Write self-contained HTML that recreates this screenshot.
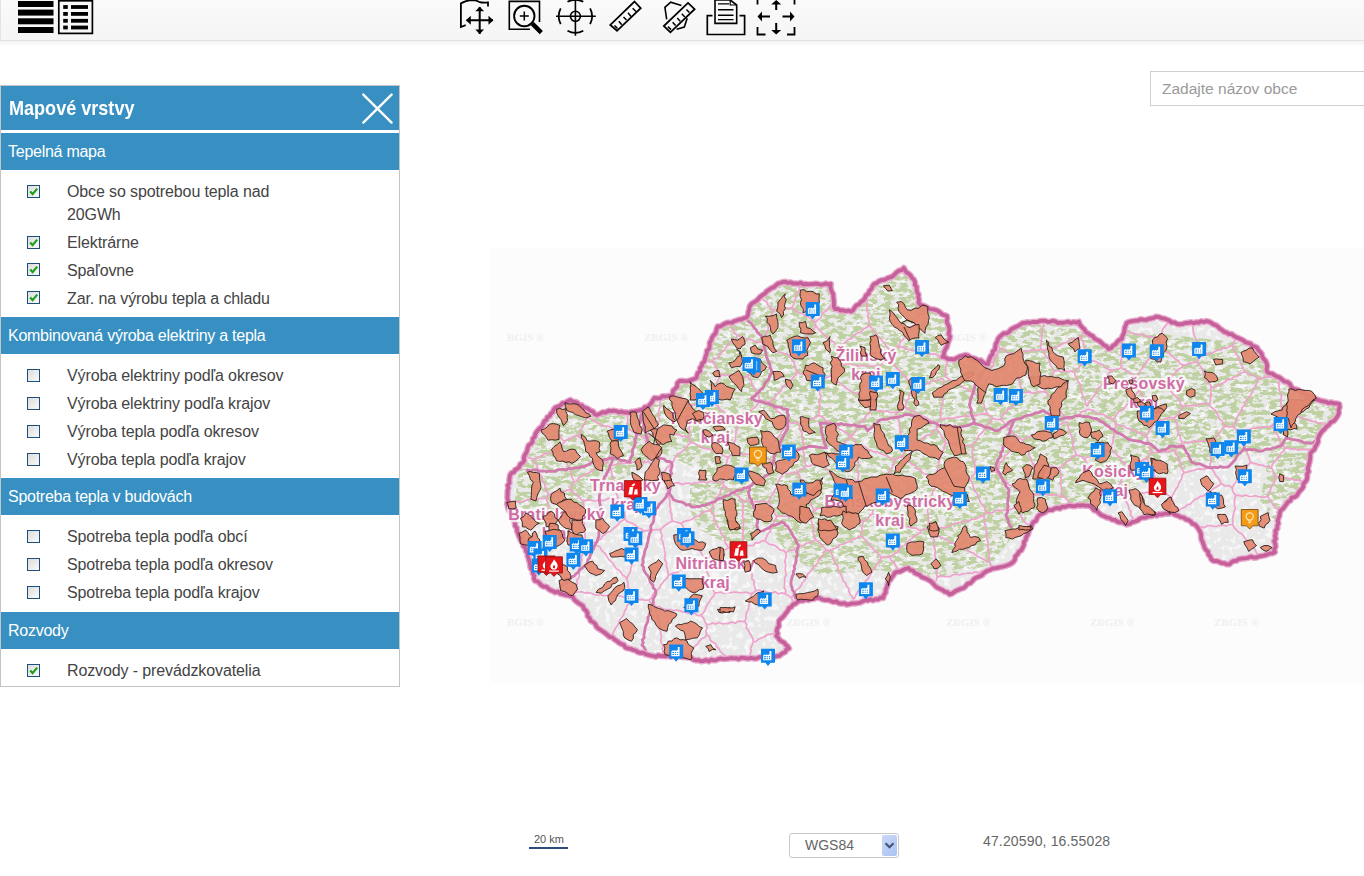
<!DOCTYPE html>
<html><head><meta charset="utf-8">
<style>
html,body{margin:0;padding:0;width:1364px;height:876px;overflow:hidden;background:#fff;font-family:"Liberation Sans",sans-serif;position:relative}
.abs{position:absolute}
#toolbar{position:absolute;left:0;top:0;width:1363px;height:40px;background:linear-gradient(#fafafa,#f5f5f5);border-left:1px solid #e4e4e4;border-bottom:1px solid #e2e2e2}
#tshadow{position:absolute;left:0;top:41px;width:1364px;height:6px;background:linear-gradient(#f3f3f3,#fff)}
#panel{position:absolute;left:0;top:85px;width:398px;height:600px;border:1px solid #c4c4c4;background:#fff}
.ttl{position:absolute;left:0;top:0;width:398px;height:44px;background:#3790c1}
.ttl span{position:absolute;left:8px;top:10px;font-weight:bold;font-size:21px;color:#fff;line-height:23px;transform:scaleX(0.86);transform-origin:0 0;white-space:nowrap}
.hdr{position:absolute;left:0;width:398px;height:37px;background:#3790c1;color:#fff;font-size:16px;line-height:20px}
.hdr span{position:absolute;left:7px;top:9px;letter-spacing:-0.26px}
.row{position:absolute;left:66px;font-size:16px;color:#444;line-height:23px;letter-spacing:-0.12px;white-space:nowrap}
.cb{position:absolute;left:26px;width:11px;height:11px;border:1px solid #1d4f7c;background:linear-gradient(135deg,#dcdcdc,#fafafa)}
.cb svg{position:absolute;left:0;top:0}
</style></head><body>
<div id="toolbar"></div>
<svg class="abs" style="left:0;top:0" width="820" height="40" viewBox="0 0 820 40">
<g fill="#000">
<rect x="18" y="1" width="35.5" height="6"/><rect x="18" y="9.6" width="35.5" height="6"/><rect x="18" y="18.3" width="35.5" height="6"/><rect x="18" y="27" width="35.5" height="6"/>
<rect x="63.2" y="5.1" width="4.6" height="3.8"/><rect x="71" y="5.1" width="17" height="3.8"/>
<rect x="63.2" y="12" width="4.6" height="3.8"/><rect x="71" y="12" width="17" height="3.8"/>
<rect x="63.2" y="18.9" width="4.6" height="3.8"/><rect x="71" y="18.9" width="17" height="3.8"/>
<rect x="63.2" y="25.6" width="4.6" height="3.8"/><rect x="71" y="25.6" width="17" height="3.8"/>
</g>
<rect x="58.8" y="0.8" width="33.6" height="32.6" fill="none" stroke="#000" stroke-width="1.7"/>
<g fill="none" stroke="#000" stroke-width="1.8">
<path d="M465.7 25.1 L460.9 27 L460.9 3.4 Q466 0.5 471 0.2 Q476 0.2 479 1.8 Q482 3 488 2.4 L488 6.4"/>
<path d="M466.5 20.3 H493 M479.7 7 V34" stroke-width="2"/>
</g>
<g fill="#000">
<path d="M466 20.3 L470.8 15.8 L470.8 24.8 Z M493.3 20.3 L488.5 15.8 L488.5 24.8 Z M479.7 6.8 L475.3 11.3 L484.1 11.3 Z M479.7 34 L475.3 29.5 L484.1 29.5 Z"/>
</g>
<g fill="none" stroke="#000">
<path d="M539.5 22 V1.4 H509.3 V29.3 H530" stroke-width="1.6"/>
<circle cx="524.3" cy="16" r="10.2" stroke-width="1.9"/>
<path d="M524.3 11.5 V20.5 M519.8 16 H528.8" stroke-width="1.5"/>
<path d="M532.3 23.6 L541.3 32.6" stroke-width="4.4"/>
</g>
<g fill="none" stroke="#000" stroke-width="1.6">
<path d="M556 16.3 H595.8 M575.4 0 V35.8"/>
<circle cx="575.4" cy="16.3" r="5"/>
<path d="M567.5 1.8 A17 17 0 0 1 583.3 1.8 M583.3 30.8 A17 17 0 0 1 567.5 30.8 M560.7 8.4 A17 17 0 0 0 560.7 24.2 M590.1 24.2 A17 17 0 0 0 590.1 8.4" stroke-width="1.8"/>
</g>
<g fill="none" stroke="#000" stroke-width="1.8" stroke-linejoin="miter">
<path d="M634.5 1.5 L640.7 8.1 L617 30.8 L610.3 24.9 Z"/>
<path d="M614.5 25.5 L617.5 28.5 M618.8 21.2 L621.8 24.8 M623.5 17 L626.5 20 M628 12.8 L631 16.5 M632.6 8.3 L636 11.5" stroke-width="1.5"/>
<path d="M688 2.9 L694.6 9.2 L670.4 32.3 L663.8 26 Z"/>
<path d="M668 26.6 L671 29.6 M672.6 22.3 L675.6 25.6 M677.2 18 L680.2 21.2 M681.8 13.7 L684.8 17 M686.4 9.4 L689.4 12.6" stroke-width="1.5"/>
<path d="M666.7 19.4 L664.9 7.3 L670.7 2.2 L681.4 5.5 M687.2 18.3 L684.3 27.1 L676.6 29.3" stroke-width="1.6"/>
</g>
<g fill="none" stroke="#000" stroke-width="1.7">
<path d="M712.5 15.7 H707.3 V34.5 H744.6 V15.7 H739.5"/>
<path d="M715 0 V23.4 H736.7 V5 L730.2 0 Z" stroke-width="1.6"/>
<path d="M730.2 0 V5 H736.7" stroke-width="1.2"/>
<path d="M718 3.9 H729 M718 9.7 H733.5 M718 15.3 H733.5 M718 19.6 H733.5" stroke-width="1.4"/>
</g>
<g fill="none" stroke="#000" stroke-width="1.8">
<path d="M757.5 0 V4.5 M794.5 0 V4.5 M757.5 27 V34.5 H765.5 M794.5 27 V34.5 H787"/>
<path d="M776.2 10 V2 M776.2 23 V31 M770 16.5 H761 M782.5 16.5 H791" stroke-width="2"/>
</g>
<g fill="#000">
<path d="M776.2 0 L771.2 4.5 L781.2 4.5 Z M776.2 34.5 L771.2 30 L781.2 30 Z M757.5 16.5 L762 11.5 L762 21.5 Z M794.5 16.5 L790 11.5 L790 21.5 Z"/>
</g>
</svg>
<div id="tshadow"></div>

<!--MAP-->
<svg class="abs" style="left:0;top:0" width="1364" height="876" viewBox="0 0 1364 876">
<defs>
<clipPath id="sk"><polygon points="507.6,490.5 508.5,488.1 507.7,485.3 509.5,483.1 509.3,480.5 509.6,477.9 510.0,475.4 511.3,473.1 514.0,472.2 515.2,469.8 517.6,468.6 519.4,466.9 520.3,464.2 522.6,462.9 524.3,460.7 523.8,457.7 524.7,455.2 526.1,452.9 527.2,450.4 527.7,447.8 528.7,445.3 531.1,443.7 532.6,441.6 532.8,438.6 534.8,436.8 535.4,434.0 536.7,431.7 538.4,429.6 540.2,427.7 542.4,426.2 543.2,423.7 544.3,421.3 546.5,419.8 547.3,417.3 549.8,416.1 550.8,413.7 552.9,412.1 553.7,409.6 555.3,407.6 558.0,406.6 560.5,405.5 562.6,403.2 565.5,402.8 567.9,401.2 570.4,400.0 572.4,401.5 575.1,401.9 577.4,402.8 579.0,405.1 581.8,405.3 583.5,407.3 586.0,408.0 588.4,409.1 590.4,410.8 593.0,411.5 594.5,414.0 597.0,415.0 599.9,413.8 602.6,412.2 606.0,412.5 608.7,410.7 611.2,411.1 613.8,410.7 616.4,411.1 618.8,412.4 621.4,411.6 623.9,412.5 626.5,412.3 629.0,413.0 631.6,411.7 634.5,411.4 637.3,411.0 640.1,410.2 642.8,409.6 645.0,407.1 648.0,407.0 649.6,404.8 651.6,402.8 652.9,400.3 654.4,398.0 657.2,398.3 660.0,398.2 662.6,396.2 665.4,396.5 668.2,396.0 671.0,396.0 672.8,393.7 673.1,390.6 675.4,388.6 677.3,386.4 677.4,383.1 679.5,381.0 682.1,380.8 684.8,381.2 687.4,381.3 690.0,380.4 693.3,379.4 696.3,377.9 697.0,375.4 697.8,372.9 700.1,371.1 700.0,368.1 701.7,366.1 702.2,363.5 704.4,361.6 705.0,359.0 705.7,356.3 706.7,353.6 706.9,350.7 709.4,348.5 709.7,345.6 709.7,342.7 711.3,340.2 712.0,337.8 713.3,335.6 715.3,333.7 716.1,331.3 716.7,328.8 717.6,326.4 720.3,326.5 722.5,325.1 724.7,323.7 727.0,322.7 729.6,322.7 732.2,322.6 734.4,321.1 736.8,320.5 739.2,319.5 741.7,319.3 744.0,318.1 746.5,317.6 748.0,315.0 748.4,312.0 749.3,309.2 749.7,306.3 751.5,303.8 753.9,302.4 756.2,301.0 758.2,299.1 760.0,297.0 762.3,295.2 764.9,293.7 766.7,291.3 769.2,289.7 771.6,288.0 774.0,287.1 775.9,285.3 777.9,283.7 780.5,283.0 782.8,282.0 785.4,281.8 787.8,282.9 790.5,282.3 792.9,283.5 795.5,283.4 798.0,283.7 800.7,282.7 803.1,284.3 805.7,284.0 808.2,284.4 810.7,284.2 813.2,284.1 815.7,283.6 818.2,284.0 820.8,284.8 823.3,284.4 825.8,283.4 828.3,284.4 830.8,284.0 830.4,286.6 831.0,289.1 831.6,291.6 833.2,293.9 833.3,296.4 833.6,298.9 833.9,301.5 833.9,304.0 833.9,306.6 835.0,309.0 837.8,308.8 840.2,310.5 843.0,310.2 845.6,311.2 848.4,310.6 851.0,311.6 853.3,310.0 854.7,307.4 856.5,305.3 859.3,304.2 860.9,301.8 863.3,300.3 865.0,298.0 866.0,295.3 868.6,293.7 869.3,290.9 871.5,289.0 872.4,286.3 874.0,284.0 876.7,283.1 879.0,281.1 881.8,280.1 884.7,279.8 887.3,278.3 890.0,277.4 892.7,276.4 894.7,274.4 896.7,272.3 898.9,270.7 901.9,270.1 903.8,268.0 905.1,270.2 906.5,272.4 908.8,273.8 910.7,275.6 911.9,277.9 913.9,279.6 915.0,282.0 914.8,284.7 916.7,286.9 916.6,289.6 917.0,292.2 918.6,294.5 918.3,297.2 919.0,299.7 918.6,302.4 920.0,304.8 922.8,305.5 925.4,306.5 927.9,308.1 930.6,309.2 933.5,309.4 936.0,310.1 938.2,311.1 940.3,312.5 942.2,314.5 944.6,315.2 947.0,316.0 947.3,318.6 946.7,321.2 947.5,323.7 948.7,326.2 949.3,328.7 949.1,331.3 948.6,333.9 950.1,336.4 949.5,339.0 948.4,341.5 947.5,344.1 946.9,346.8 945.4,349.2 944.2,351.7 943.9,354.6 942.6,357.0 945.5,357.5 948.1,359.2 951.1,359.2 954.0,359.6 956.7,358.1 959.5,356.6 962.5,355.8 965.5,355.0 968.1,355.7 970.2,357.7 972.9,358.2 975.5,358.9 977.8,360.6 980.8,360.3 982.8,362.4 985.3,363.6 988.0,364.0 988.6,361.3 989.6,358.8 990.6,356.3 992.5,354.2 992.8,351.4 995.1,349.5 995.4,346.7 995.8,343.9 997.2,341.6 998.0,339.0 999.7,336.8 1001.8,335.0 1003.8,333.3 1007.0,333.3 1009.2,331.8 1010.9,329.5 1013.2,328.2 1015.7,327.0 1018.2,326.0 1020.4,324.5 1022.6,323.0 1025.1,322.8 1027.6,322.3 1030.1,322.8 1032.6,322.0 1035.1,321.9 1037.6,322.0 1040.0,320.9 1042.5,320.8 1045.0,320.8 1047.5,321.8 1050.0,321.8 1052.7,320.9 1055.2,321.3 1057.6,323.0 1060.2,322.7 1062.8,322.8 1065.5,322.4 1068.1,321.7 1070.9,323.0 1073.5,322.0 1076.2,322.6 1078.8,321.7 1079.8,324.7 1081.9,327.1 1084.3,329.2 1085.7,332.0 1088.0,333.4 1090.3,335.0 1092.8,336.1 1094.5,338.6 1096.9,339.8 1099.4,341.0 1101.7,343.0 1103.8,345.1 1106.7,346.5 1108.5,349.0 1111.2,348.0 1113.0,345.6 1115.5,344.3 1117.2,341.8 1119.3,339.9 1122.0,338.8 1122.4,336.0 1123.8,333.5 1124.3,330.8 1124.7,328.0 1125.7,325.4 1126.8,322.8 1129.5,321.7 1132.3,321.2 1135.1,320.7 1138.0,320.5 1140.5,319.3 1143.2,319.7 1145.9,319.9 1148.4,318.9 1151.0,318.5 1153.5,318.0 1156.0,316.6 1158.7,317.0 1161.3,318.1 1164.1,318.5 1166.7,319.5 1169.4,320.5 1171.6,322.5 1174.6,322.4 1177.0,324.0 1179.9,324.4 1182.8,323.9 1185.5,323.0 1188.4,322.8 1191.0,322.2 1193.6,323.2 1196.1,322.2 1198.7,322.7 1201.2,321.2 1203.9,322.0 1206.4,321.1 1209.0,321.7 1211.3,322.9 1213.4,324.4 1215.9,325.2 1218.0,326.7 1219.9,328.6 1222.0,330.0 1224.1,331.8 1226.7,332.5 1228.8,334.1 1231.8,334.1 1233.8,335.9 1236.1,337.2 1238.6,338.1 1241.0,339.3 1243.4,340.4 1245.5,342.2 1248.0,343.0 1250.5,343.6 1252.1,346.1 1254.7,346.5 1257.0,347.6 1258.2,350.0 1260.1,351.8 1261.7,353.9 1262.3,356.6 1263.6,358.9 1265.5,360.8 1266.7,363.5 1267.2,366.4 1266.5,369.4 1267.3,372.2 1269.7,373.4 1272.5,373.7 1274.6,375.4 1277.0,376.6 1279.8,377.6 1282.0,379.5 1284.3,381.5 1287.3,382.0 1289.7,383.7 1291.1,386.4 1293.0,388.8 1295.8,389.4 1298.5,390.2 1300.6,392.4 1303.5,392.6 1305.7,394.7 1308.3,395.7 1311.0,396.3 1313.6,397.4 1315.6,399.1 1318.1,399.9 1320.5,400.8 1323.2,401.3 1325.9,401.8 1328.4,403.1 1331.3,402.4 1333.9,403.4 1336.7,403.5 1339.3,404.2 1339.6,407.3 1338.6,410.1 1338.9,413.2 1337.6,416.0 1335.8,418.6 1333.9,421.0 1330.7,422.2 1329.0,424.8 1326.5,426.6 1324.6,429.0 1322.4,431.0 1320.5,433.4 1319.1,436.0 1318.0,438.7 1318.1,441.8 1316.8,444.5 1315.3,447.0 1314.2,449.7 1311.8,451.5 1310.2,453.9 1310.3,457.0 1310.0,460.0 1309.3,462.9 1308.5,465.9 1307.8,468.6 1308.7,471.5 1307.1,474.1 1307.3,476.9 1306.8,479.6 1305.3,481.8 1303.4,483.8 1303.3,486.9 1301.7,489.1 1299.7,491.0 1298.2,493.3 1296.7,495.7 1294.5,497.1 1291.5,497.7 1290.5,500.6 1288.0,501.8 1286.4,504.1 1284.7,506.3 1283.1,508.6 1280.7,510.3 1279.7,513.0 1279.6,515.6 1278.5,518.1 1277.6,520.6 1278.4,523.4 1277.3,525.8 1277.4,528.5 1275.5,530.8 1275.7,533.5 1275.0,536.0 1275.8,538.7 1274.1,541.3 1275.3,544.0 1275.6,546.7 1274.1,549.3 1275.0,552.0 1272.5,553.3 1269.7,553.4 1267.1,554.6 1264.5,555.4 1261.7,556.0 1259.0,556.4 1256.5,557.5 1253.9,557.7 1251.2,556.6 1248.7,557.6 1246.2,558.2 1243.6,558.4 1241.0,558.7 1238.5,559.2 1236.4,560.8 1233.8,561.0 1231.5,562.1 1229.7,564.3 1227.0,564.4 1224.4,563.2 1221.6,563.1 1219.0,561.8 1216.4,560.9 1213.5,561.0 1211.3,559.2 1210.3,556.6 1208.4,554.5 1208.0,551.5 1205.7,549.7 1204.4,547.3 1203.6,544.6 1202.6,542.0 1201.4,539.5 1201.1,536.7 1201.0,533.8 1199.8,531.3 1198.5,528.8 1196.9,526.6 1195.0,524.5 1192.4,523.7 1190.7,521.5 1188.5,520.0 1185.8,519.3 1183.8,517.6 1180.7,517.1 1178.0,515.7 1175.0,514.9 1172.4,513.0 1169.8,513.5 1167.2,513.7 1164.5,513.6 1161.9,514.6 1159.2,514.1 1156.7,515.6 1154.0,515.0 1151.3,516.2 1148.4,516.3 1145.6,517.5 1142.7,517.6 1139.9,518.5 1137.7,520.5 1135.0,521.5 1132.1,522.2 1129.7,523.9 1126.8,524.5 1124.5,523.5 1122.3,522.2 1119.5,522.4 1117.1,521.6 1115.0,520.0 1112.1,519.7 1109.7,518.0 1106.9,517.5 1104.3,516.3 1101.6,515.3 1099.3,513.4 1097.2,511.2 1094.1,510.3 1092.3,507.9 1090.0,506.0 1087.5,505.7 1085.0,505.7 1082.5,505.2 1080.0,505.7 1077.4,505.2 1074.9,506.2 1072.4,506.2 1069.9,505.5 1067.4,506.0 1064.9,506.9 1062.1,506.6 1059.9,508.6 1057.0,507.8 1054.4,508.6 1052.1,510.1 1049.3,509.8 1046.8,510.8 1044.2,512.8 1041.2,514.0 1038.5,515.7 1037.0,518.0 1036.1,520.7 1033.3,522.1 1032.0,524.6 1031.2,527.3 1029.4,529.4 1028.6,532.1 1027.8,534.7 1026.2,537.1 1025.6,539.8 1023.9,542.2 1023.9,545.1 1022.6,547.6 1021.4,550.2 1018.8,551.8 1017.5,554.4 1015.4,556.3 1014.9,559.5 1013.4,561.8 1011.0,563.6 1008.6,564.8 1006.1,565.7 1003.5,566.5 1000.9,567.0 998.3,567.6 995.7,568.2 992.9,568.4 990.5,569.7 988.0,570.5 985.7,571.7 983.6,573.3 981.9,575.3 979.5,576.4 977.0,577.3 974.3,578.7 972.5,581.0 970.4,583.1 967.3,583.9 965.5,586.4 963.5,588.1 960.9,588.7 958.6,589.7 956.2,590.7 954.1,592.1 951.9,593.6 949.5,594.4 947.6,592.3 944.8,591.7 942.6,590.0 940.1,588.9 937.6,587.7 935.4,586.2 933.5,584.0 931.6,581.9 929.3,580.4 927.0,579.0 924.4,577.9 921.7,577.1 919.8,575.0 917.3,573.9 914.8,572.9 913.1,570.6 910.3,570.1 908.4,568.0 905.6,568.8 903.0,570.0 900.4,571.5 897.4,571.8 894.7,572.7 893.6,575.1 891.9,577.2 890.6,579.5 888.5,581.3 887.8,584.0 887.0,586.8 885.7,589.5 885.7,592.5 883.9,595.0 883.3,597.9 880.6,597.6 878.3,599.4 875.6,599.2 873.1,600.4 870.3,599.2 867.9,600.5 865.1,600.1 862.7,601.3 860.2,602.6 857.5,603.1 854.8,603.4 852.1,603.4 849.4,604.1 846.8,604.7 844.4,603.2 841.5,603.7 838.8,603.2 836.5,601.4 833.6,602.0 831.0,601.1 828.5,600.0 825.3,600.1 822.2,599.4 819.4,597.9 816.5,597.6 813.9,599.0 811.1,599.1 808.4,600.2 805.5,599.5 802.8,600.7 800.0,600.7 797.6,601.8 795.6,603.6 793.0,604.5 791.4,606.9 789.0,608.0 787.9,610.6 786.2,612.7 784.6,614.9 782.9,617.0 780.8,618.8 779.0,620.8 778.7,623.4 779.0,626.0 777.3,628.3 776.6,630.8 777.7,633.6 776.4,636.0 778.2,637.7 779.5,640.0 781.6,641.5 784.1,642.6 785.6,644.7 787.6,646.2 789.0,648.4 786.5,649.2 785.4,651.9 783.0,653.0 780.9,654.4 779.0,656.0 776.5,656.1 774.0,657.2 771.5,657.4 769.0,657.5 766.3,656.7 763.8,657.1 761.3,656.9 758.8,657.4 756.4,658.6 753.8,658.5 751.3,657.9 748.8,658.5 746.3,658.4 743.8,657.9 741.2,657.7 738.7,659.1 736.2,658.2 733.7,658.3 731.2,658.0 728.7,658.5 726.2,658.8 723.7,659.0 721.1,658.5 718.6,658.8 716.2,660.2 713.7,660.3 711.1,659.6 708.7,661.4 706.0,660.0 703.6,661.0 700.9,661.2 698.5,660.1 695.9,660.4 693.4,659.7 691.1,657.9 688.6,657.4 686.0,657.3 683.4,657.1 680.9,656.8 678.4,656.0 675.9,656.6 673.4,655.2 670.9,656.8 668.4,655.5 665.8,656.3 663.3,655.9 660.8,656.1 658.3,655.2 655.8,656.8 653.3,656.0 650.7,655.5 648.1,654.8 645.6,654.2 643.3,652.7 640.5,652.8 637.9,652.1 635.7,650.5 633.1,649.9 630.7,648.8 628.0,648.4 625.4,647.4 623.9,644.9 621.2,644.0 618.8,642.7 616.8,640.8 614.5,639.5 612.6,637.5 609.7,636.9 607.7,635.2 605.6,633.4 603.3,631.7 601.0,630.1 598.6,628.7 596.5,626.8 595.3,623.9 593.1,622.1 590.5,620.8 589.8,618.1 587.6,616.1 587.5,613.0 586.1,610.6 583.9,608.7 583.0,606.0 580.8,604.5 578.5,603.1 576.4,601.4 574.3,599.7 573.0,597.0 570.4,596.0 567.9,595.3 565.2,595.0 562.7,594.2 560.2,593.7 558.0,591.7 555.1,592.4 552.8,591.0 550.4,590.1 548.3,588.7 546.5,586.7 543.6,586.6 541.4,585.4 539.7,583.4 537.8,581.5 535.2,581.0 533.9,578.6 534.3,575.7 532.7,573.4 532.7,570.7 530.8,568.5 530.2,565.9 530.0,563.3 529.2,560.9 528.6,558.4 527.6,555.9 527.7,553.3 525.9,551.0 525.6,548.0 523.3,546.0 522.8,543.1 521.0,540.9 520.0,538.2 518.8,535.8 518.0,533.3 517.0,530.9 517.0,528.1 515.1,525.9 515.0,523.2 513.9,520.7 512.2,518.5 512.6,515.3 510.8,513.1 509.2,510.8 508.2,508.3 507.6,505.6 507.1,503.1 508.1,500.6 507.4,498.1 507.5,495.5 507.6,493.0"/></clipPath>
<filter id="noise" color-interpolation-filters="sRGB" x="0" y="0" width="100%" height="100%"><feTurbulence type="fractalNoise" baseFrequency="0.13 0.26" numOctaves="4" seed="7" result="n"/><feColorMatrix in="n" type="matrix" values="0 0 0 0 0.75  0 0 0 0 0.82  0 0 0 0 0.64  0 0 0 9 -4.05"/></filter>
<filter id="noisew" color-interpolation-filters="sRGB" x="0" y="0" width="100%" height="100%"><feTurbulence type="fractalNoise" baseFrequency="0.18" numOctaves="2" seed="11" result="n"/><feColorMatrix in="n" type="matrix" values="0 0 0 0 0.965  0 0 0 0 0.965  0 0 0 0 0.965  0 0 0 10 -5.4"/></filter>
<filter id="jag" x="480" y="250" width="880" height="430" filterUnits="userSpaceOnUse"><feTurbulence type="turbulence" baseFrequency="0.13" numOctaves="2" seed="3" result="t"/><feDisplacementMap in="SourceGraphic" in2="t" scale="4" xChannelSelector="R" yChannelSelector="G"/></filter>
<filter id="jag2" x="480" y="250" width="880" height="430" filterUnits="userSpaceOnUse"><feTurbulence type="turbulence" baseFrequency="0.18" numOctaves="2" seed="5" result="t"/><feDisplacementMap in="SourceGraphic" in2="t" scale="3" xChannelSelector="R" yChannelSelector="G"/></filter>
</defs>
<rect x="490" y="248" width="874" height="435" fill="#fcfcfc"/>
<text x="507" y="341" font-family="Liberation Serif" font-weight="bold" font-size="11" fill="#f0f0f0">BGIS ®</text>
<text x="644" y="341" font-family="Liberation Serif" font-weight="bold" font-size="11" fill="#f0f0f0">ZBGIS ®</text>
<text x="942" y="341" font-family="Liberation Serif" font-weight="bold" font-size="11" fill="#f0f0f0">ZBGIS ®</text>
<text x="507" y="626" font-family="Liberation Serif" font-weight="bold" font-size="11" fill="#f0f0f0">BGIS ®</text>
<text x="786" y="626" font-family="Liberation Serif" font-weight="bold" font-size="11" fill="#f0f0f0">ZBGIS ®</text>
<text x="946" y="626" font-family="Liberation Serif" font-weight="bold" font-size="11" fill="#f0f0f0">ZBGIS ®</text>
<text x="1090" y="626" font-family="Liberation Serif" font-weight="bold" font-size="11" fill="#f0f0f0">ZBGIS ®</text>
<text x="1214" y="626" font-family="Liberation Serif" font-weight="bold" font-size="11" fill="#f0f0f0">ZBGIS ®</text>
<g clip-path="url(#sk)">
<rect x="490" y="248" width="874" height="435" fill="#e9e9e9"/>
<rect x="490" y="248" width="874" height="435" filter="url(#noisew)"/>
<g>
<clipPath id="g139758558533184"><polygon points="650.0,395.0 716.0,326.0 771.0,284.0 904.0,268.0 1040.0,320.0 1260.0,345.0 1340.0,405.0 1310.0,455.0 1290.0,480.0 1270.0,450.0 1180.0,470.0 1100.0,500.0 1030.0,515.0 990.0,565.0 930.0,580.0 880.0,570.0 820.0,575.0 790.0,555.0 760.0,520.0 730.0,500.0 700.0,470.0 655.0,450.0"/></clipPath>
<rect x="490" y="248" width="874" height="435" filter="url(#noise)" clip-path="url(#g139758558533184)"/>
<clipPath id="g139758556627264"><polygon points="520.0,460.0 570.0,400.0 655.0,398.0 660.0,440.0 640.0,470.0 600.0,490.0 570.0,520.0 540.0,525.0 515.0,500.0"/></clipPath>
<rect x="490" y="248" width="874" height="435" filter="url(#noise)" clip-path="url(#g139758556627264)"/>
<clipPath id="g139758556561280"><polygon points="1270.0,450.0 1310.0,450.0 1300.0,500.0 1280.0,530.0 1260.0,500.0"/></clipPath>
<rect x="490" y="248" width="874" height="435" filter="url(#noise)" clip-path="url(#g139758556561280)"/>
<clipPath id="g139758556627328"><polygon points="690.0,485.0 720.0,470.0 750.0,470.0 760.0,500.0 755.0,540.0 730.0,545.0 700.0,530.0 690.0,510.0"/></clipPath>
<rect x="490" y="248" width="874" height="435" filter="url(#noise)" clip-path="url(#g139758556627328)"/>
</g>
<polyline points="1311.4,450.6 1308.1,449.7 1304.8,449.1 1301.4,449.6 1298.1,449.9 1294.8,448.7 1291.4,449.1 1288.2,448.0 1284.8,448.3" fill="none" stroke="#efa2cc" stroke-width="1.7"/>
<polyline points="1327.0,425.4 1324.1,424.3 1321.1,423.4 1318.0,423.3 1315.3,421.4 1312.1,421.4 1309.1,420.5 1306.4,419.0 1303.2,418.8 1300.5,416.8 1297.3,416.9 1294.3,416.2 1291.1,416.0 1288.6,413.7 1285.3,413.9 1282.5,412.5" fill="none" stroke="#efa2cc" stroke-width="1.7"/>
<polyline points="1284.8,448.3 1283.1,445.5 1280.9,443.0 1279.5,440.1 1278.6,436.8 1276.8,434.1 1274.2,431.8 1273.7,428.3 1271.4,425.9" fill="none" stroke="#efa2cc" stroke-width="1.7"/>
<polyline points="1282.5,412.5 1280.8,415.6 1278.3,418.0 1276.3,420.9 1273.9,423.5 1271.4,425.9" fill="none" stroke="#efa2cc" stroke-width="1.7"/>
<polyline points="1278.5,378.6 1278.9,381.7 1279.1,384.8 1279.0,387.9 1279.5,391.0 1280.9,393.9 1281.4,397.0 1280.6,400.2 1281.0,403.3 1281.5,406.4 1281.2,409.5 1282.5,412.5" fill="none" stroke="#efa2cc" stroke-width="1.7"/>
<polyline points="1240.4,431.1 1236.2,429.5 1232.6,426.7" fill="none" stroke="#efa2cc" stroke-width="1.7"/>
<polyline points="1259.3,378.4 1257.4,380.8 1256.4,383.8 1255.1,386.6 1253.5,389.2 1252.3,392.0 1250.9,394.8 1248.9,397.2 1247.1,399.7 1245.4,402.3 1244.6,405.3 1242.2,407.5 1242.1,410.9 1239.1,412.8 1238.0,415.7 1236.4,418.3 1236.2,421.7 1233.9,423.9 1232.6,426.7" fill="none" stroke="#efa2cc" stroke-width="1.7"/>
<polyline points="1274.9,376.7 1271.8,377.1 1268.6,377.1 1265.4,376.8 1262.4,378.1 1259.3,378.4" fill="none" stroke="#efa2cc" stroke-width="1.7"/>
<polyline points="1240.4,431.1 1243.5,430.7 1246.7,430.4 1249.7,429.5 1252.7,428.2 1255.9,428.2 1258.9,427.2 1262.1,427.7 1265.2,426.7 1268.4,427.2 1271.4,425.9" fill="none" stroke="#efa2cc" stroke-width="1.7"/>
<polyline points="1250.6,462.3 1248.4,464.6 1246.2,466.9 1245.5,470.3 1243.7,472.9 1241.9,475.5 1239.4,477.5 1237.6,480.1 1235.5,482.5 1233.7,485.1 1232.1,487.8" fill="none" stroke="#efa2cc" stroke-width="1.7"/>
<polyline points="1250.6,462.3 1253.5,463.4 1256.5,463.9 1259.3,465.1 1262.5,465.2 1265.2,466.7 1268.5,466.3 1271.3,467.7" fill="none" stroke="#efa2cc" stroke-width="1.7"/>
<polyline points="1268.1,496.5 1264.8,497.2 1261.6,497.0 1258.4,496.7 1255.2,495.6 1251.9,496.5 1248.7,496.3 1245.5,495.0 1242.2,496.4 1239.0,495.4 1235.8,495.4" fill="none" stroke="#efa2cc" stroke-width="1.7"/>
<polyline points="1268.1,496.5 1268.3,493.2 1270.2,490.6 1271.1,487.6 1272.4,484.8 1274.5,482.2 1274.6,478.9 1275.9,476.1" fill="none" stroke="#efa2cc" stroke-width="1.7"/>
<polyline points="1235.8,495.4 1233.1,492.0 1232.1,487.8" fill="none" stroke="#efa2cc" stroke-width="1.7"/>
<polyline points="1275.9,476.1 1274.1,473.4 1273.1,470.4 1271.3,467.7" fill="none" stroke="#efa2cc" stroke-width="1.7"/>
<polyline points="1212.7,440.3 1213.1,443.4 1211.2,446.3 1211.0,449.4 1212.4,452.6 1210.4,455.4 1211.0,458.6 1211.1,461.7 1209.8,464.6 1210.1,467.7" fill="none" stroke="#efa2cc" stroke-width="1.7"/>
<polyline points="1221.3,483.5 1219.9,480.5 1218.1,477.8 1215.8,475.6 1214.3,472.7 1212.6,469.9 1210.1,467.7" fill="none" stroke="#efa2cc" stroke-width="1.7"/>
<polyline points="1225.8,426.1 1229.1,427.0 1232.6,426.7" fill="none" stroke="#efa2cc" stroke-width="1.7"/>
<polyline points="1225.8,426.1 1223.0,427.9 1221.0,430.4 1219.2,433.2 1217.4,435.9 1215.2,438.3 1212.7,440.3" fill="none" stroke="#efa2cc" stroke-width="1.7"/>
<polyline points="1240.4,431.1 1241.2,434.3 1243.3,437.0 1243.8,440.4 1245.2,443.3 1244.6,447.0 1246.4,449.9 1247.3,453.0 1248.3,456.1 1249.3,459.3 1250.6,462.3" fill="none" stroke="#efa2cc" stroke-width="1.7"/>
<polyline points="1221.3,483.5 1224.5,485.8 1228.8,485.5 1232.1,487.8" fill="none" stroke="#efa2cc" stroke-width="1.7"/>
<polyline points="1284.8,448.3 1283.5,451.5 1280.4,453.4 1279.4,456.9 1276.6,459.0 1274.7,461.8 1272.4,464.4 1271.3,467.7" fill="none" stroke="#efa2cc" stroke-width="1.7"/>
<polyline points="1259.6,555.2 1256.9,553.4 1255.3,550.7 1254.0,547.7 1251.6,545.7 1248.6,544.1 1247.6,540.9 1245.3,538.8 1243.7,536.0 1241.6,533.7 1238.6,532.2 1236.5,530.0 1234.3,527.7 1232.9,524.8" fill="none" stroke="#efa2cc" stroke-width="1.7"/>
<polyline points="1278.7,512.9 1277.7,509.6 1275.5,507.2 1273.0,504.9 1271.7,501.9 1269.3,499.6 1268.1,496.5" fill="none" stroke="#efa2cc" stroke-width="1.7"/>
<polyline points="1232.9,524.8 1232.7,521.5 1232.6,518.2 1233.4,515.0 1233.9,511.7 1235.4,508.6 1234.4,505.2 1234.5,501.9 1234.7,498.6 1235.8,495.4" fill="none" stroke="#efa2cc" stroke-width="1.7"/>
<polyline points="1304.0,482.2 1301.0,480.9 1298.0,479.9 1294.6,480.2 1291.6,478.9 1288.5,478.5 1285.3,477.9 1282.0,478.2 1278.9,477.2 1275.9,476.1" fill="none" stroke="#efa2cc" stroke-width="1.7"/>
<polyline points="1211.2,388.0 1210.5,384.7 1207.6,382.5 1205.8,379.8 1204.8,376.6 1203.3,373.8 1202.6,370.4 1201.2,367.5 1199.3,364.8 1197.3,362.2" fill="none" stroke="#efa2cc" stroke-width="1.7"/>
<polyline points="1211.2,388.0 1214.4,387.5 1217.2,386.1 1219.9,384.5 1222.7,383.0 1225.5,381.6 1227.9,379.4 1231.3,379.2 1233.7,377.0 1236.9,376.5 1239.1,373.8 1242.1,372.7 1245.2,372.0" fill="none" stroke="#efa2cc" stroke-width="1.7"/>
<polyline points="1232.4,345.6 1233.3,348.8 1234.7,351.7 1236.5,354.5 1238.8,357.0 1239.6,360.2 1240.6,363.4 1242.2,366.2 1243.4,369.2 1245.2,372.0" fill="none" stroke="#efa2cc" stroke-width="1.7"/>
<polyline points="1232.4,345.6 1229.4,346.3 1226.8,348.2 1223.5,348.0 1220.9,350.0 1217.7,350.0 1214.9,351.5 1212.2,353.0 1209.2,353.9 1205.8,353.5 1203.3,355.5 1200.3,356.3" fill="none" stroke="#efa2cc" stroke-width="1.7"/>
<polyline points="1200.3,356.3 1198.1,358.9 1197.3,362.2" fill="none" stroke="#efa2cc" stroke-width="1.7"/>
<polyline points="1209.3,403.9 1210.5,400.8 1210.4,397.6 1211.4,394.5 1210.7,391.2 1211.2,388.0" fill="none" stroke="#efa2cc" stroke-width="1.7"/>
<polyline points="1225.8,426.1 1223.5,424.0 1222.3,421.0 1219.6,419.2 1218.4,416.2 1217.0,413.5 1215.5,410.8 1213.2,408.7 1210.6,406.8 1209.3,403.9" fill="none" stroke="#efa2cc" stroke-width="1.7"/>
<polyline points="1259.3,378.4 1256.4,377.3 1253.8,375.5 1250.6,375.0 1247.9,373.4 1245.2,372.0" fill="none" stroke="#efa2cc" stroke-width="1.7"/>
<polyline points="1235.5,337.9 1234.1,341.8 1232.4,345.6" fill="none" stroke="#efa2cc" stroke-width="1.7"/>
<polyline points="1191.3,323.6 1192.8,326.4 1193.1,329.5 1193.4,332.6 1194.4,335.5 1195.6,338.4 1196.9,341.2 1197.5,344.3 1198.6,347.2 1198.0,350.5 1199.5,353.3 1200.3,356.3" fill="none" stroke="#efa2cc" stroke-width="1.7"/>
<polyline points="611.0,635.8 613.0,633.3 614.3,630.5 615.8,627.7 617.7,625.3 618.9,622.3 620.1,619.4 622.1,617.0 623.8,614.4 624.5,611.1 626.3,608.6 627.3,605.6 629.3,603.1 630.5,600.2 632.8,597.9" fill="none" stroke="#efa2cc" stroke-width="1.7"/>
<polyline points="569.9,594.8 572.9,593.9 575.6,592.2" fill="none" stroke="#efa2cc" stroke-width="1.7"/>
<polyline points="575.6,592.2 578.8,592.0 581.9,591.8 585.0,592.8 588.2,592.6 591.3,593.2 594.3,594.6 597.5,594.9 600.6,595.0 603.7,595.6 606.9,595.5 610.1,595.0 613.3,594.5 616.3,595.6 619.5,595.8 622.6,596.8 625.7,597.4 628.9,596.4 632.0,597.1" fill="none" stroke="#efa2cc" stroke-width="1.7"/>
<polyline points="776.1,632.0 773.4,633.6 770.2,634.1 767.2,634.9 764.5,636.7 761.6,637.7 758.7,639.0 756.3,641.1 753.3,642.1" fill="none" stroke="#efa2cc" stroke-width="1.7"/>
<polyline points="749.0,657.5 750.1,654.5 751.0,651.4 750.7,648.0 752.1,645.1 753.3,642.1" fill="none" stroke="#efa2cc" stroke-width="1.7"/>
<polyline points="685.5,656.4 687.4,654.0 689.7,652.0 691.4,649.4 693.6,647.3 695.9,645.3 698.2,643.3 699.8,640.6 701.9,638.4 705.0,637.2 706.8,634.7" fill="none" stroke="#efa2cc" stroke-width="1.7"/>
<polyline points="726.9,657.7 724.9,655.4 722.4,653.5 720.4,651.2 718.8,648.6 716.6,646.4 715.4,643.4 712.4,642.0 710.1,640.0 709.4,636.5 706.8,634.7" fill="none" stroke="#efa2cc" stroke-width="1.7"/>
<polyline points="1209.3,403.9 1206.0,403.6 1202.7,403.6 1199.4,404.1 1196.3,406.1 1192.9,405.1 1189.7,405.8 1186.4,405.7 1183.2,406.7" fill="none" stroke="#efa2cc" stroke-width="1.7"/>
<polyline points="1183.0,364.9 1186.6,364.6 1190.1,363.1 1193.7,362.5 1197.3,362.2" fill="none" stroke="#efa2cc" stroke-width="1.7"/>
<polyline points="1183.0,364.9 1181.3,367.7 1178.2,369.2 1176.2,371.6 1174.4,374.3 1171.8,376.2 1170.9,379.7 1169.0,382.3 1166.3,384.1" fill="none" stroke="#efa2cc" stroke-width="1.7"/>
<polyline points="1166.3,384.1 1169.0,386.0 1170.2,389.0 1171.3,392.1 1173.4,394.4 1175.9,396.5 1178.1,398.7 1180.0,401.2 1180.6,404.8 1183.2,406.7" fill="none" stroke="#efa2cc" stroke-width="1.7"/>
<polyline points="1183.0,364.9 1180.0,363.6 1178.4,360.6 1175.4,359.2 1173.2,356.9 1170.7,355.0 1168.4,352.7 1165.9,350.9 1163.2,349.1 1161.5,346.3 1158.6,344.8" fill="none" stroke="#efa2cc" stroke-width="1.7"/>
<polyline points="1166.3,384.1 1163.1,383.3 1160.0,383.7 1156.8,384.4 1153.7,385.3 1150.5,385.5 1147.3,385.0 1144.1,384.0 1141.0,385.0" fill="none" stroke="#efa2cc" stroke-width="1.7"/>
<polyline points="1141.0,385.0 1140.1,381.8 1137.3,379.7 1136.2,376.6" fill="none" stroke="#efa2cc" stroke-width="1.7"/>
<polyline points="1136.2,376.6 1138.6,374.3 1139.9,371.3 1142.1,368.9 1142.9,365.5 1146.1,363.7 1147.3,360.6 1149.5,358.2 1150.5,355.0 1152.4,352.3 1154.1,349.6 1157.1,347.7 1158.6,344.8" fill="none" stroke="#efa2cc" stroke-width="1.7"/>
<polyline points="1168.4,321.8 1166.6,324.4 1164.5,326.9 1162.5,329.4 1162.0,332.9 1159.8,335.3 1157.6,337.7" fill="none" stroke="#efa2cc" stroke-width="1.7"/>
<polyline points="1157.6,337.7 1159.0,341.1 1158.6,344.8" fill="none" stroke="#efa2cc" stroke-width="1.7"/>
<polyline points="1136.2,376.6 1133.2,374.8 1130.3,373.1 1127.3,371.3 1124.3,369.6 1121.5,367.6" fill="none" stroke="#efa2cc" stroke-width="1.7"/>
<polyline points="1157.6,337.7 1154.4,337.1 1151.0,337.1 1147.8,336.2 1144.5,335.9 1141.5,333.9 1138.0,334.8 1134.8,334.0 1131.6,333.3 1128.6,331.6 1125.2,331.7" fill="none" stroke="#efa2cc" stroke-width="1.7"/>
<polyline points="1121.5,367.6 1120.9,364.6 1120.8,361.6 1121.6,358.5 1122.3,355.5 1120.8,352.5 1121.3,349.5 1121.6,346.4 1122.0,343.4 1121.5,340.4" fill="none" stroke="#efa2cc" stroke-width="1.7"/>
<polyline points="897.2,347.0 899.3,344.8 900.2,341.7 902.7,339.8 904.6,337.4 906.0,334.7 907.9,332.3 910.0,330.1 910.7,326.9 914.0,325.5 914.8,322.4 916.9,320.2 918.5,317.6 919.7,314.8 922.4,312.9 923.1,309.8 925.6,307.8" fill="none" stroke="#efa2cc" stroke-width="1.7"/>
<polyline points="897.2,347.0 900.4,346.7 903.3,347.4 906.1,348.9 909.0,350.0 912.1,350.3 915.1,350.7 918.2,350.8 921.0,351.9 924.1,351.9 926.9,353.4 929.9,354.2 933.0,354.1 936.1,354.1 938.8,356.3 941.9,356.1" fill="none" stroke="#efa2cc" stroke-width="1.7"/>
<polyline points="753.3,642.1 753.0,638.8 751.5,636.0 749.7,633.3 748.4,630.4 746.2,627.9 746.7,624.3 744.6,621.7" fill="none" stroke="#efa2cc" stroke-width="1.7"/>
<polyline points="706.8,634.7 705.6,631.3 707.2,627.7 706.2,624.2" fill="none" stroke="#efa2cc" stroke-width="1.7"/>
<polyline points="706.2,624.2 709.4,624.5 712.5,622.9 715.8,624.1 718.9,622.4 722.3,624.0 725.4,623.7 728.6,623.3 731.8,622.0 735.1,623.2 738.1,621.3 741.3,621.1 744.6,621.7" fill="none" stroke="#efa2cc" stroke-width="1.7"/>
<polyline points="525.9,456.2 529.9,458.0 534.0,459.4" fill="none" stroke="#efa2cc" stroke-width="1.7"/>
<polyline points="545.5,422.3 547.3,424.8 549.5,426.8 551.5,429.1 553.6,431.3 556.8,432.3 558.8,434.5 560.6,437.0 562.3,439.6 564.7,441.4" fill="none" stroke="#efa2cc" stroke-width="1.7"/>
<polyline points="534.0,459.4 536.8,458.2 539.8,457.5 542.1,455.2 544.7,453.4 548.2,453.9 551.0,452.6 553.7,451.3 556.0,449.0 558.9,447.9 561.7,446.7" fill="none" stroke="#efa2cc" stroke-width="1.7"/>
<polyline points="564.7,441.4 562.5,443.6 561.7,446.7" fill="none" stroke="#efa2cc" stroke-width="1.7"/>
<polyline points="705.9,359.4 708.8,361.6 712.4,362.2" fill="none" stroke="#efa2cc" stroke-width="1.7"/>
<polyline points="729.8,323.7 731.2,327.0 733.6,329.7 734.7,333.1 737.3,335.7" fill="none" stroke="#efa2cc" stroke-width="1.7"/>
<polyline points="737.3,335.7 735.7,338.4 733.2,340.2 730.5,341.8 728.5,344.1 726.6,346.4 725.2,349.2 722.9,351.3 720.3,352.9 719.3,356.2 717.0,358.2 713.8,359.3 712.4,362.2" fill="none" stroke="#efa2cc" stroke-width="1.7"/>
<polyline points="937.4,577.1 940.5,575.9 943.7,576.4 947.0,576.6 950.2,576.5 953.2,574.7 956.3,574.2 959.6,574.8 962.7,573.9 965.9,573.5 969.0,572.9 972.3,573.5 975.3,571.7 978.7,572.9 981.6,570.7 984.9,571.3" fill="none" stroke="#efa2cc" stroke-width="1.7"/>
<polyline points="934.5,583.5 936.2,580.4 937.4,577.1" fill="none" stroke="#efa2cc" stroke-width="1.7"/>
<polyline points="1124.4,494.2 1127.5,493.2 1130.7,492.8 1133.8,492.7 1137.1,494.4 1140.2,492.8 1143.4,493.1 1146.5,492.3 1149.7,492.4 1152.9,493.2 1156.0,492.1 1159.1,491.2 1162.3,491.9" fill="none" stroke="#efa2cc" stroke-width="1.7"/>
<polyline points="1124.4,494.2 1126.0,496.9 1125.6,500.3 1127.0,503.1 1128.4,505.9 1128.9,509.0 1131.0,511.6 1130.3,515.1 1132.7,517.6 1133.0,520.7" fill="none" stroke="#efa2cc" stroke-width="1.7"/>
<polyline points="1177.3,511.9 1176.9,508.7 1174.7,506.3 1173.3,503.5 1172.8,500.4 1171.4,497.6" fill="none" stroke="#efa2cc" stroke-width="1.7"/>
<polyline points="1171.4,497.6 1168.6,495.4 1165.5,493.5 1162.3,491.9" fill="none" stroke="#efa2cc" stroke-width="1.7"/>
<polyline points="1117.2,489.2 1121.0,491.4 1124.4,494.2" fill="none" stroke="#efa2cc" stroke-width="1.7"/>
<polyline points="1117.2,489.2 1118.0,486.1 1120.2,483.5 1121.1,480.5 1122.5,477.6 1122.1,474.0 1123.9,471.3 1125.3,468.5 1126.2,465.4" fill="none" stroke="#efa2cc" stroke-width="1.7"/>
<polyline points="1126.2,465.4 1129.3,464.9 1132.2,463.6 1135.1,462.5 1137.7,460.6 1141.2,461.3 1143.9,459.3 1146.9,458.6" fill="none" stroke="#efa2cc" stroke-width="1.7"/>
<polyline points="1146.9,458.6 1148.4,461.3 1149.1,464.3 1151.0,466.8 1152.2,469.6 1154.0,472.1 1153.9,475.6 1155.9,478.0 1156.4,481.1 1158.1,483.7 1159.9,486.3 1161.6,488.9 1162.3,491.9" fill="none" stroke="#efa2cc" stroke-width="1.7"/>
<polyline points="1232.9,524.8 1229.7,524.5 1226.7,525.9 1223.5,525.4 1220.3,525.2 1217.2,526.3 1214.0,526.5 1210.8,525.7 1207.7,525.7 1204.6,527.6 1201.4,526.9 1198.3,527.4" fill="none" stroke="#efa2cc" stroke-width="1.7"/>
<polyline points="1221.3,483.5 1218.9,485.5 1216.2,487.0 1213.5,488.5 1211.3,490.8 1208.5,492.1 1205.9,493.8 1203.6,495.9 1200.3,496.4 1197.8,498.2 1194.9,499.4 1192.6,501.5 1190.5,503.9 1187.3,504.7 1185.2,507.0 1182.2,508.1 1179.6,509.8 1177.3,511.9" fill="none" stroke="#efa2cc" stroke-width="1.7"/>
<polyline points="1210.1,467.7 1206.8,468.3 1203.6,469.3 1200.2,468.9 1196.8,469.2 1193.7,470.5 1190.4,471.1 1187.2,472.1 1183.9,472.6" fill="none" stroke="#efa2cc" stroke-width="1.7"/>
<polyline points="1183.9,472.6 1182.1,475.2 1181.7,478.4 1180.1,481.1 1178.5,483.8 1177.8,486.9 1175.7,489.3 1174.3,492.1 1172.7,494.8 1171.4,497.6" fill="none" stroke="#efa2cc" stroke-width="1.7"/>
<polyline points="1117.2,489.2 1114.2,490.5 1110.6,489.7 1107.5,490.8 1104.3,491.6 1101.1,492.1 1098.1,493.7" fill="none" stroke="#efa2cc" stroke-width="1.7"/>
<polyline points="1126.2,465.4 1124.1,463.0 1121.4,461.2 1120.2,458.1 1117.8,455.9 1115.8,453.5 1113.1,451.7 1111.4,448.9" fill="none" stroke="#efa2cc" stroke-width="1.7"/>
<polyline points="1098.1,493.7 1097.1,490.7 1095.3,488.1 1093.8,485.3 1093.1,482.3 1091.6,479.5 1090.3,476.6 1089.5,473.6 1089.0,470.4 1088.3,467.3 1087.1,464.4 1086.2,461.4 1084.1,458.9" fill="none" stroke="#efa2cc" stroke-width="1.7"/>
<polyline points="1111.4,448.9 1108.7,450.8 1105.2,450.7 1102.5,452.8 1099.2,453.1 1096.3,454.7 1093.0,455.1 1090.2,456.8 1086.9,457.2 1084.1,458.9" fill="none" stroke="#efa2cc" stroke-width="1.7"/>
<polyline points="584.2,541.7 581.0,541.1 577.8,542.3 574.6,540.4 571.4,541.6 568.2,540.8 564.9,541.1 561.7,540.8 558.5,541.1 555.3,541.2 552.1,540.7" fill="none" stroke="#efa2cc" stroke-width="1.7"/>
<polyline points="584.7,541.5 585.3,538.4 585.0,535.3 584.7,532.2 585.1,529.0 584.3,525.9 583.9,522.9 583.6,519.8 583.9,516.6 584.4,513.5 583.7,510.4 583.8,507.3 583.8,504.2 582.9,501.1" fill="none" stroke="#efa2cc" stroke-width="1.7"/>
<polyline points="552.1,540.7 552.2,537.5 552.1,534.4 550.7,531.4 550.0,528.4 551.0,525.1 549.4,522.1 548.6,519.1 548.7,515.9 548.7,512.8 547.4,509.8 548.7,506.5 548.4,503.4 546.8,500.4 546.7,497.3" fill="none" stroke="#efa2cc" stroke-width="1.7"/>
<polyline points="546.7,497.3 548.6,494.9" fill="none" stroke="#efa2cc" stroke-width="1.7"/>
<polyline points="548.6,494.9 551.6,493.2 554.8,492.4 558.2,492.5 561.3,491.6 564.6,491.4 567.6,489.8 570.9,489.3" fill="none" stroke="#efa2cc" stroke-width="1.7"/>
<polyline points="582.9,501.1 580.6,498.7 578.1,496.4 575.6,494.1 572.8,492.2 570.9,489.3" fill="none" stroke="#efa2cc" stroke-width="1.7"/>
<polyline points="529.6,557.8 531.6,555.2 535.1,554.7 536.7,551.6 539.2,549.6 542.4,548.6 544.8,546.7 547.4,544.9 549.0,541.8 552.1,540.7" fill="none" stroke="#efa2cc" stroke-width="1.7"/>
<polyline points="575.6,592.2 576.9,589.4 576.3,586.2 577.4,583.3 576.8,580.2 579.1,577.5 579.2,574.5 579.5,571.5 579.4,568.4 580.5,565.5 580.9,562.5 582.1,559.7 581.0,556.4 583.1,553.7 583.5,550.8 582.7,547.6 583.1,544.6 584.2,541.7" fill="none" stroke="#efa2cc" stroke-width="1.7"/>
<polyline points="632.0,597.1 630.4,594.4 630.6,591.2 628.8,588.5 627.7,585.7 628.1,582.4 626.8,579.6" fill="none" stroke="#efa2cc" stroke-width="1.7"/>
<polyline points="626.8,579.6 625.6,576.7 622.6,575.2 621.1,572.5 619.3,570.1 616.2,568.7 614.6,566.1 613.0,563.5 610.9,561.3 608.5,559.3 607.0,556.7 605.5,553.9 603.2,551.9 601.1,549.7 599.9,546.8 596.6,545.6 595.3,542.7" fill="none" stroke="#efa2cc" stroke-width="1.7"/>
<polyline points="595.3,542.7 591.7,542.5 588.3,541.1 584.7,541.5" fill="none" stroke="#efa2cc" stroke-width="1.7"/>
<polyline points="508.6,503.3 511.7,502.0 514.8,501.6 518.1,501.7 521.4,502.1 524.5,500.9 527.6,499.8 530.8,499.3 534.0,499.2 537.3,499.6 540.3,498.2 543.6,498.5 546.7,497.3" fill="none" stroke="#efa2cc" stroke-width="1.7"/>
<polyline points="534.0,459.4 534.6,462.6 537.2,465.0 537.2,468.5 538.8,471.2 539.5,474.4 542.0,476.8 541.9,480.4 544.0,483.0 545.3,485.9 545.5,489.2 547.5,491.9 548.6,494.9" fill="none" stroke="#efa2cc" stroke-width="1.7"/>
<polyline points="573.9,482.2 573.3,479.1 571.6,476.4 571.0,473.3 570.6,470.1 569.1,467.3 567.1,464.7 566.3,461.6 565.0,458.8 564.1,455.8 564.5,452.3 562.3,449.8 561.7,446.7" fill="none" stroke="#efa2cc" stroke-width="1.7"/>
<polyline points="573.9,482.2 571.6,485.4 570.9,489.3" fill="none" stroke="#efa2cc" stroke-width="1.7"/>
<polyline points="703.6,561.8 700.9,563.5 697.7,563.9 694.7,564.7 692.2,567.0 688.9,567.0 686.1,568.5 682.9,568.9 680.0,570.1 677.5,572.1 674.3,572.7 671.4,573.9 668.6,575.2" fill="none" stroke="#efa2cc" stroke-width="1.7"/>
<polyline points="703.6,561.8 704.9,564.8 706.2,567.9 706.5,571.3 708.2,574.2 709.0,577.4 710.5,580.3 710.9,583.7 712.5,586.6 712.8,590.0 714.8,592.8" fill="none" stroke="#efa2cc" stroke-width="1.7"/>
<polyline points="714.8,592.8 713.6,596.0 711.2,598.4 709.6,601.3 707.7,604.0 706.0,606.9 705.1,610.2 703.3,613.0 700.8,615.4" fill="none" stroke="#efa2cc" stroke-width="1.7"/>
<polyline points="700.8,615.4 697.6,615.7 695.0,613.4 691.9,613.2 688.8,613.4 685.9,612.2 682.9,611.8 680.0,610.9 677.1,610.0 673.8,610.6 670.9,609.7 667.8,609.7 664.8,609.3 661.9,608.2 659.1,606.6 656.0,606.8" fill="none" stroke="#efa2cc" stroke-width="1.7"/>
<polyline points="668.6,575.2 667.1,578.1 664.5,580.0 662.8,582.7 660.7,585.1 659.4,588.1 657.1,590.3 654.6,592.3 652.6,594.8 651.4,598.0 648.8,599.9" fill="none" stroke="#efa2cc" stroke-width="1.7"/>
<polyline points="656.0,606.8 653.9,604.2 650.6,602.8 648.8,599.9" fill="none" stroke="#efa2cc" stroke-width="1.7"/>
<polyline points="706.2,624.2 704.7,621.1 703.4,617.8 700.8,615.4" fill="none" stroke="#efa2cc" stroke-width="1.7"/>
<polyline points="752.9,593.0 749.7,593.7 746.6,592.2 743.4,592.5 740.2,593.0 737.0,592.1 733.9,592.0 730.7,592.8 727.5,592.3 724.3,593.5 721.2,592.2 718.0,592.6 714.8,592.8" fill="none" stroke="#efa2cc" stroke-width="1.7"/>
<polyline points="744.6,621.7 745.8,618.6 746.1,615.2 746.7,612.0 748.6,609.0 748.7,605.6 749.5,602.4 750.7,599.3 751.0,595.9 752.9,593.0" fill="none" stroke="#efa2cc" stroke-width="1.7"/>
<polyline points="663.6,655.0 663.0,652.0 662.3,649.0 663.1,645.8 661.4,643.0 660.6,640.0 661.7,636.8 660.6,633.9 660.5,630.8 658.6,628.0 659.5,624.8 659.0,621.8 657.5,618.9 657.6,615.8 657.6,612.7 655.8,609.9 656.0,606.8" fill="none" stroke="#efa2cc" stroke-width="1.7"/>
<polyline points="632.8,597.9 636.0,598.4 639.1,599.6 642.4,599.4 645.5,600.4 648.8,599.9" fill="none" stroke="#efa2cc" stroke-width="1.7"/>
<polyline points="761.7,297.0 763.5,300.1 766.8,302.0 768.2,305.5 770.8,307.9 773.3,310.5" fill="none" stroke="#efa2cc" stroke-width="1.7"/>
<polyline points="737.3,335.7 740.4,336.1 743.0,338.0 746.0,338.8 749.1,339.1 752.1,340.0 754.8,341.8 757.8,342.4 761.2,341.9 763.9,343.5" fill="none" stroke="#efa2cc" stroke-width="1.7"/>
<polyline points="763.9,343.5 764.3,340.4 765.8,337.6 765.9,334.3 767.5,331.5 768.3,328.5 768.1,325.2 769.2,322.3 771.6,319.7 771.7,316.5 771.7,313.3 773.3,310.5" fill="none" stroke="#efa2cc" stroke-width="1.7"/>
<polyline points="800.3,284.5 799.7,287.6 798.9,290.6 796.7,293.1 796.6,296.4 795.2,299.2 794.0,302.1 793.5,305.2 791.5,307.8" fill="none" stroke="#efa2cc" stroke-width="1.7"/>
<polyline points="773.3,310.5 776.2,309.1 779.4,309.5 782.5,309.8 785.3,308.1 788.5,308.3 791.5,307.8" fill="none" stroke="#efa2cc" stroke-width="1.7"/>
<polyline points="833.0,303.1 830.5,305.2 828.7,307.9 826.7,310.5 823.7,312.2 821.8,314.8 820.5,318.0 817.7,319.8 815.4,322.1" fill="none" stroke="#efa2cc" stroke-width="1.7"/>
<polyline points="791.5,307.8 794.2,309.3 796.4,311.6 799.5,312.5 802.3,313.8 805.1,315.2 807.9,316.6 810.5,318.2 812.5,320.9 815.4,322.1" fill="none" stroke="#efa2cc" stroke-width="1.7"/>
<polyline points="897.2,347.0 894.0,348.5 890.9,350.1" fill="none" stroke="#efa2cc" stroke-width="1.7"/>
<polyline points="866.3,297.9 867.2,300.9 866.9,304.1 867.0,307.2 867.0,310.3 868.7,313.3 867.7,316.5 868.5,319.5 869.2,322.6 869.1,325.7" fill="none" stroke="#efa2cc" stroke-width="1.7"/>
<polyline points="869.1,325.7 871.6,327.9 873.3,330.7 875.9,332.8 877.3,336.0 880.2,337.8 881.8,340.7 884.3,342.9 885.9,345.8 888.0,348.3 890.9,350.1" fill="none" stroke="#efa2cc" stroke-width="1.7"/>
<polyline points="806.1,465.8 803.6,468.5 799.9,469.8 797.8,472.9" fill="none" stroke="#efa2cc" stroke-width="1.7"/>
<polyline points="806.1,465.8 804.8,462.9 804.5,459.9 803.9,457.0 804.1,453.9 803.0,451.0 804.2,447.8 803.8,444.8 802.8,441.9 802.8,438.8 802.3,435.8 802.0,432.8 799.9,430.1 799.8,427.0 799.8,424.0" fill="none" stroke="#efa2cc" stroke-width="1.7"/>
<polyline points="764.0,456.4 765.2,453.6 766.7,451.0 768.8,448.7 771.1,446.7 772.4,443.9 774.2,441.5 776.4,439.4 778.3,437.0 780.4,434.9 781.2,431.8 783.4,429.7 785.3,427.3 787.5,425.2 788.5,422.2" fill="none" stroke="#efa2cc" stroke-width="1.7"/>
<polyline points="799.8,424.0 796.2,422.4 792.2,423.3 788.5,422.2" fill="none" stroke="#efa2cc" stroke-width="1.7"/>
<polyline points="764.0,456.4 766.6,458.2 769.3,459.9 771.8,461.8 774.0,464.0 775.6,467.1 778.3,468.7 780.9,470.6 783.1,472.8" fill="none" stroke="#efa2cc" stroke-width="1.7"/>
<polyline points="783.1,472.8 786.8,473.7 790.4,473.3 794.1,472.1 797.8,472.9" fill="none" stroke="#efa2cc" stroke-width="1.7"/>
<polyline points="819.2,415.6 816.1,416.1 814.0,418.7 810.8,419.1 808.4,421.1 805.0,420.8 802.3,422.2 799.8,424.0" fill="none" stroke="#efa2cc" stroke-width="1.7"/>
<polyline points="819.2,415.6 822.3,416.6 824.4,419.0 826.5,421.4 830.1,421.6 832.4,423.7 834.7,425.8 837.3,427.5 839.8,429.4 842.7,430.6 845.2,432.4 848.2,433.5 850.3,436.0" fill="none" stroke="#efa2cc" stroke-width="1.7"/>
<polyline points="806.1,465.8 809.7,466.3 812.9,464.1 816.4,464.3 819.7,462.9 823.3,463.2" fill="none" stroke="#efa2cc" stroke-width="1.7"/>
<polyline points="823.3,463.2 826.0,461.3 827.6,458.4 829.6,456.0 832.4,454.3 835.2,452.5 836.9,449.7 839.7,448.0 841.8,445.6 844.1,443.3 846.1,440.8 848.6,438.8 850.3,436.0" fill="none" stroke="#efa2cc" stroke-width="1.7"/>
<polyline points="823.3,463.2 825.2,465.6 826.0,468.7 829.3,470.2 829.6,473.6 832.3,475.5 834.4,477.8 835.8,480.5 837.2,483.2 838.7,485.9 840.6,488.3" fill="none" stroke="#efa2cc" stroke-width="1.7"/>
<polyline points="840.6,488.3 840.2,492.0 837.1,494.8 836.1,498.3 835.5,502.0" fill="none" stroke="#efa2cc" stroke-width="1.7"/>
<polyline points="797.8,472.9 799.7,475.6 800.0,478.9 802.4,481.4 802.9,484.6 803.9,487.7 805.7,490.4 806.0,493.7 808.4,496.2 809.6,499.1 810.5,502.2 811.4,505.3 812.9,508.2 813.9,511.2" fill="none" stroke="#efa2cc" stroke-width="1.7"/>
<polyline points="835.5,502.0 832.5,503.6 829.1,504.1 826.2,505.8 823.3,507.7 819.9,508.2 816.6,509.0 813.9,511.2" fill="none" stroke="#efa2cc" stroke-width="1.7"/>
<polyline points="777.0,516.4 774.7,513.8 774.2,510.2 770.9,508.1 770.4,504.5 768.3,501.8" fill="none" stroke="#efa2cc" stroke-width="1.7"/>
<polyline points="777.0,516.4 780.1,516.5 783.1,516.2 786.2,516.1 789.3,516.9 792.3,517.4 795.4,516.5 798.4,517.8 801.6,516.6 804.5,518.2 807.6,518.6 810.7,517.9" fill="none" stroke="#efa2cc" stroke-width="1.7"/>
<polyline points="768.3,501.8 770.0,499.0 771.2,496.0 773.5,493.5 774.6,490.4 776.5,487.7 777.6,484.6 778.0,481.2 779.9,478.5 782.0,475.9 783.1,472.8" fill="none" stroke="#efa2cc" stroke-width="1.7"/>
<polyline points="810.7,517.9 812.7,514.7 813.9,511.2" fill="none" stroke="#efa2cc" stroke-width="1.7"/>
<polyline points="795.1,602.8 792.5,600.9 791.5,597.9" fill="none" stroke="#efa2cc" stroke-width="1.7"/>
<polyline points="791.5,597.9 793.1,595.2 794.4,592.3 796.3,589.8 799.3,588.1 801.1,585.5 802.5,582.7 804.6,580.4 806.6,578.0 807.2,574.5 809.6,572.4 811.5,569.9 813.3,567.4 815.5,565.1 817.6,562.7 818.8,559.8 820.8,557.4 823.3,555.3 823.9,551.9 826.2,549.7" fill="none" stroke="#efa2cc" stroke-width="1.7"/>
<polyline points="853.1,599.4 852.1,596.5 850.0,594.2 849.0,591.3 848.5,588.2 846.4,585.9 845.6,582.9 843.0,580.8 842.3,577.8 841.2,575.0 839.5,572.4 838.3,569.7 837.8,566.5 835.6,564.2 834.5,561.4 833.0,558.8 832.5,555.7 831.2,552.9 829.1,550.6" fill="none" stroke="#efa2cc" stroke-width="1.7"/>
<polyline points="826.2,549.7 829.1,550.6" fill="none" stroke="#efa2cc" stroke-width="1.7"/>
<polyline points="810.7,517.9 811.4,521.0 812.2,524.0 813.5,527.0 813.5,530.2 813.3,533.5 814.7,536.4 815.5,539.5" fill="none" stroke="#efa2cc" stroke-width="1.7"/>
<polyline points="815.5,539.5 812.8,541.4 809.9,542.8 806.4,543.0 803.8,545.2 800.7,546.2 797.5,547.0 794.6,548.3 792.0,550.6 788.5,550.7 785.9,552.8" fill="none" stroke="#efa2cc" stroke-width="1.7"/>
<polyline points="777.0,516.4 775.4,519.3 773.8,522.3 772.8,525.6 770.9,528.4 770.0,531.7 767.5,534.3 766.4,537.5 764.9,540.5" fill="none" stroke="#efa2cc" stroke-width="1.7"/>
<polyline points="764.9,540.5 767.1,542.7 769.6,544.4 772.9,544.8 775.8,545.9 778.1,548.0 780.4,550.2 783.7,550.6 785.9,552.8" fill="none" stroke="#efa2cc" stroke-width="1.7"/>
<polyline points="791.5,597.9 788.4,595.6 785.0,593.8" fill="none" stroke="#efa2cc" stroke-width="1.7"/>
<polyline points="815.5,539.5 818.4,541.8 821.2,544.2 823.6,547.1 826.2,549.7" fill="none" stroke="#efa2cc" stroke-width="1.7"/>
<polyline points="785.9,552.8 786.2,556.0 785.4,559.1 784.9,562.2 785.7,565.4 785.2,568.6 785.5,571.7 786.2,574.9 784.6,578.0 784.7,581.2 784.5,584.3 784.2,587.5 785.9,590.7 785.0,593.8" fill="none" stroke="#efa2cc" stroke-width="1.7"/>
<polyline points="752.9,593.0 756.0,590.5" fill="none" stroke="#efa2cc" stroke-width="1.7"/>
<polyline points="756.0,590.5 759.3,590.2 762.4,591.4 765.7,591.7 768.8,592.7 772.1,592.8 775.4,591.8 778.5,593.9 781.8,592.9 785.0,593.8" fill="none" stroke="#efa2cc" stroke-width="1.7"/>
<polyline points="898.3,570.4 897.0,567.5 895.0,565.1 894.0,562.1 891.1,560.2 890.0,557.2" fill="none" stroke="#efa2cc" stroke-width="1.7"/>
<polyline points="853.1,599.4 855.1,597.0 856.5,594.0 858.1,591.3 860.4,589.1 862.7,586.8 863.9,583.8 865.5,581.0 868.0,578.9 869.4,576.0 871.4,573.5 872.3,570.3 875.0,568.3 875.8,565.0 878.2,562.8 880.3,560.4 881.5,557.4" fill="none" stroke="#efa2cc" stroke-width="1.7"/>
<polyline points="890.0,557.2 885.7,556.7 881.5,557.4" fill="none" stroke="#efa2cc" stroke-width="1.7"/>
<polyline points="829.1,550.6 832.1,549.6 835.0,548.3 837.8,546.8 840.2,544.5 843.4,544.0 846.3,542.8 849.2,541.5 851.9,539.6 855.0,538.9 857.9,537.7 860.7,536.2" fill="none" stroke="#efa2cc" stroke-width="1.7"/>
<polyline points="881.5,557.4 879.3,554.9 877.3,552.3 874.3,550.6 872.5,547.8 869.9,545.7 868.0,542.9 865.9,540.4 863.3,538.2 860.7,536.2" fill="none" stroke="#efa2cc" stroke-width="1.7"/>
<polyline points="835.5,502.0 838.4,503.2 841.1,504.8 843.1,507.3 845.5,509.3 848.8,509.9 850.9,512.4 853.8,513.7 856.5,515.2 858.6,517.5 860.7,520.0 863.6,521.2" fill="none" stroke="#efa2cc" stroke-width="1.7"/>
<polyline points="863.6,521.2 862.6,524.1 861.9,527.1 862.5,530.3 860.8,533.1 860.7,536.2" fill="none" stroke="#efa2cc" stroke-width="1.7"/>
<polyline points="1098.1,493.7 1096.5,497.1 1093.1,499.2 1091.2,502.3 1088.6,505.0" fill="none" stroke="#efa2cc" stroke-width="1.7"/>
<polyline points="1174.1,418.2 1170.6,417.7 1167.1,418.1 1163.8,419.6 1160.3,420.4 1156.8,419.9" fill="none" stroke="#efa2cc" stroke-width="1.7"/>
<polyline points="1174.1,418.2 1174.9,421.3 1177.0,423.9 1177.6,427.1 1177.7,430.5 1178.6,433.5 1180.0,436.4 1180.6,439.6 1182.3,442.4" fill="none" stroke="#efa2cc" stroke-width="1.7"/>
<polyline points="1156.8,419.9 1154.4,422.1 1153.2,425.0 1151.7,427.8 1149.5,430.1 1148.2,433.0 1146.5,435.6" fill="none" stroke="#efa2cc" stroke-width="1.7"/>
<polyline points="1182.3,442.4 1179.4,444.8 1176.8,447.5 1175.0,450.8" fill="none" stroke="#efa2cc" stroke-width="1.7"/>
<polyline points="1175.0,450.8 1171.6,450.9 1168.2,451.6 1164.8,451.3 1161.4,451.9 1158.0,452.0 1154.6,452.5 1151.2,451.8" fill="none" stroke="#efa2cc" stroke-width="1.7"/>
<polyline points="1151.2,451.8 1150.2,448.6 1150.1,445.1 1148.3,442.1 1147.4,438.8 1146.5,435.6" fill="none" stroke="#efa2cc" stroke-width="1.7"/>
<polyline points="1141.0,385.0 1139.6,390.8" fill="none" stroke="#efa2cc" stroke-width="1.7"/>
<polyline points="1183.2,406.7 1181.0,409.6 1179.4,413.0 1176.9,415.7 1174.1,418.2" fill="none" stroke="#efa2cc" stroke-width="1.7"/>
<polyline points="1139.6,390.8 1141.5,393.2 1142.7,396.1 1144.0,398.9 1146.2,401.2 1147.8,403.8 1148.3,407.1 1150.0,409.6 1152.0,412.0 1153.4,414.7 1155.4,417.2 1156.8,419.9" fill="none" stroke="#efa2cc" stroke-width="1.7"/>
<polyline points="1212.7,440.3 1209.7,440.4 1206.6,440.2 1203.6,441.1 1200.6,441.4 1197.5,441.8 1194.4,440.7 1191.4,441.9 1188.4,442.9 1185.4,442.9 1182.3,442.4" fill="none" stroke="#efa2cc" stroke-width="1.7"/>
<polyline points="1139.6,390.8 1137.0,392.7 1135.7,396.0 1133.1,398.0 1130.8,400.3 1128.8,402.8 1126.4,405.0 1124.7,407.8 1122.3,409.9 1119.1,411.4 1116.9,413.7 1115.4,416.7 1113.1,419.0" fill="none" stroke="#efa2cc" stroke-width="1.7"/>
<polyline points="1113.1,419.0 1115.3,423.5" fill="none" stroke="#efa2cc" stroke-width="1.7"/>
<polyline points="1115.3,423.5 1118.1,424.7 1121.0,425.6 1124.0,426.2 1126.4,428.4 1129.6,428.7 1132.2,430.5 1135.4,430.5 1137.8,432.8 1141.1,432.7 1143.7,434.5 1146.5,435.6" fill="none" stroke="#efa2cc" stroke-width="1.7"/>
<polyline points="1183.9,472.6 1182.5,469.6 1180.6,466.7 1181.0,462.9 1178.2,460.4 1178.2,456.8 1175.9,454.1 1175.0,450.8" fill="none" stroke="#efa2cc" stroke-width="1.7"/>
<polyline points="1146.9,458.6 1148.6,454.9 1151.2,451.8" fill="none" stroke="#efa2cc" stroke-width="1.7"/>
<polyline points="1111.4,448.9 1111.0,445.6 1113.0,442.7 1113.1,439.4 1113.8,436.3 1113.9,433.0 1114.2,429.8 1115.6,426.8 1115.3,423.5" fill="none" stroke="#efa2cc" stroke-width="1.7"/>
<polyline points="1072.1,505.0 1069.9,502.5 1067.6,500.1 1065.3,497.8 1062.7,495.7" fill="none" stroke="#efa2cc" stroke-width="1.7"/>
<polyline points="1062.7,495.7 1061.6,492.7 1061.6,489.5 1061.3,486.4 1060.3,483.4 1060.8,480.2 1060.9,477.1 1060.6,473.9 1060.2,470.8 1059.4,467.8" fill="none" stroke="#efa2cc" stroke-width="1.7"/>
<polyline points="1084.1,458.9 1081.8,456.7 1078.8,455.8 1076.0,454.6" fill="none" stroke="#efa2cc" stroke-width="1.7"/>
<polyline points="1059.4,467.8 1061.9,466.1 1064.6,464.6 1066.1,461.6 1069.3,460.7 1071.3,458.4 1073.7,456.6 1076.0,454.6" fill="none" stroke="#efa2cc" stroke-width="1.7"/>
<polyline points="1113.1,419.0 1110.2,418.1 1107.2,417.2 1104.7,415.0 1101.7,414.2 1098.3,414.5 1095.7,412.6 1093.2,410.6 1090.3,409.6 1087.1,409.4" fill="none" stroke="#efa2cc" stroke-width="1.7"/>
<polyline points="1076.0,454.6 1075.3,451.6 1073.9,448.8 1072.8,445.9 1073.2,442.6 1072.6,439.6 1072.0,436.6 1070.4,433.8 1069.3,430.9 1068.4,428.0 1068.0,424.9 1067.4,421.9" fill="none" stroke="#efa2cc" stroke-width="1.7"/>
<polyline points="1087.1,409.4 1084.5,411.1 1081.4,411.7 1079.5,414.7 1076.7,415.9 1073.3,416.0 1071.5,419.0 1068.4,419.8" fill="none" stroke="#efa2cc" stroke-width="1.7"/>
<polyline points="626.8,579.6 627.6,576.7 629.0,573.9 630.6,571.3 630.8,568.1 631.7,565.2 632.3,562.2 634.0,559.6 634.6,556.5 635.6,553.7 637.2,551.0 637.3,547.8 638.0,544.9 639.1,542.0 640.9,539.4 640.9,536.2 641.7,533.3 643.6,530.7" fill="none" stroke="#efa2cc" stroke-width="1.7"/>
<polyline points="595.3,542.7 597.5,540.4 600.8,539.4 602.4,536.4 605.0,534.5 607.1,532.1 610.6,531.4 612.8,529.1 615.2,527.0 617.8,525.2 619.5,522.3 622.3,520.7 625.1,519.1" fill="none" stroke="#efa2cc" stroke-width="1.7"/>
<polyline points="625.1,519.1 627.2,521.6 630.4,522.5 633.2,523.7 635.9,525.4 638.0,528.0 641.1,528.8 643.6,530.7" fill="none" stroke="#efa2cc" stroke-width="1.7"/>
<polyline points="582.9,501.1 586.1,500.7 589.2,499.9 592.5,500.6 595.8,501.0 598.9,499.9 602.2,500.6 605.3,500.0 608.4,498.4 611.7,498.4 615.0,499.5 618.1,498.5" fill="none" stroke="#efa2cc" stroke-width="1.7"/>
<polyline points="618.1,498.5 622.3,501.8" fill="none" stroke="#efa2cc" stroke-width="1.7"/>
<polyline points="625.1,519.1 624.8,515.6 624.7,512.1 622.4,508.9 622.8,505.3 622.3,501.8" fill="none" stroke="#efa2cc" stroke-width="1.7"/>
<polyline points="668.6,575.2 667.7,572.2 667.4,569.1 666.3,566.2 666.8,563.0 665.0,560.2 664.6,557.1 665.5,553.8 664.5,550.9 664.1,547.8 663.3,544.8 662.8,541.8 661.1,539.0 662.2,535.6 661.0,532.7 660.3,529.7" fill="none" stroke="#efa2cc" stroke-width="1.7"/>
<polyline points="643.6,530.7 647.0,530.9 650.2,529.6 653.6,530.0 656.9,529.5 660.3,529.7" fill="none" stroke="#efa2cc" stroke-width="1.7"/>
<polyline points="704.9,559.4 703.8,556.4 701.7,554.1 700.5,551.2 698.2,549.1 696.4,546.5 694.6,544.0 692.2,541.9 690.5,539.3 689.8,536.2 688.4,533.4 685.7,531.4 684.1,528.8 682.7,526.0 681.1,523.4" fill="none" stroke="#efa2cc" stroke-width="1.7"/>
<polyline points="681.1,523.4 676.8,522.2 672.5,521.0" fill="none" stroke="#efa2cc" stroke-width="1.7"/>
<polyline points="672.5,521.0 669.2,522.8 666.0,524.8 663.0,527.1 660.3,529.7" fill="none" stroke="#efa2cc" stroke-width="1.7"/>
<polyline points="764.3,344.4 763.1,347.5 760.9,350.0 759.7,353.1 758.5,356.1 756.9,359.0 755.7,362.0 754.1,364.9 751.5,367.2 751.7,371.0 749.6,373.6 747.8,376.3" fill="none" stroke="#efa2cc" stroke-width="1.7"/>
<polyline points="712.4,362.2 715.0,364.9 716.8,368.0 718.5,371.2 720.4,374.3" fill="none" stroke="#efa2cc" stroke-width="1.7"/>
<polyline points="747.8,376.3 744.7,376.8 741.6,376.7 738.7,375.1 735.7,374.8 732.6,374.8 729.5,375.3 726.5,375.2 723.4,375.2 720.4,374.3" fill="none" stroke="#efa2cc" stroke-width="1.7"/>
<polyline points="769.7,401.6 771.3,404.4 773.2,406.8 775.2,409.1 777.4,411.3 780.2,413.0 782.2,415.4 784.7,417.3 786.5,419.8 788.5,422.2" fill="none" stroke="#efa2cc" stroke-width="1.7"/>
<polyline points="769.7,401.6 765.6,401.5 761.5,400.8" fill="none" stroke="#efa2cc" stroke-width="1.7"/>
<polyline points="764.0,456.4 760.9,456.7 757.9,456.3 755.0,454.9 752.0,454.2 748.9,454.3 745.8,454.5 742.7,454.7 739.8,452.7 736.6,453.8 733.7,452.6" fill="none" stroke="#efa2cc" stroke-width="1.7"/>
<polyline points="761.5,400.8 758.9,402.5 756.9,405.0 755.1,407.6 752.2,409.1 750.3,411.6 747.6,413.2 744.7,414.6 743.0,417.4 741.3,420.2 738.8,422.1 736.1,423.7" fill="none" stroke="#efa2cc" stroke-width="1.7"/>
<polyline points="733.7,452.6 734.5,449.4 734.8,446.2 733.8,442.9 735.5,439.8 735.7,436.6 736.0,433.4 736.0,430.2 736.8,427.0 736.1,423.7" fill="none" stroke="#efa2cc" stroke-width="1.7"/>
<polyline points="658.3,428.6 657.6,425.5 658.0,422.5 659.9,419.6 658.6,416.4 658.5,413.4 658.8,410.4 659.8,407.4 659.8,404.3 660.6,401.4 660.4,398.3" fill="none" stroke="#efa2cc" stroke-width="1.7"/>
<polyline points="658.3,428.6 661.1,430.1 664.4,430.1 667.1,431.7 670.4,431.8 673.3,432.8 676.0,434.7 679.3,434.5 682.0,436.5 685.4,436.0 688.2,437.5" fill="none" stroke="#efa2cc" stroke-width="1.7"/>
<polyline points="673.7,393.3 676.1,395.5 679.6,395.9 681.9,398.1 684.5,400.0 687.3,401.5 689.2,404.4 692.4,405.3" fill="none" stroke="#efa2cc" stroke-width="1.7"/>
<polyline points="688.2,437.5 688.9,434.3 689.8,431.2 689.0,427.8 690.2,424.7 690.3,421.4 690.8,418.2 690.4,414.9 691.7,411.8 691.8,408.5 692.4,405.3" fill="none" stroke="#efa2cc" stroke-width="1.7"/>
<polyline points="761.5,400.8 759.1,398.5 758.7,395.2 756.6,392.8 755.8,389.7 753.8,387.2 751.5,385.0 751.5,381.4 749.4,379.0 747.8,376.3" fill="none" stroke="#efa2cc" stroke-width="1.7"/>
<polyline points="720.4,374.3 720.1,377.5 717.8,380.0 716.9,383.0 716.3,386.1 716.0,389.3 714.9,392.3 712.8,394.9 712.5,398.1 711.7,401.1" fill="none" stroke="#efa2cc" stroke-width="1.7"/>
<polyline points="736.1,423.7 733.9,421.6 731.3,419.9 729.1,417.9 726.8,416.0 725.0,413.4 723.2,410.9 719.9,410.0 718.7,406.9 716.2,405.1 714.6,402.5 711.7,401.1" fill="none" stroke="#efa2cc" stroke-width="1.7"/>
<polyline points="692.4,405.3 695.6,404.4 698.9,404.0 702.1,403.6 705.2,402.4 708.5,401.9 711.7,401.1" fill="none" stroke="#efa2cc" stroke-width="1.7"/>
<polyline points="585.9,409.1 586.0,412.1 586.7,415.1 586.8,418.1" fill="none" stroke="#efa2cc" stroke-width="1.7"/>
<polyline points="564.7,441.4 567.8,439.6 571.2,438.5 574.1,436.3 577.7,435.6" fill="none" stroke="#efa2cc" stroke-width="1.7"/>
<polyline points="586.8,418.1 585.5,421.1 584.1,424.1 582.3,426.9 580.9,429.9 580.0,433.1 577.7,435.6" fill="none" stroke="#efa2cc" stroke-width="1.7"/>
<polyline points="573.9,482.2 576.8,480.9 578.7,477.9 581.6,476.6 584.2,474.7 587.4,473.8 590.2,472.2 592.9,470.5 595.1,468.0 597.1,465.4 599.9,463.8 602.9,462.6" fill="none" stroke="#efa2cc" stroke-width="1.7"/>
<polyline points="577.7,435.6 579.8,437.9 582.4,439.6 583.6,442.7 586.7,444.0 588.0,447.0 590.5,448.9 592.0,451.8 594.2,453.9 596.7,455.7 598.6,458.2 600.7,460.4 602.9,462.6" fill="none" stroke="#efa2cc" stroke-width="1.7"/>
<polyline points="648.7,461.7 645.7,462.6 642.5,461.7 639.6,462.9 636.4,461.8 633.3,462.0 630.3,463.1 627.3,463.0 624.2,463.3 621.1,463.5 618.0,463.3 615.1,465.0 612.0,465.3 608.9,464.6" fill="none" stroke="#efa2cc" stroke-width="1.7"/>
<polyline points="648.7,461.7 647.8,458.5 647.2,455.3 648.0,451.9 646.5,448.7 646.6,445.4 645.7,442.2 645.8,438.9" fill="none" stroke="#efa2cc" stroke-width="1.7"/>
<polyline points="645.8,438.9 642.8,437.8 640.3,435.7 637.8,433.8 634.5,433.1 632.2,430.6 629.2,429.6 626.2,428.5" fill="none" stroke="#efa2cc" stroke-width="1.7"/>
<polyline points="606.9,462.9 607.6,459.9 609.5,457.3 610.6,454.4 611.4,451.5 613.1,448.8 613.9,445.8 615.1,443.0 616.7,440.3 616.9,437.1 618.9,434.6 619.3,431.4" fill="none" stroke="#efa2cc" stroke-width="1.7"/>
<polyline points="626.2,428.5 622.6,429.5 619.3,431.4" fill="none" stroke="#efa2cc" stroke-width="1.7"/>
<polyline points="658.3,428.6 656.2,431.2 653.4,432.9 650.5,434.4 648.5,437.1 645.8,438.9" fill="none" stroke="#efa2cc" stroke-width="1.7"/>
<polyline points="628.2,413.9 627.5,417.5 627.9,421.3 627.1,424.9 626.2,428.5" fill="none" stroke="#efa2cc" stroke-width="1.7"/>
<polyline points="618.1,498.5 617.3,495.4 615.9,492.5 615.0,489.4 614.3,486.3 614.4,483.0 613.2,480.0 612.2,476.9 611.8,473.8 611.4,470.6 610.5,467.5 608.9,464.6" fill="none" stroke="#efa2cc" stroke-width="1.7"/>
<polyline points="602.9,462.6 606.9,462.9" fill="none" stroke="#efa2cc" stroke-width="1.7"/>
<polyline points="586.8,418.1 590.1,418.5 593.1,419.7 595.6,421.8 598.3,423.6 601.5,424.2 604.2,426.1 607.7,426.0 610.6,427.3 613.5,428.8 616.6,429.5 619.3,431.4" fill="none" stroke="#efa2cc" stroke-width="1.7"/>
<polyline points="819.2,415.6 818.9,412.4 819.2,409.3 820.3,406.2 819.0,402.9 819.8,399.8 820.8,396.7 819.5,393.5 819.6,390.3 820.8,387.2 819.9,384.0 821.0,380.9" fill="none" stroke="#efa2cc" stroke-width="1.7"/>
<polyline points="769.7,401.6 772.4,399.8 774.7,397.7 776.2,394.8 778.6,392.8 781.1,390.8 782.1,387.5 784.9,385.8 786.3,382.8 789.8,381.8 791.8,379.4 793.7,376.8 796.0,374.7 797.7,372.0" fill="none" stroke="#efa2cc" stroke-width="1.7"/>
<polyline points="797.7,372.0 800.3,373.9 803.6,374.1 806.3,375.6 809.0,377.3 812.2,377.8 815.0,379.0 818.2,379.5 821.0,380.9" fill="none" stroke="#efa2cc" stroke-width="1.7"/>
<polyline points="764.3,344.4 767.0,346.1 770.1,346.8 773.0,348.0 775.5,350.1 778.2,351.7 781.3,352.6 784.3,353.5 787.4,354.3 789.9,356.4" fill="none" stroke="#efa2cc" stroke-width="1.7"/>
<polyline points="797.7,372.0 795.8,369.1 794.8,365.7 793.9,362.2 791.5,359.5 789.9,356.4" fill="none" stroke="#efa2cc" stroke-width="1.7"/>
<polyline points="815.4,322.1 815.8,325.9" fill="none" stroke="#efa2cc" stroke-width="1.7"/>
<polyline points="789.9,356.4 792.1,354.3 794.4,352.2 796.1,349.6 798.1,347.2 799.5,344.3 802.5,342.9 803.2,339.5 805.7,337.5 808.2,335.6 810.3,333.3 811.2,330.1 814.0,328.4 815.8,325.9" fill="none" stroke="#efa2cc" stroke-width="1.7"/>
<polyline points="869.1,325.7 866.6,327.6 863.7,329.0 861.7,331.6 858.6,332.7 855.6,333.9 853.2,335.9 851.3,338.7 847.9,339.4 845.9,342.0 843.3,343.9 840.1,344.8 837.8,347.0" fill="none" stroke="#efa2cc" stroke-width="1.7"/>
<polyline points="815.8,325.9 817.8,328.3 819.8,330.5 821.8,332.8 824.4,334.6 826.3,337.0 828.9,338.6 830.7,341.1 834.0,342.1 835.8,344.7 837.8,347.0" fill="none" stroke="#efa2cc" stroke-width="1.7"/>
<polyline points="728.3,547.7 726.9,545.0 725.1,542.6 724.6,539.5 724.2,536.4 721.5,534.3 720.5,531.5 719.6,528.6 717.4,526.3 716.3,523.5 715.2,520.7 713.9,518.0 713.8,514.7 711.7,512.4 710.8,509.5" fill="none" stroke="#efa2cc" stroke-width="1.7"/>
<polyline points="728.3,547.7 731.3,547.3 734.4,547.0 737.3,548.7 740.4,547.1 743.4,548.0" fill="none" stroke="#efa2cc" stroke-width="1.7"/>
<polyline points="743.9,547.5 742.8,544.4 743.1,541.2 743.0,538.1 742.9,534.9 743.1,531.8 742.9,528.6 743.4,525.5 743.8,522.3 743.8,519.2 742.2,516.1 743.2,512.9 742.3,509.8 743.6,506.6 742.8,503.4 742.5,500.3" fill="none" stroke="#efa2cc" stroke-width="1.7"/>
<polyline points="710.8,509.5 712.8,507.1 712.9,503.8 715.4,501.7 715.8,498.5 718.0,496.2 720.0,493.8 720.7,490.8 721.8,488.0 723.4,485.4" fill="none" stroke="#efa2cc" stroke-width="1.7"/>
<polyline points="723.4,485.4 726.2,486.8 727.9,489.4 730.6,491.0 733.3,492.4 735.8,494.1 738.3,495.9 740.2,498.3 742.5,500.3" fill="none" stroke="#efa2cc" stroke-width="1.7"/>
<polyline points="704.9,559.4 707.9,558.1 710.3,555.7 714.0,555.6 716.4,553.1 719.1,551.3 722.1,549.9 725.6,549.7 728.3,547.7" fill="none" stroke="#efa2cc" stroke-width="1.7"/>
<polyline points="681.1,523.4 683.8,521.5 687.1,520.7 690.4,520.0 693.4,518.6 695.9,516.4 699.3,515.9 701.5,512.9 704.5,511.6 708.0,511.2 710.8,509.5" fill="none" stroke="#efa2cc" stroke-width="1.7"/>
<polyline points="756.0,590.5 754.9,587.5 753.8,584.5 754.2,581.1 751.7,578.6 752.2,575.1 751.3,572.1 750.6,569.0 748.7,566.3 747.5,563.3 747.2,560.1 747.0,556.9 744.9,554.2 744.9,550.9 743.4,548.0" fill="none" stroke="#efa2cc" stroke-width="1.7"/>
<polyline points="764.9,540.5 761.8,541.1 759.0,542.9 755.6,542.6 753.2,545.4 749.9,545.6 746.6,545.7 743.9,547.5" fill="none" stroke="#efa2cc" stroke-width="1.7"/>
<polyline points="768.3,501.8 765.1,502.0 761.9,501.4 758.6,501.6 755.4,501.8 752.1,501.9 748.9,501.0 745.7,501.0 742.5,500.3" fill="none" stroke="#efa2cc" stroke-width="1.7"/>
<polyline points="872.1,513.9 875.2,514.4 877.8,516.2 880.9,516.6 883.5,518.6 887.0,517.9 889.5,519.9 892.6,520.6 895.4,521.6 898.2,523.0 901.2,523.9 903.9,525.5 906.7,526.6 909.8,527.1 912.7,528.1 916.0,527.9 918.6,530.0 921.6,530.6" fill="none" stroke="#efa2cc" stroke-width="1.7"/>
<polyline points="872.1,513.9 872.8,510.8 873.1,507.7 875.1,505.0 875.5,501.9 876.7,499.0 877.8,496.0 877.9,492.8" fill="none" stroke="#efa2cc" stroke-width="1.7"/>
<polyline points="877.9,492.8 882.5,490.0" fill="none" stroke="#efa2cc" stroke-width="1.7"/>
<polyline points="882.5,490.0 885.6,490.3 887.9,493.0 891.1,492.8 893.9,494.0 896.8,495.0 899.6,496.0 902.4,497.2 904.9,499.3 908.0,499.6 911.2,499.6 913.6,501.9 916.4,503.0 919.7,502.9 922.6,503.9 925.0,506.0 927.9,506.9" fill="none" stroke="#efa2cc" stroke-width="1.7"/>
<polyline points="927.9,506.9 927.5,510.0 927.8,513.0 928.4,516.0 928.1,519.1 928.7,522.1 927.7,525.2 928.8,528.2" fill="none" stroke="#efa2cc" stroke-width="1.7"/>
<polyline points="921.6,530.6 925.1,529.1 928.8,528.2" fill="none" stroke="#efa2cc" stroke-width="1.7"/>
<polyline points="863.6,521.2 866.8,519.2 869.3,516.4 872.1,513.9" fill="none" stroke="#efa2cc" stroke-width="1.7"/>
<polyline points="890.0,557.2 892.5,555.2 895.1,553.4 897.9,551.8 899.5,548.8 901.6,546.3 904.9,545.3 906.7,542.5 909.0,540.3 911.7,538.6 914.1,536.5 916.7,534.6 919.5,533.0 921.6,530.6" fill="none" stroke="#efa2cc" stroke-width="1.7"/>
<polyline points="840.6,488.3 843.7,487.5 845.9,484.9 849.4,485.0 852.1,483.3 854.5,481.1 857.6,480.4" fill="none" stroke="#efa2cc" stroke-width="1.7"/>
<polyline points="857.6,480.4 860.8,481.6 863.4,483.9 866.7,485.1 868.8,488.1 872.5,488.6 875.4,490.4 877.9,492.8" fill="none" stroke="#efa2cc" stroke-width="1.7"/>
<polyline points="933.5,533.8 936.0,535.9 939.2,536.4 942.1,537.6 944.9,539.0 947.6,540.5 950.0,542.6 953.2,543.2 955.5,545.6 958.9,545.9 961.3,548.1 964.4,548.9 967.3,550.0 969.8,551.9 972.9,552.8 975.3,554.9 977.9,556.7 980.8,558.0 983.6,559.3 986.3,560.9 989.5,561.5" fill="none" stroke="#efa2cc" stroke-width="1.7"/>
<polyline points="933.5,533.8 931.8,530.6" fill="none" stroke="#efa2cc" stroke-width="1.7"/>
<polyline points="931.8,530.6 934.7,529.6 937.5,528.3 940.4,527.5 943.6,527.9 946.5,527.1 949.5,526.5 952.0,524.2 955.0,523.6 957.9,522.8 960.9,522.4 963.8,521.5 966.8,521.1 969.8,520.4 972.5,519.0 975.7,519.2 978.4,517.4 981.2,516.2 984.2,515.8" fill="none" stroke="#efa2cc" stroke-width="1.7"/>
<polyline points="989.5,561.5 988.8,558.5 989.4,555.3 988.5,552.4 988.4,549.3 987.8,546.3 988.3,543.1 987.4,540.1 986.5,537.1 987.0,534.0 986.4,531.0 985.4,528.0 985.2,524.9 984.4,522.0 984.1,518.9 984.2,515.8" fill="none" stroke="#efa2cc" stroke-width="1.7"/>
<polyline points="937.4,577.1 936.2,574.1 936.9,570.9 937.4,567.7 935.9,564.8 936.6,561.6 935.6,558.6 934.7,555.5 935.2,552.4 935.1,549.3 933.7,546.3 933.4,543.2 934.2,540.0 933.0,537.0 933.5,533.8" fill="none" stroke="#efa2cc" stroke-width="1.7"/>
<polyline points="993.6,567.8 990.9,565.0 989.5,561.5" fill="none" stroke="#efa2cc" stroke-width="1.7"/>
<polyline points="928.8,528.2 931.8,530.6" fill="none" stroke="#efa2cc" stroke-width="1.7"/>
<polyline points="1028.9,528.3 1028.0,524.9 1025.3,522.6 1023.2,519.9 1021.7,517.0 1019.7,514.2 1018.2,511.2 1017.0,508.0" fill="none" stroke="#efa2cc" stroke-width="1.7"/>
<polyline points="986.2,512.9 989.3,512.6 992.5,512.8 995.3,510.7 998.4,510.1 1001.6,510.5 1004.8,510.4 1007.8,509.5 1010.9,509.6 1013.8,507.8 1017.0,508.0" fill="none" stroke="#efa2cc" stroke-width="1.7"/>
<polyline points="986.2,512.9 984.2,515.8" fill="none" stroke="#efa2cc" stroke-width="1.7"/>
<polyline points="1121.5,367.6 1118.2,369.2 1114.7,369.6 1111.1,369.8" fill="none" stroke="#efa2cc" stroke-width="1.7"/>
<polyline points="1111.1,369.8 1109.8,372.7 1107.2,374.7 1106.3,377.8 1104.6,380.5 1102.3,382.7 1101.3,385.8 1098.7,387.9 1096.8,390.3 1096.1,393.6 1093.7,395.8 1092.1,398.4 1090.5,401.2 1088.4,403.5 1087.4,406.6" fill="none" stroke="#efa2cc" stroke-width="1.7"/>
<polyline points="1044.0,350.7 1044.8,354.0 1046.4,356.8 1049.0,359.2 1049.7,362.5 1050.7,365.7 1052.9,368.3 1053.9,371.4" fill="none" stroke="#efa2cc" stroke-width="1.7"/>
<polyline points="1044.0,350.7 1046.6,348.8 1049.8,348.4 1053.0,348.1 1055.9,347.1 1058.8,345.9 1061.5,344.2 1064.3,343.0 1067.3,342.2 1069.7,339.7 1072.6,338.8 1075.9,338.7 1078.9,337.6 1081.6,336.1" fill="none" stroke="#efa2cc" stroke-width="1.7"/>
<polyline points="1053.9,371.4 1057.3,370.5 1060.7,371.9 1064.1,371.0 1067.5,371.9 1070.9,371.0 1074.3,372.1" fill="none" stroke="#efa2cc" stroke-width="1.7"/>
<polyline points="1074.3,372.1 1076.1,369.6 1079.0,367.9 1080.3,364.9 1083.0,363.1 1083.8,359.8 1086.4,357.9" fill="none" stroke="#efa2cc" stroke-width="1.7"/>
<polyline points="1081.6,336.1 1081.4,339.4 1083.6,342.2 1083.7,345.4 1085.2,348.4 1085.4,351.6 1086.4,354.6 1086.4,357.9" fill="none" stroke="#efa2cc" stroke-width="1.7"/>
<polyline points="1083.7,330.7 1081.6,336.1" fill="none" stroke="#efa2cc" stroke-width="1.7"/>
<polyline points="1043.4,322.0 1043.8,325.1 1042.5,328.0 1042.2,331.0 1042.2,334.1 1041.6,337.1 1041.4,340.1 1041.3,343.1 1040.4,346.1 1041.0,349.2" fill="none" stroke="#efa2cc" stroke-width="1.7"/>
<polyline points="1041.0,349.2 1044.0,350.7" fill="none" stroke="#efa2cc" stroke-width="1.7"/>
<polyline points="1068.4,419.8 1066.4,417.5 1063.7,415.8 1062.0,413.3 1060.4,410.6 1059.1,407.7 1055.8,406.5 1054.0,404.0 1052.3,401.4 1051.2,398.4 1048.8,396.4 1047.2,393.8 1044.7,391.9" fill="none" stroke="#efa2cc" stroke-width="1.7"/>
<polyline points="1044.7,391.9 1045.9,388.9 1047.5,386.1 1049.0,383.3 1049.3,379.9 1050.4,376.8 1052.8,374.4 1053.9,371.4" fill="none" stroke="#efa2cc" stroke-width="1.7"/>
<polyline points="1087.4,406.6 1085.8,403.9 1085.1,400.9 1083.9,398.1 1082.6,395.3 1081.6,392.3 1081.3,389.2 1080.5,386.2 1079.4,383.3 1077.8,380.6 1076.3,377.9 1075.0,375.1 1074.3,372.1" fill="none" stroke="#efa2cc" stroke-width="1.7"/>
<polyline points="1111.1,369.8 1108.0,369.3 1105.3,367.8 1103.2,365.1 1100.4,363.9 1097.7,362.5 1094.9,361.3 1091.8,360.7 1089.0,359.6 1086.4,357.9" fill="none" stroke="#efa2cc" stroke-width="1.7"/>
<polyline points="722.5,481.7 723.4,478.7 724.6,475.7 724.1,472.3 726.2,469.6 725.7,466.2 726.6,463.1 727.1,460.0 728.5,457.1" fill="none" stroke="#efa2cc" stroke-width="1.7"/>
<polyline points="722.5,481.7 719.4,482.4 716.3,481.4 713.2,481.5 710.0,481.3 707.0,483.1 703.8,481.9 700.7,481.8 697.7,483.0 694.5,482.8 691.5,484.0 688.3,483.0 685.2,483.4 682.2,484.5 679.0,482.9 675.9,482.9 672.8,483.7 669.7,483.4 666.6,484.3" fill="none" stroke="#efa2cc" stroke-width="1.7"/>
<polyline points="728.5,457.1 725.4,456.5 722.6,455.0 720.1,453.0 716.9,452.6 713.8,451.9 711.2,449.8 708.3,448.8 705.1,448.3 702.1,447.5 699.4,445.9 696.6,444.5 693.7,443.3 690.7,442.4" fill="none" stroke="#efa2cc" stroke-width="1.7"/>
<polyline points="690.7,442.4 688.3,444.5 686.7,447.4 684.1,449.3 682.1,451.7 679.2,453.4 677.0,455.7 674.8,458.0 673.6,461.2 671.1,463.3 669.4,466.0 666.8,467.9 665.1,470.6 662.8,472.9 660.2,474.8" fill="none" stroke="#efa2cc" stroke-width="1.7"/>
<polyline points="666.6,484.3 663.7,481.1 660.7,478.0" fill="none" stroke="#efa2cc" stroke-width="1.7"/>
<polyline points="660.2,474.8 660.7,478.0" fill="none" stroke="#efa2cc" stroke-width="1.7"/>
<polyline points="733.7,452.6 731.1,454.8 728.5,457.1" fill="none" stroke="#efa2cc" stroke-width="1.7"/>
<polyline points="723.4,485.4 722.5,481.7" fill="none" stroke="#efa2cc" stroke-width="1.7"/>
<polyline points="672.5,521.0 671.6,518.0 671.8,514.8 670.3,511.9 670.8,508.7 669.6,505.8 669.9,502.6 669.7,499.5 668.5,496.5 668.4,493.4 667.4,490.4 666.1,487.5 666.6,484.3" fill="none" stroke="#efa2cc" stroke-width="1.7"/>
<polyline points="688.2,437.5 690.7,442.4" fill="none" stroke="#efa2cc" stroke-width="1.7"/>
<polyline points="648.7,461.7 651.0,464.3 653.1,467.1 655.6,469.5 658.1,472.0 660.2,474.8" fill="none" stroke="#efa2cc" stroke-width="1.7"/>
<polyline points="622.3,501.8 625.0,500.5 627.8,499.3 629.8,496.7 632.8,495.9 635.1,493.8 637.7,492.4 640.0,490.3 642.3,488.3 645.1,487.2 647.4,485.1 650.3,484.1 653.0,482.8 655.1,480.4 658.5,480.1 660.7,478.0" fill="none" stroke="#efa2cc" stroke-width="1.7"/>
<polyline points="829.9,376.1 832.1,373.3 833.8,370.3 835.0,366.9 837.4,364.3" fill="none" stroke="#efa2cc" stroke-width="1.7"/>
<polyline points="829.9,376.1 832.4,377.9 835.0,379.6 837.3,381.7 840.2,382.9 842.5,385.1 844.8,387.1 847.4,388.9 850.0,390.6 852.6,392.3 856.0,392.8 858.6,394.4 860.9,396.6 863.2,398.7 866.3,399.6 868.4,402.0" fill="none" stroke="#efa2cc" stroke-width="1.7"/>
<polyline points="837.4,364.3 840.4,365.0 843.5,365.0 846.6,363.9 849.7,363.8 852.7,364.8 855.7,365.8 858.8,365.8 861.9,365.4 864.9,366.2 868.0,365.3 871.0,366.2 874.1,366.3 877.2,365.1 880.2,366.0" fill="none" stroke="#efa2cc" stroke-width="1.7"/>
<polyline points="868.4,402.0 869.0,398.9 870.4,396.0 871.0,392.9 873.1,390.2 874.2,387.3 873.5,383.7 874.3,380.7 876.5,378.1 877.9,375.2 878.6,372.1 879.4,369.1 880.2,366.0" fill="none" stroke="#efa2cc" stroke-width="1.7"/>
<polyline points="821.0,380.9 823.9,379.1 826.9,377.6 829.9,376.1" fill="none" stroke="#efa2cc" stroke-width="1.7"/>
<polyline points="837.8,347.0 837.6,350.5 837.7,353.9 837.3,357.4 837.6,360.8 837.4,364.3" fill="none" stroke="#efa2cc" stroke-width="1.7"/>
<polyline points="889.2,358.4 885.7,360.3 882.7,362.8 880.2,366.0" fill="none" stroke="#efa2cc" stroke-width="1.7"/>
<polyline points="890.9,350.1 890.2,354.3 889.2,358.4" fill="none" stroke="#efa2cc" stroke-width="1.7"/>
<polyline points="882.5,490.0 884.3,487.5 885.5,484.7 885.7,481.5 886.2,478.4 887.6,475.8 888.5,472.8 889.6,470.0 892.4,467.9 892.6,464.7 894.4,462.2 895.1,459.2" fill="none" stroke="#efa2cc" stroke-width="1.7"/>
<polyline points="857.6,480.4 858.1,477.2 858.8,474.1 857.1,470.8 858.0,467.7 858.3,464.5 858.0,461.3 857.6,458.2 858.0,455.0 858.2,451.8 859.8,448.7 859.0,445.5" fill="none" stroke="#efa2cc" stroke-width="1.7"/>
<polyline points="895.1,459.2 891.8,458.8 889.0,457.2 886.3,455.2 883.1,454.6 880.1,453.5 877.3,451.8 873.8,451.9 870.9,450.4 867.8,449.5 865.3,447.1 862.0,446.7 859.0,445.5" fill="none" stroke="#efa2cc" stroke-width="1.7"/>
<polyline points="868.4,402.0 869.4,406.0 870.6,409.9" fill="none" stroke="#efa2cc" stroke-width="1.7"/>
<polyline points="870.6,409.9 869.3,413.0 866.7,415.1 864.9,417.8 863.2,420.6 860.0,422.4 859.3,425.9 856.7,428.0 855.5,431.2 853.7,434.0 851.0,436.0" fill="none" stroke="#efa2cc" stroke-width="1.7"/>
<polyline points="851.0,436.0 853.0,438.3 855.1,440.7 856.3,443.7 859.0,445.5" fill="none" stroke="#efa2cc" stroke-width="1.7"/>
<polyline points="1022.6,440.0 1024.0,443.1 1024.7,446.4 1027.5,448.8 1028.5,452.1 1028.7,455.6 1030.9,458.3 1031.8,461.6 1033.6,464.5" fill="none" stroke="#efa2cc" stroke-width="1.7"/>
<polyline points="1022.6,440.0 1018.4,438.2" fill="none" stroke="#efa2cc" stroke-width="1.7"/>
<polyline points="1018.4,438.2 1016.8,440.9 1015.3,443.8 1013.4,446.2 1010.5,448.0 1009.6,451.3 1007.8,453.9 1004.8,455.6 1004.1,459.0 1001.8,461.2 999.6,463.5 998.5,466.6 995.6,468.4 994.2,471.3" fill="none" stroke="#efa2cc" stroke-width="1.7"/>
<polyline points="1033.6,464.5 1032.8,467.5 1031.2,470.2 1030.1,473.0 1029.6,476.1 1027.6,478.6 1027.9,482.0 1026.6,484.8 1025.3,487.5 1024.7,490.6 1023.2,493.3" fill="none" stroke="#efa2cc" stroke-width="1.7"/>
<polyline points="994.2,471.3 997.1,472.5 999.0,475.0 1000.8,477.5 1003.0,479.5 1006.0,480.7 1007.4,483.6 1009.9,485.3 1013.0,486.4 1014.7,489.0 1017.9,489.9 1020.0,492.1 1021.9,494.5" fill="none" stroke="#efa2cc" stroke-width="1.7"/>
<polyline points="1067.4,421.9 1064.4,422.6 1061.7,424.0 1058.7,424.6 1056.5,427.0 1053.1,426.7 1050.3,427.9 1048.0,430.4 1044.9,430.7 1041.9,431.3 1039.6,433.7 1036.4,433.8 1033.8,435.5 1031.0,436.7 1027.9,437.1 1025.2,438.5 1022.6,440.0" fill="none" stroke="#efa2cc" stroke-width="1.7"/>
<polyline points="1059.4,467.8 1056.1,468.2 1053.1,466.1 1049.7,466.5 1046.5,466.3 1043.4,464.8 1040.1,464.6 1036.7,465.8 1033.6,464.5" fill="none" stroke="#efa2cc" stroke-width="1.7"/>
<polyline points="1062.7,495.7 1059.6,496.5 1056.6,495.1 1053.6,494.7 1050.5,495.3 1047.5,494.5 1044.5,494.0 1041.5,493.4 1038.4,494.8 1035.3,494.6 1032.3,493.5 1029.3,493.8 1026.2,494.3 1023.2,493.3" fill="none" stroke="#efa2cc" stroke-width="1.7"/>
<polyline points="1017.0,508.0 1019.0,504.9 1018.6,500.9 1020.9,497.9 1021.9,494.5" fill="none" stroke="#efa2cc" stroke-width="1.7"/>
<polyline points="1044.7,391.9 1041.6,391.8 1038.4,391.5 1035.3,392.7 1032.2,393.3 1029.0,391.6 1025.8,392.7 1022.7,392.6" fill="none" stroke="#efa2cc" stroke-width="1.7"/>
<polyline points="1018.4,438.2 1016.7,435.3 1013.6,433.8 1011.9,431.0 1009.2,429.0 1006.7,426.9 1005.1,423.9 1002.9,421.5 1000.5,419.3" fill="none" stroke="#efa2cc" stroke-width="1.7"/>
<polyline points="1000.5,419.3 1002.0,416.4 1003.9,413.9 1006.4,411.9 1007.9,409.1 1011.2,407.7 1013.1,405.1 1014.2,401.9 1016.3,399.6 1019.3,398.0 1020.2,394.7 1022.7,392.6" fill="none" stroke="#efa2cc" stroke-width="1.7"/>
<polyline points="1041.0,349.2 1038.0,350.3 1034.9,350.4 1031.7,349.8 1028.7,351.3 1025.6,351.1 1022.6,352.1 1019.4,351.7 1016.4,353.1 1013.4,353.6 1010.2,353.3" fill="none" stroke="#efa2cc" stroke-width="1.7"/>
<polyline points="1022.7,392.6 1021.7,389.6 1020.4,386.7 1019.9,383.5 1019.5,380.3 1017.1,377.7 1017.7,374.2 1015.9,371.5 1014.1,368.7 1013.8,365.5 1014.0,362.1 1012.6,359.2 1010.7,356.5 1010.2,353.3" fill="none" stroke="#efa2cc" stroke-width="1.7"/>
<polyline points="997.3,344.8 1000.0,348.1" fill="none" stroke="#efa2cc" stroke-width="1.7"/>
<polyline points="1000.0,348.1 1003.7,349.3 1006.4,352.3 1010.2,353.3" fill="none" stroke="#efa2cc" stroke-width="1.7"/>
<polyline points="927.9,506.9 929.1,503.8 931.0,500.9 930.9,497.3 932.1,494.2 933.0,490.9 935.1,488.1 935.7,484.8" fill="none" stroke="#efa2cc" stroke-width="1.7"/>
<polyline points="986.2,512.9 985.6,509.8 984.4,507.0 982.0,504.7 980.3,502.2 979.4,499.2 978.1,496.5 977.3,493.4 974.8,491.3 973.7,488.4 973.0,485.3 971.9,482.5 970.2,479.9" fill="none" stroke="#efa2cc" stroke-width="1.7"/>
<polyline points="935.7,484.8 938.8,484.0 942.1,484.6 945.0,482.8 948.1,482.2 951.5,483.1 954.6,482.7 957.6,481.4 960.7,480.7 963.9,480.5 967.1,480.5 970.2,479.9" fill="none" stroke="#efa2cc" stroke-width="1.7"/>
<polyline points="902.5,456.6 898.7,457.6 895.1,459.2" fill="none" stroke="#efa2cc" stroke-width="1.7"/>
<polyline points="902.5,456.6 905.2,458.1 906.7,461.1 910.0,461.9 911.8,464.5 915.0,465.3 916.5,468.4 919.7,469.2 921.6,471.6 923.8,473.8 927.1,474.5 928.9,477.2 931.3,479.1 933.8,480.8" fill="none" stroke="#efa2cc" stroke-width="1.7"/>
<polyline points="935.7,484.8 933.8,480.8" fill="none" stroke="#efa2cc" stroke-width="1.7"/>
<polyline points="994.2,471.3 991.0,472.0 987.9,472.5 984.6,472.2 981.4,472.8 978.1,472.5 975.0,473.6" fill="none" stroke="#efa2cc" stroke-width="1.7"/>
<polyline points="970.2,479.9 972.1,476.4 975.0,473.6" fill="none" stroke="#efa2cc" stroke-width="1.7"/>
<polyline points="902.5,456.6 904.4,451.5" fill="none" stroke="#efa2cc" stroke-width="1.7"/>
<polyline points="870.6,409.9 873.9,409.4 877.0,411.0 880.3,410.4 883.4,411.8 886.8,411.0 889.9,412.5 893.1,412.5 896.4,412.4" fill="none" stroke="#efa2cc" stroke-width="1.7"/>
<polyline points="904.4,451.5 903.1,448.6 904.0,445.3 902.8,442.4 901.0,439.7 902.2,436.3 900.2,433.6 900.5,430.4 899.8,427.4 899.5,424.3 899.2,421.2 897.5,418.4 896.2,415.6 896.4,412.4" fill="none" stroke="#efa2cc" stroke-width="1.7"/>
<polyline points="889.2,358.4 890.8,361.0 893.1,363.1 895.1,365.4 896.5,368.3 899.2,369.9 901.2,372.2 902.5,375.1 905.5,376.6 906.9,379.4 909.1,381.5 910.3,384.5 912.8,386.4" fill="none" stroke="#efa2cc" stroke-width="1.7"/>
<polyline points="912.8,386.4 911.6,389.3 911.0,392.5 909.4,395.2 909.1,398.5 906.5,400.9 906.2,404.1 905.1,407.1" fill="none" stroke="#efa2cc" stroke-width="1.7"/>
<polyline points="905.1,407.1 902.4,409.2 899.6,411.2 896.4,412.4" fill="none" stroke="#efa2cc" stroke-width="1.7"/>
<polyline points="947.7,359.2 947.0,362.7 945.9,366.1 945.8,369.6 945.5,373.1 945.4,376.7" fill="none" stroke="#efa2cc" stroke-width="1.7"/>
<polyline points="1000.0,348.1 999.0,351.0 997.5,353.8 995.7,356.4 994.9,359.4 993.2,362.1 993.7,365.6 991.0,367.9 990.5,371.0 989.4,373.9 989.0,377.1 986.3,379.4 985.4,382.3 985.3,385.7 984.0,388.5 981.3,390.7 981.0,393.9 979.8,396.8" fill="none" stroke="#efa2cc" stroke-width="1.7"/>
<polyline points="979.8,396.8 977.2,395.2 974.5,393.8 972.2,391.6 969.0,391.0 966.9,388.5 963.7,388.0 961.2,386.1 958.8,384.2 956.5,382.1 953.7,380.8 950.2,380.6 948.0,378.3 945.4,376.7" fill="none" stroke="#efa2cc" stroke-width="1.7"/>
<polyline points="912.8,386.4 915.9,385.6 918.8,384.5 922.1,384.5 925.2,384.0 928.3,383.5 930.9,381.0 934.1,380.9 937.2,380.4 940.2,379.3 943.3,378.7" fill="none" stroke="#efa2cc" stroke-width="1.7"/>
<polyline points="992.5,418.2 990.2,415.8 987.5,413.7" fill="none" stroke="#efa2cc" stroke-width="1.7"/>
<polyline points="992.5,418.2 991.1,421.1 988.9,423.5 986.8,425.9 985.1,428.5 983.4,431.2 981.0,433.4 978.7,435.7 977.6,438.8 975.9,441.5 973.4,443.6 972.0,446.5" fill="none" stroke="#efa2cc" stroke-width="1.7"/>
<polyline points="987.5,413.7 984.4,413.9 981.3,414.1 978.2,414.7 975.2,415.8 971.9,414.7 969.0,416.6 965.7,415.5 962.7,416.5 959.6,416.8 956.5,417.3 953.4,418.1 950.3,418.3 947.2,418.4 944.0,418.4 941.0,419.5" fill="none" stroke="#efa2cc" stroke-width="1.7"/>
<polyline points="972.0,446.5 968.8,445.3 965.4,445.6 962.2,445.1 958.8,445.1 955.7,443.5 952.3,443.6 949.0,443.6 945.7,443.0" fill="none" stroke="#efa2cc" stroke-width="1.7"/>
<polyline points="945.7,443.0 944.2,440.1 942.1,437.5 940.6,434.6 938.8,431.8 936.7,429.3" fill="none" stroke="#efa2cc" stroke-width="1.7"/>
<polyline points="936.7,429.3 936.9,423.9" fill="none" stroke="#efa2cc" stroke-width="1.7"/>
<polyline points="936.9,423.9 938.3,421.1 941.0,419.5" fill="none" stroke="#efa2cc" stroke-width="1.7"/>
<polyline points="1000.5,419.3 996.4,419.5 992.5,418.2" fill="none" stroke="#efa2cc" stroke-width="1.7"/>
<polyline points="979.8,396.8 981.3,399.5 981.7,402.7 984.2,405.0 984.3,408.4 986.1,410.9 987.5,413.7" fill="none" stroke="#efa2cc" stroke-width="1.7"/>
<polyline points="975.0,473.6 975.3,470.5 974.9,467.5 974.6,464.5 974.5,461.5 972.4,458.7 973.0,455.5 971.7,452.6 973.2,449.4 972.0,446.5" fill="none" stroke="#efa2cc" stroke-width="1.7"/>
<polyline points="943.3,378.7 944.1,381.9 943.8,385.0 942.4,388.1 941.7,391.2 941.7,394.4 942.9,397.6 943.0,400.7 942.3,403.8 941.4,406.9 940.9,410.0 940.7,413.2 940.5,416.3 941.0,419.5" fill="none" stroke="#efa2cc" stroke-width="1.7"/>
<polyline points="933.8,480.8 935.3,478.1 935.6,475.0 936.4,472.0 937.5,469.2 938.3,466.2 938.9,463.2 939.4,460.2 940.3,457.3 941.6,454.5 942.5,451.6 944.1,448.9 944.4,445.8 945.7,443.0" fill="none" stroke="#efa2cc" stroke-width="1.7"/>
<polyline points="904.4,451.5 907.0,449.9 909.6,448.4 911.8,446.3 914.2,444.5 917.0,443.2 919.7,441.8 921.5,439.1 923.9,437.3 926.3,435.4 929.6,434.9 932.2,433.5 933.7,430.2 936.7,429.3" fill="none" stroke="#efa2cc" stroke-width="1.7"/>
<polyline points="905.1,407.1 907.7,409.2 910.8,410.4 913.8,411.6 916.7,413.2 919.7,414.5 922.3,416.4 925.6,417.3 928.4,418.9 931.1,420.9 934.2,422.1 936.9,423.9" fill="none" stroke="#efa2cc" stroke-width="1.7"/>
<polyline points="750.8,304.3 749.1,306.7 749.1,309.7 747.3,312.1 746.4,314.8 745.6,317.5 747.1,319.8 748.8,321.8 751.4,323.2 752.7,325.7 754.3,327.8 756.1,329.9 757.4,332.3 759.4,334.2 761.4,336.0 762.0,338.7 762.8,341.3 763.7,343.8 764.3,346.5 764.7,349.2 765.8,351.7 765.9,354.5 766.7,357.1 767.6,359.7 768.8,362.2 769.9,364.8 770.3,367.6 771.4,370.2 772.0,372.9 770.2,374.8 769.3,377.3 768.5,379.8 766.4,381.5 764.7,383.5 764.0,386.1 762.6,388.4 760.3,389.9 758.9,392.3 756.6,393.8 755.1,396.0 752.3,397.1 750.8,399.3" fill="none" stroke="#d27aad" stroke-width="2.8"/>
<polyline points="777.2,450.0 779.7,449.8 782.3,449.5 784.8,449.9 787.3,449.5 789.9,450.0 792.4,449.2 794.9,449.8 797.5,450.1 800.0,449.3 803.0,448.0 806.2,447.4 809.2,446.2 812.0,446.3 814.9,446.6 817.7,447.2 820.5,447.3 823.3,447.8 826.2,447.7 825.6,445.2 824.4,442.9 824.1,440.4 823.1,438.0 822.9,435.5 821.9,433.1 821.1,430.7 821.8,427.9 820.7,425.5 820.0,423.1 822.6,423.3 825.3,423.1 827.8,423.9 830.5,423.6 833.1,424.5 835.7,423.8 838.3,424.7 841.0,423.5 843.6,424.6 846.2,424.6 848.8,425.0 851.5,425.3 854.2,424.7 856.7,425.9 859.3,426.5 862.0,426.3 864.7,426.2 866.2,428.5 867.7,430.8 869.6,428.8 872.0,427.4 873.8,425.3 876.4,424.2 877.8,421.6 880.0,420.0 882.5,419.5 885.1,419.4 887.7,419.2 890.1,418.0 892.7,417.8 895.2,417.5 897.8,417.1 900.3,416.4 902.8,415.9 905.1,414.4 907.8,414.6 910.6,414.9 913.1,416.0 915.9,416.2 918.3,417.7 921.1,417.9 923.5,419.3 926.2,420.0 928.5,421.5 931.0,422.6 933.8,422.8 936.4,423.7 938.6,425.4 941.2,426.4 944.0,425.4 946.6,426.2 949.4,425.4 952.0,427.0 954.7,426.3 957.4,427.1 960.1,426.9 962.9,426.3 965.8,425.8 968.6,425.4 971.3,424.0 974.0,423.1 976.5,424.1 979.1,424.8 981.8,425.4 984.1,426.9 986.8,427.5 989.5,427.8 992.0,429.0 994.4,430.3 997.1,430.8 999.6,429.9 1001.4,428.0 1003.9,427.1 1005.7,425.2 1007.8,423.7 1009.6,421.8 1011.8,420.5 1014.3,419.6" fill="none" stroke="#d27aad" stroke-width="2.8"/>
<polyline points="974.0,423.1 974.1,420.3 972.9,417.8 971.9,415.2 970.7,412.7 971.4,409.7 970.3,407.2 969.4,404.6 970.1,402.2 970.3,399.6 971.5,397.3 972.2,394.8 973.3,392.5 973.8,389.9 974.6,387.5 975.0,385.0 976.4,382.6 978.3,380.6 979.6,378.1 980.3,375.4 982.0,373.2 984.0,371.2 985.5,368.9 986.2,366.1 988.0,364.0" fill="none" stroke="#d27aad" stroke-width="2.8"/>
<polyline points="750.8,399.3 753.5,399.3 755.7,400.9 758.3,401.1 760.8,401.6 763.3,402.4 765.6,403.4 768.3,403.6 770.6,404.6 773.1,405.3 775.3,407.0 778.0,406.9 780.6,407.1 782.8,408.9 785.4,408.9 787.8,409.9 787.0,412.5 788.5,415.2 787.2,417.8 788.5,420.5 787.3,423.1 787.8,425.8 787.8,428.4 786.4,430.7 784.9,432.9 783.9,435.4 782.7,437.8 781.3,440.1 780.1,442.5 779.8,445.3 778.8,447.8 777.2,450.0 776.2,452.4 775.1,454.8 774.0,457.1 774.1,459.9 773.3,462.4 771.3,464.5 771.2,467.2 770.5,469.7 769.6,472.2 768.4,474.5 766.1,475.6 764.2,477.2 762.1,478.6 759.6,479.3 758.1,481.7 755.8,482.8 753.0,483.1 751.6,485.6 749.1,486.3" fill="none" stroke="#d27aad" stroke-width="2.8"/>
<polyline points="642.0,413.0 642.1,415.6 642.3,418.2 643.7,420.6 643.9,423.2 643.6,425.9 643.9,428.5 644.6,431.0 646.3,433.3 646.0,436.0 647.3,438.5 647.8,441.3 649.7,443.5 651.0,446.0 652.4,448.4 653.5,451.0 655.0,453.4 656.0,456.0 658.5,457.5 661.3,458.3 664.2,459.0 666.4,461.3 669.5,461.5 672.0,463.0 672.2,465.7 671.3,468.3 670.6,470.8 671.6,473.6 670.1,476.1 670.1,478.8 670.8,481.5 670.3,484.1 670.2,486.8 670.1,489.4 669.0,492.0" fill="none" stroke="#d27aad" stroke-width="2.8"/>
<polyline points="669.0,492.0 670.2,494.7 672.1,497.0 673.4,499.7 676.0,500.7 678.5,501.7 681.4,501.9 684.0,502.9 686.2,505.0 689.2,504.6 691.4,506.8 694.2,507.1 696.8,506.3 699.7,506.6 702.2,505.4 705.0,505.3 707.5,504.1 709.9,503.3 712.2,502.0 714.8,501.6 716.8,499.8 719.0,498.3 721.8,498.3 723.9,496.7 726.5,495.7 729.2,495.3 731.3,493.2 734.1,492.7 736.2,490.8 738.9,490.1 741.8,490.1 743.8,487.8 746.8,487.8 749.1,486.3" fill="none" stroke="#d27aad" stroke-width="2.8"/>
<polyline points="749.1,486.3 749.9,489.3 748.3,492.2 749.1,495.2 749.6,497.8 751.6,499.8 751.6,502.6 753.1,504.7 754.0,507.2 754.9,509.6 755.5,512.1 756.5,514.5 757.3,517.0 757.5,519.5 757.7,522.1 756.7,524.7 757.3,527.2 757.9,529.7 758.0,532.3 760.3,531.1 763.0,530.8 765.2,529.5 767.7,528.5 769.9,527.1 771.9,525.4 774.7,525.2 777.1,524.3 779.6,523.6 781.7,521.9 784.1,522.9 785.6,525.1 787.7,526.4 789.0,528.6 790.3,530.8 791.8,532.9 792.7,535.4 794.2,537.5 795.7,539.6 796.2,542.3 798.0,544.2 798.4,546.8 797.4,549.2 796.5,551.6 797.3,554.2 796.6,556.6 796.1,559.1 796.1,561.6 795.3,564.0 794.2,566.4 794.7,569.0 793.4,571.3 793.6,573.9 792.2,576.5 791.6,579.3 791.0,582.1 791.0,585.0 791.9,587.5 792.5,590.1 794.3,592.3 794.7,594.9 795.2,597.6 796.7,599.8 797.2,602.5 798.0,605.0" fill="none" stroke="#d27aad" stroke-width="2.8"/>
<polyline points="669.0,492.0 667.1,493.9 666.3,496.7 664.6,498.7 662.8,500.7 660.9,502.7 659.0,504.6 658.0,507.2 656.0,509.0 655.4,511.5 655.2,514.0 653.8,516.3 653.9,518.9 653.5,521.5 652.3,523.8 650.8,526.0 650.9,528.6 650.9,531.3 649.5,533.5 649.0,536.0 648.3,538.6 648.1,541.4 647.1,543.9 646.8,546.6 645.5,549.1 644.6,551.7 644.3,554.4 643.4,557.0 642.8,559.6 643.3,562.5 642.0,565.0 643.6,567.0 643.7,569.9 644.9,572.1 646.3,574.2 648.2,576.1 649.3,578.3 649.8,580.9 650.9,583.2 652.9,585.0 653.1,587.8 655.1,589.6 656.0,592.0 655.5,594.6 654.3,597.0 653.0,599.4 653.4,602.3 652.4,604.8 650.8,607.1 651.3,610.0 650.5,612.5 649.5,615.0 647.9,617.3 648.0,620.1 647.3,622.6 646.0,625.0 645.3,627.5 644.9,630.0 644.5,632.5 643.9,635.0 644.2,637.6 642.3,639.9 643.2,642.6 642.0,645.0 643.9,647.1 645.3,649.6 646.2,652.3 647.8,654.7 649.0,657.2 650.7,659.5 652.0,662.0" fill="none" stroke="#d27aad" stroke-width="2.8"/>
<polyline points="526.0,470.0 528.7,470.3 531.3,470.8 534.0,469.8 536.7,469.7 539.3,471.3 542.0,470.9 544.7,471.1 547.3,471.6 550.0,471.0 552.7,471.4 555.3,471.1 557.9,469.6 560.5,469.6 563.1,469.2 565.9,470.1 568.4,468.5 571.1,468.7 573.7,468.4 576.3,467.7 579.0,468.0 581.3,466.5 584.2,466.6 586.6,465.2 589.1,464.4 591.4,462.7 593.9,461.7 596.7,461.5 599.0,460.0 601.9,460.0 604.6,459.5 607.5,459.3 610.1,458.0 613.0,458.0 612.2,460.5 611.6,463.1 610.3,465.4 609.5,467.9 608.5,470.4 607.0,472.6 606.0,475.0 604.4,477.3 604.0,480.0 603.4,482.6 602.2,485.1 600.8,487.4 600.0,490.0 600.6,492.6 599.5,495.1 599.3,497.7 599.3,500.2 599.6,502.8 600.4,505.3 600.1,507.9 599.7,510.4 599.7,513.0 599.4,515.6 599.6,518.1 599.0,520.7 598.5,523.2 599.9,525.8 599.7,528.3 599.1,530.9 598.8,533.4 599.0,536.0 598.0,538.5 597.4,541.1 595.9,543.3 594.5,545.6 593.8,548.2 592.4,550.4 591.5,553.0 590.2,555.3 589.6,557.9 587.7,559.9 587.5,562.8 586.0,565.0 583.7,566.5 581.8,568.3 579.5,569.8 578.2,572.3 576.0,573.9 574.3,575.9 571.7,577.0 569.7,578.9 568.0,580.9 566.5,583.2 563.6,584.0 561.5,585.7 560.0,588.0" fill="none" stroke="#d27aad" stroke-width="2.8"/>
<polyline points="613.0,458.0 615.9,458.2 618.7,459.2 621.4,460.5 624.4,460.3 627.1,461.7 630.0,462.0 630.3,459.5 631.0,457.1 632.6,454.8 632.4,452.2 632.6,449.6 633.8,447.3 634.7,445.0 635.5,442.6 634.7,439.8 636.2,437.5 636.4,435.0 636.8,432.5 638.2,430.3 638.4,427.7 638.3,425.1 640.3,423.0 640.3,420.4 640.6,417.8 640.8,415.3 642.0,413.0" fill="none" stroke="#d27aad" stroke-width="2.8"/>
<polyline points="1014.3,419.6 1013.2,421.9 1012.5,424.4 1011.2,426.7 1010.3,429.1 1009.9,431.7 1009.1,434.2 1007.3,436.3 1007.2,439.0 1006.2,441.4 1005.2,443.8 1003.8,446.0 1002.7,448.2 1002.7,450.9 1000.6,452.8 1000.8,455.6 999.6,457.8 997.8,459.8 997.1,462.2 996.2,464.6 995.8,467.1 997.3,469.4 998.5,471.8 1000.1,474.0 1001.3,476.5 1002.3,479.0 1003.6,481.4 1005.4,483.5 1005.8,486.4 1008.0,488.3 1009.0,490.8 1008.2,493.4 1008.8,496.1 1007.9,498.7 1007.8,501.3 1007.6,504.0 1008.1,506.7 1007.4,509.3 1007.6,512.0 1006.1,514.5 1006.4,517.2 1008.2,519.6 1008.5,522.8 1009.9,525.4 1011.7,527.8" fill="none" stroke="#d27aad" stroke-width="2.8"/>
<polyline points="1014.3,419.6 1016.9,418.8 1019.8,418.7 1022.4,417.9 1024.7,416.0 1027.4,415.3 1030.2,415.1 1032.8,414.3 1035.3,412.9 1038.2,412.8 1040.8,411.6 1043.3,410.4 1045.3,412.3 1047.8,413.1 1049.8,414.9 1052.6,415.3 1055.0,416.5 1056.7,418.6 1059.2,419.6 1061.8,418.8 1064.4,418.0 1067.0,417.7 1069.7,417.2 1072.5,417.6 1074.9,415.9 1077.6,415.8 1080.3,415.6 1082.9,416.5 1085.6,416.7 1088.4,416.6 1090.9,417.6 1093.5,418.4 1096.3,418.5 1098.8,419.6 1100.6,421.5 1103.0,422.3 1105.0,424.0 1106.9,425.6 1109.2,426.6 1110.7,428.8 1113.4,429.4 1115.3,431.1 1117.2,432.8 1119.7,433.5 1121.9,434.7 1124.0,436.2 1126.2,437.6 1128.2,439.1 1130.7,439.8 1133.1,440.7 1135.8,440.6 1138.4,441.4 1141.1,441.5 1143.5,443.0 1146.2,443.5 1148.9,443.3 1151.4,444.4 1153.2,446.4 1155.3,448.1 1157.2,450.0 1159.5,451.3 1162.1,450.1 1164.9,449.6 1167.6,448.6 1169.8,446.4 1172.7,446.0 1175.3,446.5 1178.0,446.8 1180.6,446.4 1183.2,446.0 1184.3,448.3 1185.5,450.5 1186.7,452.7 1188.4,454.7 1189.1,457.2 1190.4,459.3 1191.1,461.8 1193.6,463.0 1196.3,463.8 1199.3,463.7 1201.9,464.7 1204.4,466.0 1207.0,467.1 1209.6,467.5 1212.3,467.6 1214.9,467.2 1217.5,467.8 1220.2,466.5 1222.8,467.4 1225.5,467.2 1228.1,467.1 1230.0,465.2 1231.9,463.2 1233.7,461.2 1235.5,459.2 1236.6,456.6 1238.2,454.4 1240.3,452.7 1242.3,450.8 1243.9,448.6 1246.4,449.7 1249.2,449.3 1251.9,449.6 1254.6,449.7 1257.2,450.5 1259.8,451.3 1262.5,450.9 1265.0,449.6 1267.6,449.0 1270.5,449.4 1272.9,447.8 1275.7,447.6 1278.2,446.4 1280.9,446.0 1282.8,443.4 1284.3,440.7 1286.2,438.1 1288.9,438.4 1291.4,439.4 1294.2,439.6 1296.8,440.1 1299.5,440.6 1302.0,441.5 1304.5,442.9 1307.3,442.7 1309.9,443.3 1312.8,442.8 1315.1,441.0 1317.7,440.0 1320.2,438.6 1323.1,438.1" fill="none" stroke="#d27aad" stroke-width="2.8"/>
</g>
<g><polygon points="507.6,490.5 508.5,488.1 507.7,485.3 509.5,483.1 509.3,480.5 509.6,477.9 510.0,475.4 511.3,473.1 514.0,472.2 515.2,469.8 517.6,468.6 519.4,466.9 520.3,464.2 522.6,462.9 524.3,460.7 523.8,457.7 524.7,455.2 526.1,452.9 527.2,450.4 527.7,447.8 528.7,445.3 531.1,443.7 532.6,441.6 532.8,438.6 534.8,436.8 535.4,434.0 536.7,431.7 538.4,429.6 540.2,427.7 542.4,426.2 543.2,423.7 544.3,421.3 546.5,419.8 547.3,417.3 549.8,416.1 550.8,413.7 552.9,412.1 553.7,409.6 555.3,407.6 558.0,406.6 560.5,405.5 562.6,403.2 565.5,402.8 567.9,401.2 570.4,400.0 572.4,401.5 575.1,401.9 577.4,402.8 579.0,405.1 581.8,405.3 583.5,407.3 586.0,408.0 588.4,409.1 590.4,410.8 593.0,411.5 594.5,414.0 597.0,415.0 599.9,413.8 602.6,412.2 606.0,412.5 608.7,410.7 611.2,411.1 613.8,410.7 616.4,411.1 618.8,412.4 621.4,411.6 623.9,412.5 626.5,412.3 629.0,413.0 631.6,411.7 634.5,411.4 637.3,411.0 640.1,410.2 642.8,409.6 645.0,407.1 648.0,407.0 649.6,404.8 651.6,402.8 652.9,400.3 654.4,398.0 657.2,398.3 660.0,398.2 662.6,396.2 665.4,396.5 668.2,396.0 671.0,396.0 672.8,393.7 673.1,390.6 675.4,388.6 677.3,386.4 677.4,383.1 679.5,381.0 682.1,380.8 684.8,381.2 687.4,381.3 690.0,380.4 693.3,379.4 696.3,377.9 697.0,375.4 697.8,372.9 700.1,371.1 700.0,368.1 701.7,366.1 702.2,363.5 704.4,361.6 705.0,359.0 705.7,356.3 706.7,353.6 706.9,350.7 709.4,348.5 709.7,345.6 709.7,342.7 711.3,340.2 712.0,337.8 713.3,335.6 715.3,333.7 716.1,331.3 716.7,328.8 717.6,326.4 720.3,326.5 722.5,325.1 724.7,323.7 727.0,322.7 729.6,322.7 732.2,322.6 734.4,321.1 736.8,320.5 739.2,319.5 741.7,319.3 744.0,318.1 746.5,317.6 748.0,315.0 748.4,312.0 749.3,309.2 749.7,306.3 751.5,303.8 753.9,302.4 756.2,301.0 758.2,299.1 760.0,297.0 762.3,295.2 764.9,293.7 766.7,291.3 769.2,289.7 771.6,288.0 774.0,287.1 775.9,285.3 777.9,283.7 780.5,283.0 782.8,282.0 785.4,281.8 787.8,282.9 790.5,282.3 792.9,283.5 795.5,283.4 798.0,283.7 800.7,282.7 803.1,284.3 805.7,284.0 808.2,284.4 810.7,284.2 813.2,284.1 815.7,283.6 818.2,284.0 820.8,284.8 823.3,284.4 825.8,283.4 828.3,284.4 830.8,284.0 830.4,286.6 831.0,289.1 831.6,291.6 833.2,293.9 833.3,296.4 833.6,298.9 833.9,301.5 833.9,304.0 833.9,306.6 835.0,309.0 837.8,308.8 840.2,310.5 843.0,310.2 845.6,311.2 848.4,310.6 851.0,311.6 853.3,310.0 854.7,307.4 856.5,305.3 859.3,304.2 860.9,301.8 863.3,300.3 865.0,298.0 866.0,295.3 868.6,293.7 869.3,290.9 871.5,289.0 872.4,286.3 874.0,284.0 876.7,283.1 879.0,281.1 881.8,280.1 884.7,279.8 887.3,278.3 890.0,277.4 892.7,276.4 894.7,274.4 896.7,272.3 898.9,270.7 901.9,270.1 903.8,268.0 905.1,270.2 906.5,272.4 908.8,273.8 910.7,275.6 911.9,277.9 913.9,279.6 915.0,282.0 914.8,284.7 916.7,286.9 916.6,289.6 917.0,292.2 918.6,294.5 918.3,297.2 919.0,299.7 918.6,302.4 920.0,304.8 922.8,305.5 925.4,306.5 927.9,308.1 930.6,309.2 933.5,309.4 936.0,310.1 938.2,311.1 940.3,312.5 942.2,314.5 944.6,315.2 947.0,316.0 947.3,318.6 946.7,321.2 947.5,323.7 948.7,326.2 949.3,328.7 949.1,331.3 948.6,333.9 950.1,336.4 949.5,339.0 948.4,341.5 947.5,344.1 946.9,346.8 945.4,349.2 944.2,351.7 943.9,354.6 942.6,357.0 945.5,357.5 948.1,359.2 951.1,359.2 954.0,359.6 956.7,358.1 959.5,356.6 962.5,355.8 965.5,355.0 968.1,355.7 970.2,357.7 972.9,358.2 975.5,358.9 977.8,360.6 980.8,360.3 982.8,362.4 985.3,363.6 988.0,364.0 988.6,361.3 989.6,358.8 990.6,356.3 992.5,354.2 992.8,351.4 995.1,349.5 995.4,346.7 995.8,343.9 997.2,341.6 998.0,339.0 999.7,336.8 1001.8,335.0 1003.8,333.3 1007.0,333.3 1009.2,331.8 1010.9,329.5 1013.2,328.2 1015.7,327.0 1018.2,326.0 1020.4,324.5 1022.6,323.0 1025.1,322.8 1027.6,322.3 1030.1,322.8 1032.6,322.0 1035.1,321.9 1037.6,322.0 1040.0,320.9 1042.5,320.8 1045.0,320.8 1047.5,321.8 1050.0,321.8 1052.7,320.9 1055.2,321.3 1057.6,323.0 1060.2,322.7 1062.8,322.8 1065.5,322.4 1068.1,321.7 1070.9,323.0 1073.5,322.0 1076.2,322.6 1078.8,321.7 1079.8,324.7 1081.9,327.1 1084.3,329.2 1085.7,332.0 1088.0,333.4 1090.3,335.0 1092.8,336.1 1094.5,338.6 1096.9,339.8 1099.4,341.0 1101.7,343.0 1103.8,345.1 1106.7,346.5 1108.5,349.0 1111.2,348.0 1113.0,345.6 1115.5,344.3 1117.2,341.8 1119.3,339.9 1122.0,338.8 1122.4,336.0 1123.8,333.5 1124.3,330.8 1124.7,328.0 1125.7,325.4 1126.8,322.8 1129.5,321.7 1132.3,321.2 1135.1,320.7 1138.0,320.5 1140.5,319.3 1143.2,319.7 1145.9,319.9 1148.4,318.9 1151.0,318.5 1153.5,318.0 1156.0,316.6 1158.7,317.0 1161.3,318.1 1164.1,318.5 1166.7,319.5 1169.4,320.5 1171.6,322.5 1174.6,322.4 1177.0,324.0 1179.9,324.4 1182.8,323.9 1185.5,323.0 1188.4,322.8 1191.0,322.2 1193.6,323.2 1196.1,322.2 1198.7,322.7 1201.2,321.2 1203.9,322.0 1206.4,321.1 1209.0,321.7 1211.3,322.9 1213.4,324.4 1215.9,325.2 1218.0,326.7 1219.9,328.6 1222.0,330.0 1224.1,331.8 1226.7,332.5 1228.8,334.1 1231.8,334.1 1233.8,335.9 1236.1,337.2 1238.6,338.1 1241.0,339.3 1243.4,340.4 1245.5,342.2 1248.0,343.0 1250.5,343.6 1252.1,346.1 1254.7,346.5 1257.0,347.6 1258.2,350.0 1260.1,351.8 1261.7,353.9 1262.3,356.6 1263.6,358.9 1265.5,360.8 1266.7,363.5 1267.2,366.4 1266.5,369.4 1267.3,372.2 1269.7,373.4 1272.5,373.7 1274.6,375.4 1277.0,376.6 1279.8,377.6 1282.0,379.5 1284.3,381.5 1287.3,382.0 1289.7,383.7 1291.1,386.4 1293.0,388.8 1295.8,389.4 1298.5,390.2 1300.6,392.4 1303.5,392.6 1305.7,394.7 1308.3,395.7 1311.0,396.3 1313.6,397.4 1315.6,399.1 1318.1,399.9 1320.5,400.8 1323.2,401.3 1325.9,401.8 1328.4,403.1 1331.3,402.4 1333.9,403.4 1336.7,403.5 1339.3,404.2 1339.6,407.3 1338.6,410.1 1338.9,413.2 1337.6,416.0 1335.8,418.6 1333.9,421.0 1330.7,422.2 1329.0,424.8 1326.5,426.6 1324.6,429.0 1322.4,431.0 1320.5,433.4 1319.1,436.0 1318.0,438.7 1318.1,441.8 1316.8,444.5 1315.3,447.0 1314.2,449.7 1311.8,451.5 1310.2,453.9 1310.3,457.0 1310.0,460.0 1309.3,462.9 1308.5,465.9 1307.8,468.6 1308.7,471.5 1307.1,474.1 1307.3,476.9 1306.8,479.6 1305.3,481.8 1303.4,483.8 1303.3,486.9 1301.7,489.1 1299.7,491.0 1298.2,493.3 1296.7,495.7 1294.5,497.1 1291.5,497.7 1290.5,500.6 1288.0,501.8 1286.4,504.1 1284.7,506.3 1283.1,508.6 1280.7,510.3 1279.7,513.0 1279.6,515.6 1278.5,518.1 1277.6,520.6 1278.4,523.4 1277.3,525.8 1277.4,528.5 1275.5,530.8 1275.7,533.5 1275.0,536.0 1275.8,538.7 1274.1,541.3 1275.3,544.0 1275.6,546.7 1274.1,549.3 1275.0,552.0 1272.5,553.3 1269.7,553.4 1267.1,554.6 1264.5,555.4 1261.7,556.0 1259.0,556.4 1256.5,557.5 1253.9,557.7 1251.2,556.6 1248.7,557.6 1246.2,558.2 1243.6,558.4 1241.0,558.7 1238.5,559.2 1236.4,560.8 1233.8,561.0 1231.5,562.1 1229.7,564.3 1227.0,564.4 1224.4,563.2 1221.6,563.1 1219.0,561.8 1216.4,560.9 1213.5,561.0 1211.3,559.2 1210.3,556.6 1208.4,554.5 1208.0,551.5 1205.7,549.7 1204.4,547.3 1203.6,544.6 1202.6,542.0 1201.4,539.5 1201.1,536.7 1201.0,533.8 1199.8,531.3 1198.5,528.8 1196.9,526.6 1195.0,524.5 1192.4,523.7 1190.7,521.5 1188.5,520.0 1185.8,519.3 1183.8,517.6 1180.7,517.1 1178.0,515.7 1175.0,514.9 1172.4,513.0 1169.8,513.5 1167.2,513.7 1164.5,513.6 1161.9,514.6 1159.2,514.1 1156.7,515.6 1154.0,515.0 1151.3,516.2 1148.4,516.3 1145.6,517.5 1142.7,517.6 1139.9,518.5 1137.7,520.5 1135.0,521.5 1132.1,522.2 1129.7,523.9 1126.8,524.5 1124.5,523.5 1122.3,522.2 1119.5,522.4 1117.1,521.6 1115.0,520.0 1112.1,519.7 1109.7,518.0 1106.9,517.5 1104.3,516.3 1101.6,515.3 1099.3,513.4 1097.2,511.2 1094.1,510.3 1092.3,507.9 1090.0,506.0 1087.5,505.7 1085.0,505.7 1082.5,505.2 1080.0,505.7 1077.4,505.2 1074.9,506.2 1072.4,506.2 1069.9,505.5 1067.4,506.0 1064.9,506.9 1062.1,506.6 1059.9,508.6 1057.0,507.8 1054.4,508.6 1052.1,510.1 1049.3,509.8 1046.8,510.8 1044.2,512.8 1041.2,514.0 1038.5,515.7 1037.0,518.0 1036.1,520.7 1033.3,522.1 1032.0,524.6 1031.2,527.3 1029.4,529.4 1028.6,532.1 1027.8,534.7 1026.2,537.1 1025.6,539.8 1023.9,542.2 1023.9,545.1 1022.6,547.6 1021.4,550.2 1018.8,551.8 1017.5,554.4 1015.4,556.3 1014.9,559.5 1013.4,561.8 1011.0,563.6 1008.6,564.8 1006.1,565.7 1003.5,566.5 1000.9,567.0 998.3,567.6 995.7,568.2 992.9,568.4 990.5,569.7 988.0,570.5 985.7,571.7 983.6,573.3 981.9,575.3 979.5,576.4 977.0,577.3 974.3,578.7 972.5,581.0 970.4,583.1 967.3,583.9 965.5,586.4 963.5,588.1 960.9,588.7 958.6,589.7 956.2,590.7 954.1,592.1 951.9,593.6 949.5,594.4 947.6,592.3 944.8,591.7 942.6,590.0 940.1,588.9 937.6,587.7 935.4,586.2 933.5,584.0 931.6,581.9 929.3,580.4 927.0,579.0 924.4,577.9 921.7,577.1 919.8,575.0 917.3,573.9 914.8,572.9 913.1,570.6 910.3,570.1 908.4,568.0 905.6,568.8 903.0,570.0 900.4,571.5 897.4,571.8 894.7,572.7 893.6,575.1 891.9,577.2 890.6,579.5 888.5,581.3 887.8,584.0 887.0,586.8 885.7,589.5 885.7,592.5 883.9,595.0 883.3,597.9 880.6,597.6 878.3,599.4 875.6,599.2 873.1,600.4 870.3,599.2 867.9,600.5 865.1,600.1 862.7,601.3 860.2,602.6 857.5,603.1 854.8,603.4 852.1,603.4 849.4,604.1 846.8,604.7 844.4,603.2 841.5,603.7 838.8,603.2 836.5,601.4 833.6,602.0 831.0,601.1 828.5,600.0 825.3,600.1 822.2,599.4 819.4,597.9 816.5,597.6 813.9,599.0 811.1,599.1 808.4,600.2 805.5,599.5 802.8,600.7 800.0,600.7 797.6,601.8 795.6,603.6 793.0,604.5 791.4,606.9 789.0,608.0 787.9,610.6 786.2,612.7 784.6,614.9 782.9,617.0 780.8,618.8 779.0,620.8 778.7,623.4 779.0,626.0 777.3,628.3 776.6,630.8 777.7,633.6 776.4,636.0 778.2,637.7 779.5,640.0 781.6,641.5 784.1,642.6 785.6,644.7 787.6,646.2 789.0,648.4 786.5,649.2 785.4,651.9 783.0,653.0 780.9,654.4 779.0,656.0 776.5,656.1 774.0,657.2 771.5,657.4 769.0,657.5 766.3,656.7 763.8,657.1 761.3,656.9 758.8,657.4 756.4,658.6 753.8,658.5 751.3,657.9 748.8,658.5 746.3,658.4 743.8,657.9 741.2,657.7 738.7,659.1 736.2,658.2 733.7,658.3 731.2,658.0 728.7,658.5 726.2,658.8 723.7,659.0 721.1,658.5 718.6,658.8 716.2,660.2 713.7,660.3 711.1,659.6 708.7,661.4 706.0,660.0 703.6,661.0 700.9,661.2 698.5,660.1 695.9,660.4 693.4,659.7 691.1,657.9 688.6,657.4 686.0,657.3 683.4,657.1 680.9,656.8 678.4,656.0 675.9,656.6 673.4,655.2 670.9,656.8 668.4,655.5 665.8,656.3 663.3,655.9 660.8,656.1 658.3,655.2 655.8,656.8 653.3,656.0 650.7,655.5 648.1,654.8 645.6,654.2 643.3,652.7 640.5,652.8 637.9,652.1 635.7,650.5 633.1,649.9 630.7,648.8 628.0,648.4 625.4,647.4 623.9,644.9 621.2,644.0 618.8,642.7 616.8,640.8 614.5,639.5 612.6,637.5 609.7,636.9 607.7,635.2 605.6,633.4 603.3,631.7 601.0,630.1 598.6,628.7 596.5,626.8 595.3,623.9 593.1,622.1 590.5,620.8 589.8,618.1 587.6,616.1 587.5,613.0 586.1,610.6 583.9,608.7 583.0,606.0 580.8,604.5 578.5,603.1 576.4,601.4 574.3,599.7 573.0,597.0 570.4,596.0 567.9,595.3 565.2,595.0 562.7,594.2 560.2,593.7 558.0,591.7 555.1,592.4 552.8,591.0 550.4,590.1 548.3,588.7 546.5,586.7 543.6,586.6 541.4,585.4 539.7,583.4 537.8,581.5 535.2,581.0 533.9,578.6 534.3,575.7 532.7,573.4 532.7,570.7 530.8,568.5 530.2,565.9 530.0,563.3 529.2,560.9 528.6,558.4 527.6,555.9 527.7,553.3 525.9,551.0 525.6,548.0 523.3,546.0 522.8,543.1 521.0,540.9 520.0,538.2 518.8,535.8 518.0,533.3 517.0,530.9 517.0,528.1 515.1,525.9 515.0,523.2 513.9,520.7 512.2,518.5 512.6,515.3 510.8,513.1 509.2,510.8 508.2,508.3 507.6,505.6 507.1,503.1 508.1,500.6 507.4,498.1 507.5,495.5 507.6,493.0" fill="none" stroke="#e7a9cc" stroke-width="6.5" stroke-linejoin="round"/><polygon points="507.6,490.5 508.5,488.1 507.7,485.3 509.5,483.1 509.3,480.5 509.6,477.9 510.0,475.4 511.3,473.1 514.0,472.2 515.2,469.8 517.6,468.6 519.4,466.9 520.3,464.2 522.6,462.9 524.3,460.7 523.8,457.7 524.7,455.2 526.1,452.9 527.2,450.4 527.7,447.8 528.7,445.3 531.1,443.7 532.6,441.6 532.8,438.6 534.8,436.8 535.4,434.0 536.7,431.7 538.4,429.6 540.2,427.7 542.4,426.2 543.2,423.7 544.3,421.3 546.5,419.8 547.3,417.3 549.8,416.1 550.8,413.7 552.9,412.1 553.7,409.6 555.3,407.6 558.0,406.6 560.5,405.5 562.6,403.2 565.5,402.8 567.9,401.2 570.4,400.0 572.4,401.5 575.1,401.9 577.4,402.8 579.0,405.1 581.8,405.3 583.5,407.3 586.0,408.0 588.4,409.1 590.4,410.8 593.0,411.5 594.5,414.0 597.0,415.0 599.9,413.8 602.6,412.2 606.0,412.5 608.7,410.7 611.2,411.1 613.8,410.7 616.4,411.1 618.8,412.4 621.4,411.6 623.9,412.5 626.5,412.3 629.0,413.0 631.6,411.7 634.5,411.4 637.3,411.0 640.1,410.2 642.8,409.6 645.0,407.1 648.0,407.0 649.6,404.8 651.6,402.8 652.9,400.3 654.4,398.0 657.2,398.3 660.0,398.2 662.6,396.2 665.4,396.5 668.2,396.0 671.0,396.0 672.8,393.7 673.1,390.6 675.4,388.6 677.3,386.4 677.4,383.1 679.5,381.0 682.1,380.8 684.8,381.2 687.4,381.3 690.0,380.4 693.3,379.4 696.3,377.9 697.0,375.4 697.8,372.9 700.1,371.1 700.0,368.1 701.7,366.1 702.2,363.5 704.4,361.6 705.0,359.0 705.7,356.3 706.7,353.6 706.9,350.7 709.4,348.5 709.7,345.6 709.7,342.7 711.3,340.2 712.0,337.8 713.3,335.6 715.3,333.7 716.1,331.3 716.7,328.8 717.6,326.4 720.3,326.5 722.5,325.1 724.7,323.7 727.0,322.7 729.6,322.7 732.2,322.6 734.4,321.1 736.8,320.5 739.2,319.5 741.7,319.3 744.0,318.1 746.5,317.6 748.0,315.0 748.4,312.0 749.3,309.2 749.7,306.3 751.5,303.8 753.9,302.4 756.2,301.0 758.2,299.1 760.0,297.0 762.3,295.2 764.9,293.7 766.7,291.3 769.2,289.7 771.6,288.0 774.0,287.1 775.9,285.3 777.9,283.7 780.5,283.0 782.8,282.0 785.4,281.8 787.8,282.9 790.5,282.3 792.9,283.5 795.5,283.4 798.0,283.7 800.7,282.7 803.1,284.3 805.7,284.0 808.2,284.4 810.7,284.2 813.2,284.1 815.7,283.6 818.2,284.0 820.8,284.8 823.3,284.4 825.8,283.4 828.3,284.4 830.8,284.0 830.4,286.6 831.0,289.1 831.6,291.6 833.2,293.9 833.3,296.4 833.6,298.9 833.9,301.5 833.9,304.0 833.9,306.6 835.0,309.0 837.8,308.8 840.2,310.5 843.0,310.2 845.6,311.2 848.4,310.6 851.0,311.6 853.3,310.0 854.7,307.4 856.5,305.3 859.3,304.2 860.9,301.8 863.3,300.3 865.0,298.0 866.0,295.3 868.6,293.7 869.3,290.9 871.5,289.0 872.4,286.3 874.0,284.0 876.7,283.1 879.0,281.1 881.8,280.1 884.7,279.8 887.3,278.3 890.0,277.4 892.7,276.4 894.7,274.4 896.7,272.3 898.9,270.7 901.9,270.1 903.8,268.0 905.1,270.2 906.5,272.4 908.8,273.8 910.7,275.6 911.9,277.9 913.9,279.6 915.0,282.0 914.8,284.7 916.7,286.9 916.6,289.6 917.0,292.2 918.6,294.5 918.3,297.2 919.0,299.7 918.6,302.4 920.0,304.8 922.8,305.5 925.4,306.5 927.9,308.1 930.6,309.2 933.5,309.4 936.0,310.1 938.2,311.1 940.3,312.5 942.2,314.5 944.6,315.2 947.0,316.0 947.3,318.6 946.7,321.2 947.5,323.7 948.7,326.2 949.3,328.7 949.1,331.3 948.6,333.9 950.1,336.4 949.5,339.0 948.4,341.5 947.5,344.1 946.9,346.8 945.4,349.2 944.2,351.7 943.9,354.6 942.6,357.0 945.5,357.5 948.1,359.2 951.1,359.2 954.0,359.6 956.7,358.1 959.5,356.6 962.5,355.8 965.5,355.0 968.1,355.7 970.2,357.7 972.9,358.2 975.5,358.9 977.8,360.6 980.8,360.3 982.8,362.4 985.3,363.6 988.0,364.0 988.6,361.3 989.6,358.8 990.6,356.3 992.5,354.2 992.8,351.4 995.1,349.5 995.4,346.7 995.8,343.9 997.2,341.6 998.0,339.0 999.7,336.8 1001.8,335.0 1003.8,333.3 1007.0,333.3 1009.2,331.8 1010.9,329.5 1013.2,328.2 1015.7,327.0 1018.2,326.0 1020.4,324.5 1022.6,323.0 1025.1,322.8 1027.6,322.3 1030.1,322.8 1032.6,322.0 1035.1,321.9 1037.6,322.0 1040.0,320.9 1042.5,320.8 1045.0,320.8 1047.5,321.8 1050.0,321.8 1052.7,320.9 1055.2,321.3 1057.6,323.0 1060.2,322.7 1062.8,322.8 1065.5,322.4 1068.1,321.7 1070.9,323.0 1073.5,322.0 1076.2,322.6 1078.8,321.7 1079.8,324.7 1081.9,327.1 1084.3,329.2 1085.7,332.0 1088.0,333.4 1090.3,335.0 1092.8,336.1 1094.5,338.6 1096.9,339.8 1099.4,341.0 1101.7,343.0 1103.8,345.1 1106.7,346.5 1108.5,349.0 1111.2,348.0 1113.0,345.6 1115.5,344.3 1117.2,341.8 1119.3,339.9 1122.0,338.8 1122.4,336.0 1123.8,333.5 1124.3,330.8 1124.7,328.0 1125.7,325.4 1126.8,322.8 1129.5,321.7 1132.3,321.2 1135.1,320.7 1138.0,320.5 1140.5,319.3 1143.2,319.7 1145.9,319.9 1148.4,318.9 1151.0,318.5 1153.5,318.0 1156.0,316.6 1158.7,317.0 1161.3,318.1 1164.1,318.5 1166.7,319.5 1169.4,320.5 1171.6,322.5 1174.6,322.4 1177.0,324.0 1179.9,324.4 1182.8,323.9 1185.5,323.0 1188.4,322.8 1191.0,322.2 1193.6,323.2 1196.1,322.2 1198.7,322.7 1201.2,321.2 1203.9,322.0 1206.4,321.1 1209.0,321.7 1211.3,322.9 1213.4,324.4 1215.9,325.2 1218.0,326.7 1219.9,328.6 1222.0,330.0 1224.1,331.8 1226.7,332.5 1228.8,334.1 1231.8,334.1 1233.8,335.9 1236.1,337.2 1238.6,338.1 1241.0,339.3 1243.4,340.4 1245.5,342.2 1248.0,343.0 1250.5,343.6 1252.1,346.1 1254.7,346.5 1257.0,347.6 1258.2,350.0 1260.1,351.8 1261.7,353.9 1262.3,356.6 1263.6,358.9 1265.5,360.8 1266.7,363.5 1267.2,366.4 1266.5,369.4 1267.3,372.2 1269.7,373.4 1272.5,373.7 1274.6,375.4 1277.0,376.6 1279.8,377.6 1282.0,379.5 1284.3,381.5 1287.3,382.0 1289.7,383.7 1291.1,386.4 1293.0,388.8 1295.8,389.4 1298.5,390.2 1300.6,392.4 1303.5,392.6 1305.7,394.7 1308.3,395.7 1311.0,396.3 1313.6,397.4 1315.6,399.1 1318.1,399.9 1320.5,400.8 1323.2,401.3 1325.9,401.8 1328.4,403.1 1331.3,402.4 1333.9,403.4 1336.7,403.5 1339.3,404.2 1339.6,407.3 1338.6,410.1 1338.9,413.2 1337.6,416.0 1335.8,418.6 1333.9,421.0 1330.7,422.2 1329.0,424.8 1326.5,426.6 1324.6,429.0 1322.4,431.0 1320.5,433.4 1319.1,436.0 1318.0,438.7 1318.1,441.8 1316.8,444.5 1315.3,447.0 1314.2,449.7 1311.8,451.5 1310.2,453.9 1310.3,457.0 1310.0,460.0 1309.3,462.9 1308.5,465.9 1307.8,468.6 1308.7,471.5 1307.1,474.1 1307.3,476.9 1306.8,479.6 1305.3,481.8 1303.4,483.8 1303.3,486.9 1301.7,489.1 1299.7,491.0 1298.2,493.3 1296.7,495.7 1294.5,497.1 1291.5,497.7 1290.5,500.6 1288.0,501.8 1286.4,504.1 1284.7,506.3 1283.1,508.6 1280.7,510.3 1279.7,513.0 1279.6,515.6 1278.5,518.1 1277.6,520.6 1278.4,523.4 1277.3,525.8 1277.4,528.5 1275.5,530.8 1275.7,533.5 1275.0,536.0 1275.8,538.7 1274.1,541.3 1275.3,544.0 1275.6,546.7 1274.1,549.3 1275.0,552.0 1272.5,553.3 1269.7,553.4 1267.1,554.6 1264.5,555.4 1261.7,556.0 1259.0,556.4 1256.5,557.5 1253.9,557.7 1251.2,556.6 1248.7,557.6 1246.2,558.2 1243.6,558.4 1241.0,558.7 1238.5,559.2 1236.4,560.8 1233.8,561.0 1231.5,562.1 1229.7,564.3 1227.0,564.4 1224.4,563.2 1221.6,563.1 1219.0,561.8 1216.4,560.9 1213.5,561.0 1211.3,559.2 1210.3,556.6 1208.4,554.5 1208.0,551.5 1205.7,549.7 1204.4,547.3 1203.6,544.6 1202.6,542.0 1201.4,539.5 1201.1,536.7 1201.0,533.8 1199.8,531.3 1198.5,528.8 1196.9,526.6 1195.0,524.5 1192.4,523.7 1190.7,521.5 1188.5,520.0 1185.8,519.3 1183.8,517.6 1180.7,517.1 1178.0,515.7 1175.0,514.9 1172.4,513.0 1169.8,513.5 1167.2,513.7 1164.5,513.6 1161.9,514.6 1159.2,514.1 1156.7,515.6 1154.0,515.0 1151.3,516.2 1148.4,516.3 1145.6,517.5 1142.7,517.6 1139.9,518.5 1137.7,520.5 1135.0,521.5 1132.1,522.2 1129.7,523.9 1126.8,524.5 1124.5,523.5 1122.3,522.2 1119.5,522.4 1117.1,521.6 1115.0,520.0 1112.1,519.7 1109.7,518.0 1106.9,517.5 1104.3,516.3 1101.6,515.3 1099.3,513.4 1097.2,511.2 1094.1,510.3 1092.3,507.9 1090.0,506.0 1087.5,505.7 1085.0,505.7 1082.5,505.2 1080.0,505.7 1077.4,505.2 1074.9,506.2 1072.4,506.2 1069.9,505.5 1067.4,506.0 1064.9,506.9 1062.1,506.6 1059.9,508.6 1057.0,507.8 1054.4,508.6 1052.1,510.1 1049.3,509.8 1046.8,510.8 1044.2,512.8 1041.2,514.0 1038.5,515.7 1037.0,518.0 1036.1,520.7 1033.3,522.1 1032.0,524.6 1031.2,527.3 1029.4,529.4 1028.6,532.1 1027.8,534.7 1026.2,537.1 1025.6,539.8 1023.9,542.2 1023.9,545.1 1022.6,547.6 1021.4,550.2 1018.8,551.8 1017.5,554.4 1015.4,556.3 1014.9,559.5 1013.4,561.8 1011.0,563.6 1008.6,564.8 1006.1,565.7 1003.5,566.5 1000.9,567.0 998.3,567.6 995.7,568.2 992.9,568.4 990.5,569.7 988.0,570.5 985.7,571.7 983.6,573.3 981.9,575.3 979.5,576.4 977.0,577.3 974.3,578.7 972.5,581.0 970.4,583.1 967.3,583.9 965.5,586.4 963.5,588.1 960.9,588.7 958.6,589.7 956.2,590.7 954.1,592.1 951.9,593.6 949.5,594.4 947.6,592.3 944.8,591.7 942.6,590.0 940.1,588.9 937.6,587.7 935.4,586.2 933.5,584.0 931.6,581.9 929.3,580.4 927.0,579.0 924.4,577.9 921.7,577.1 919.8,575.0 917.3,573.9 914.8,572.9 913.1,570.6 910.3,570.1 908.4,568.0 905.6,568.8 903.0,570.0 900.4,571.5 897.4,571.8 894.7,572.7 893.6,575.1 891.9,577.2 890.6,579.5 888.5,581.3 887.8,584.0 887.0,586.8 885.7,589.5 885.7,592.5 883.9,595.0 883.3,597.9 880.6,597.6 878.3,599.4 875.6,599.2 873.1,600.4 870.3,599.2 867.9,600.5 865.1,600.1 862.7,601.3 860.2,602.6 857.5,603.1 854.8,603.4 852.1,603.4 849.4,604.1 846.8,604.7 844.4,603.2 841.5,603.7 838.8,603.2 836.5,601.4 833.6,602.0 831.0,601.1 828.5,600.0 825.3,600.1 822.2,599.4 819.4,597.9 816.5,597.6 813.9,599.0 811.1,599.1 808.4,600.2 805.5,599.5 802.8,600.7 800.0,600.7 797.6,601.8 795.6,603.6 793.0,604.5 791.4,606.9 789.0,608.0 787.9,610.6 786.2,612.7 784.6,614.9 782.9,617.0 780.8,618.8 779.0,620.8 778.7,623.4 779.0,626.0 777.3,628.3 776.6,630.8 777.7,633.6 776.4,636.0 778.2,637.7 779.5,640.0 781.6,641.5 784.1,642.6 785.6,644.7 787.6,646.2 789.0,648.4 786.5,649.2 785.4,651.9 783.0,653.0 780.9,654.4 779.0,656.0 776.5,656.1 774.0,657.2 771.5,657.4 769.0,657.5 766.3,656.7 763.8,657.1 761.3,656.9 758.8,657.4 756.4,658.6 753.8,658.5 751.3,657.9 748.8,658.5 746.3,658.4 743.8,657.9 741.2,657.7 738.7,659.1 736.2,658.2 733.7,658.3 731.2,658.0 728.7,658.5 726.2,658.8 723.7,659.0 721.1,658.5 718.6,658.8 716.2,660.2 713.7,660.3 711.1,659.6 708.7,661.4 706.0,660.0 703.6,661.0 700.9,661.2 698.5,660.1 695.9,660.4 693.4,659.7 691.1,657.9 688.6,657.4 686.0,657.3 683.4,657.1 680.9,656.8 678.4,656.0 675.9,656.6 673.4,655.2 670.9,656.8 668.4,655.5 665.8,656.3 663.3,655.9 660.8,656.1 658.3,655.2 655.8,656.8 653.3,656.0 650.7,655.5 648.1,654.8 645.6,654.2 643.3,652.7 640.5,652.8 637.9,652.1 635.7,650.5 633.1,649.9 630.7,648.8 628.0,648.4 625.4,647.4 623.9,644.9 621.2,644.0 618.8,642.7 616.8,640.8 614.5,639.5 612.6,637.5 609.7,636.9 607.7,635.2 605.6,633.4 603.3,631.7 601.0,630.1 598.6,628.7 596.5,626.8 595.3,623.9 593.1,622.1 590.5,620.8 589.8,618.1 587.6,616.1 587.5,613.0 586.1,610.6 583.9,608.7 583.0,606.0 580.8,604.5 578.5,603.1 576.4,601.4 574.3,599.7 573.0,597.0 570.4,596.0 567.9,595.3 565.2,595.0 562.7,594.2 560.2,593.7 558.0,591.7 555.1,592.4 552.8,591.0 550.4,590.1 548.3,588.7 546.5,586.7 543.6,586.6 541.4,585.4 539.7,583.4 537.8,581.5 535.2,581.0 533.9,578.6 534.3,575.7 532.7,573.4 532.7,570.7 530.8,568.5 530.2,565.9 530.0,563.3 529.2,560.9 528.6,558.4 527.6,555.9 527.7,553.3 525.9,551.0 525.6,548.0 523.3,546.0 522.8,543.1 521.0,540.9 520.0,538.2 518.8,535.8 518.0,533.3 517.0,530.9 517.0,528.1 515.1,525.9 515.0,523.2 513.9,520.7 512.2,518.5 512.6,515.3 510.8,513.1 509.2,510.8 508.2,508.3 507.6,505.6 507.1,503.1 508.1,500.6 507.4,498.1 507.5,495.5 507.6,493.0" fill="none" stroke="#c5609a" stroke-width="3.8" stroke-linejoin="round"/></g>
<g font-family="Liberation Sans" font-weight="bold" font-size="16" text-anchor="middle" fill="#cf6ca5" stroke="#fff" stroke-width="4.5" stroke-linejoin="round" paint-order="stroke" stroke-opacity="0.8" letter-spacing="0.2">
<text x="556.5" y="519.5">Bratislavský</text>
<text x="556.5" y="538.5">kraj</text>
<text x="625.4" y="490.8">Trnavský</text>
<text x="625.4" y="509.8">kraj</text>
<text x="715.5" y="424">Trenčiansky</text>
<text x="715.5" y="443">kraj</text>
<text x="866" y="360.7">Žilinský</text>
<text x="866" y="379.7">kraj</text>
<text x="890" y="506.5">Banskobystrický</text>
<text x="890" y="525.5">kraj</text>
<text x="715.3" y="568.8">Nitriansky</text>
<text x="715.3" y="587.8">kraj</text>
<text x="1143.9" y="388.5">Prešovský</text>
<text x="1143.9" y="407.5">kraj</text>
<text x="1113.6" y="476.5">Košický</text>
<text x="1113.6" y="495.5">kraj</text>
</g>
<g><g fill="#e2876f" fill-opacity="0.92" stroke="#2a1c16" stroke-width="0.9" stroke-linejoin="round">
<polygon points="565.0,402.6 567.9,403.8 570.9,404.0 574.0,403.7 577.0,404.3 579.6,405.9 581.6,408.3 584.0,410.1 585.8,412.8 588.8,414.0 590.8,416.3 585.6,418.0 582.2,416.9 578.8,415.6 575.3,414.6 572.9,412.4 569.6,411.7 566.8,410.3 565.4,406.6"/>
<polygon points="556.5,409.4 559.6,408.3 562.9,409.6 566.0,408.6 565.8,411.7 567.3,414.5 567.2,417.5 567.6,420.5 565.6,423.2 563.4,425.7 562.2,422.6 561.0,419.6 559.0,417.0 556.9,413.5"/>
<polygon points="541.0,430.0 544.5,428.8 547.4,426.8 549.7,424.0 553.3,423.6 556.7,424.2 560.0,425.7 559.0,429.1 559.0,432.5 558.9,435.9 559.0,439.4 555.4,440.1 551.6,439.7 548.0,440.2 546.4,437.5 544.6,435.0 542.1,433.0"/>
<polygon points="551.4,449.7 553.9,446.7 557.2,444.6 560.0,442.0 561.4,445.0 562.1,448.3 563.4,451.4 566.4,451.2 569.2,449.6 572.2,449.1 575.3,449.7 577.3,453.6 580.5,456.5 578.0,459.2 575.2,461.6 572.0,463.4 569.1,461.8 565.8,462.4 562.8,461.1 559.6,461.4 556.5,460.8 555.5,457.9 553.3,455.6 552.9,452.4"/>
<polygon points="581.3,434.2 583.7,436.1 586.0,438.2 587.3,441.0 590.3,441.0 593.4,440.7 596.4,440.8 599.3,442.0 599.8,445.1 599.0,448.4 600.2,451.4 596.0,453.0 597.8,455.8 600.0,458.1 602.7,460.0 603.3,463.7 602.6,467.3 602.7,471.0 599.1,470.2 595.9,468.5 594.1,465.3 592.8,461.9 592.5,458.2 589.8,456.4 588.6,453.0 585.6,451.4 585.4,447.8 584.5,444.4 583.7,440.9 581.5,437.8"/>
<polygon points="662.7,473.6 666.0,474.7 669.5,475.3 670.8,479.0 672.4,482.5 674.7,485.6 670.8,486.4 667.8,489.0 666.6,485.4 664.4,482.2 664.5,477.7"/>
<polygon points="595.9,519.9 599.5,519.7 602.7,518.2 604.5,521.5 607.3,523.8 609.6,526.7 607.7,529.4 605.8,532.1 602.7,533.6 599.5,530.7 595.9,528.4 595.8,524.1"/>
<polygon points="584.3,565.4 586.9,563.7 589.6,561.9 592.7,561.2 594.1,563.9 596.9,565.7 597.8,568.8 601.2,569.7 604.6,570.5 601.2,573.8 596.1,575.5 593.1,574.1 590.0,573.0 587.7,570.5 586.0,567.9"/>
<polygon points="596.1,592.4 598.5,589.2 602.5,587.5 604.6,584.0 607.1,581.6 610.7,581.0 613.0,578.1 616.4,577.2 618.0,580.6 615.8,583.1 612.2,584.0 610.8,587.4 607.9,589.0 604.4,590.8 601.2,593.2"/>
<polygon points="607.9,595.8 610.4,593.2 612.8,590.5 614.9,587.6 618.0,585.6 621.4,584.7 624.0,582.3 624.8,587.3 623.5,590.5 620.6,592.4 617.8,594.4 616.4,597.5 615.5,600.5 612.9,602.4 611.3,605.0 608.8,600.8"/>
<polygon points="609.6,553.6 612.6,552.5 615.4,550.9 618.5,549.9 621.4,548.5 624.3,549.7 626.5,552.0 624.8,557.0 620.6,556.3 616.4,557.0 611.3,557.0"/>
<polygon points="648.4,567.0 650.9,565.0 653.5,563.4 656.5,562.1 658.5,559.5 662.7,563.7 660.8,567.1 658.8,570.4 656.8,573.8 655.5,576.6 655.2,579.7 653.5,582.3 650.0,578.9 650.5,575.6 651.0,572.2"/>
<polygon points="619.7,622.7 623.1,620.6 626.5,618.5 629.6,621.7 633.2,624.4 635.0,627.2 637.4,629.5 635.9,632.5 633.2,634.6 633.4,638.2 631.5,641.3 628.0,639.9 624.8,638.0 623.3,635.1 623.4,631.7 622.1,628.7 620.9,625.7"/>
<polygon points="648.4,604.2 652.0,605.0 655.0,607.1 658.4,608.4 661.9,609.3 664.7,611.0 668.2,610.6 671.1,611.7 674.2,612.6 677.0,614.3 675.4,617.2 672.4,619.0 671.3,622.4 668.6,624.4 667.7,627.8 667.0,631.2 663.9,630.7 661.2,629.4 658.5,627.8 656.1,625.1 654.6,621.7 651.8,619.4 651.4,616.3 649.4,613.6 649.3,610.4 648.3,607.4"/>
<polygon points="675.4,626.1 678.2,624.3 681.6,624.5 684.6,623.4 687.9,623.0 690.6,621.1 693.8,622.3 696.8,624.0 699.2,626.6 702.4,627.8 700.4,631.0 699.4,634.7 697.3,637.9 693.3,638.1 689.5,639.3 685.5,639.6 685.2,635.3 683.8,631.2 680.6,630.2 677.9,628.3"/>
<polygon points="663.6,644.7 666.7,644.3 668.5,641.0 671.9,641.1 674.0,638.6 677.0,637.9 680.1,639.8 683.8,639.6 687.0,640.9 688.3,644.4 691.1,646.2 693.9,648.0 692.3,650.7 691.2,653.6 692.0,657.0 690.6,659.8 685.5,658.2 682.5,657.4 680.0,655.5 677.0,654.8 673.1,655.3 669.2,655.3 665.3,654.8 664.1,651.5 664.9,647.9"/>
<polygon points="683.8,578.9 686.9,578.6 690.0,578.9 693.1,578.7 696.2,578.8 699.3,578.7 702.4,578.9 702.3,582.3 703.5,585.6 703.2,589.0 699.4,589.8 696.2,592.3 692.2,592.4 688.6,590.2 685.5,587.3 684.3,583.2"/>
<polygon points="694.0,594.0 698.2,594.9 702.4,595.8 700.6,599.0 699.2,602.2 699.0,605.9 695.8,608.0 692.2,609.3 688.1,607.9 683.8,607.6 686.2,605.1 688.2,602.4 689.2,598.9 691.1,596.1"/>
<polygon points="709.1,551.9 712.2,549.6 716.0,548.9 719.2,546.9 721.2,549.5 723.2,552.2 724.3,555.3 721.8,557.9 719.2,560.4 715.8,559.6 712.5,558.7 710.8,555.3"/>
<polygon points="673.7,535.0 677.1,534.6 680.4,533.4 683.2,535.3 686.5,536.1 689.5,537.4 692.7,538.5 695.6,540.1 698.6,542.3 702.5,541.9 705.7,543.5 704.7,547.2 702.4,550.2 698.9,550.2 695.5,549.6 692.2,548.5 688.9,549.4 685.6,550.1 682.1,550.2 679.3,548.6 677.4,546.0 675.4,543.5 674.1,539.3"/>
<polygon points="717.5,609.3 720.7,609.8 723.8,608.9 727.0,608.6 730.0,607.6 730.0,612.6 726.4,611.7 722.8,613.1 719.2,612.6"/>
<polygon points="559.0,580.6 563.1,579.0 567.5,578.9 570.1,581.0 572.9,582.6 575.9,584.0 577.6,589.0 575.1,592.4 572.5,595.8 569.3,595.1 566.9,592.7 563.9,591.4 560.7,590.7 560.2,587.3 559.6,584.0"/>
<polygon points="555.6,563.7 558.3,565.5 561.8,564.6 564.8,565.2 567.5,567.1 567.3,570.3 569.8,572.8 570.8,575.7 570.8,578.9 567.4,579.4 564.1,580.6 561.6,578.6 560.2,575.5 557.3,573.8 556.2,570.5 557.2,566.9"/>
<polygon points="705.7,646.4 710.8,644.7 712.7,647.9 715.9,649.7 712.3,649.6 709.1,651.4 708.1,648.4"/>
<polygon points="624.8,530.0 630.0,530.0 629.2,533.3 628.6,536.6 629.0,540.0 625.0,538.0 624.2,534.0"/>
<polygon points="817.8,523.4 820.5,522.0 823.8,522.0 826.2,520.0 828.8,522.3 832.4,522.8 834.6,525.7 838.0,526.7 837.2,530.1 837.9,533.7 836.4,536.9 832.9,539.0 831.1,542.9 827.9,545.3 824.8,542.8 822.2,539.8 819.5,536.9 819.3,533.5 817.8,530.3 818.6,526.7"/>
<polygon points="858.3,557.1 863.3,556.3 864.5,559.6 867.3,562.1 868.4,565.5 870.7,568.6 871.8,572.3 869.1,573.8 866.7,575.6 863.4,572.8 861.7,568.9 861.4,565.8 860.6,562.8 858.2,560.3"/>
<polygon points="885.3,579.0 887.2,575.8 888.6,572.3 890.3,577.3 889.0,581.5 888.6,585.8 887.9,582.0"/>
<polygon points="907.2,543.6 911.2,541.9 915.6,541.9 919.8,541.1 924.0,541.9 923.3,545.8 923.6,549.9 922.4,553.7 919.1,555.1 915.6,554.9 912.2,555.4 909.6,553.8 907.2,552.0 906.6,547.8"/>
<polygon points="927.4,526.7 930.3,525.1 932.9,523.1 935.9,521.7 936.9,525.4 939.2,528.4 938.8,532.7 937.5,536.9 934.1,536.9 930.8,536.9 929.3,533.6 928.4,530.2"/>
<polygon points="930.8,563.8 933.4,561.4 935.9,558.8 938.8,561.9 940.9,565.5 938.0,568.1 934.2,568.9 932.8,566.2"/>
<polygon points="753.7,560.5 757.6,558.2 762.2,558.0 766.1,560.3 768.9,563.8 772.3,564.4 775.6,565.5 776.1,569.0 777.3,572.3 773.1,573.1 768.9,572.3 765.7,571.3 763.0,569.4 760.5,567.2 758.6,564.6 755.4,563.3"/>
<polygon points="743.6,562.2 748.7,560.5 750.2,563.7 750.5,567.1 750.4,570.6 745.3,572.3 744.3,569.0 745.0,565.4"/>
<polygon points="745.3,601.0 747.9,599.4 750.5,597.8 753.3,596.5 755.4,594.2 758.0,592.6 761.1,592.2 763.8,590.8 762.3,593.7 761.6,596.7 762.5,600.1 760.8,602.9 760.5,606.0 757.5,604.8 754.4,604.0 751.7,602.0 748.4,601.9"/>
<polygon points="720.0,607.7 723.0,607.6 726.1,607.5 729.2,607.9 732.2,607.9 735.2,606.8 733.5,611.9 730.1,611.3 726.8,612.6 723.3,611.5 720.0,612.7"/>
<polygon points="795.9,594.2 799.8,593.7 803.8,593.6 807.7,592.5 811.2,591.9 814.7,591.0 817.8,589.1 818.3,592.5 817.8,595.9 814.6,597.2 812.7,600.1 809.7,600.0 806.7,599.6 803.6,599.5 800.6,599.2 797.6,600.1 796.3,597.3"/>
<polygon points="795.9,574.0 799.2,573.6 802.6,574.0 806.0,577.3 802.5,576.7 799.3,578.2"/>
<polygon points="750.4,533.5 753.4,532.5 755.6,529.9 758.8,529.3 760.5,531.8 757.5,534.4 754.3,536.9 752.0,540.2 751.9,536.7"/>
<polygon points="726.7,520.0 730.0,520.9 733.5,521.0 736.9,521.7 738.1,525.3 740.2,528.4 737.0,529.9 733.4,529.1 730.1,530.1 728.7,526.8 728.1,523.3"/>
<polygon points="720.0,547.0 723.4,548.7 724.0,552.6 723.7,556.6 723.4,560.5 720.0,560.5 719.3,557.1 719.8,553.8 720.1,550.4"/>
<polygon points="951.8,552.6 953.1,549.5 955.2,546.9 954.9,543.1 956.7,540.3 958.5,537.5 957.7,535.8 960.4,533.9 961.8,530.9 962.7,527.7 965.3,525.6 966.9,528.4 967.1,531.9 969.2,534.5 970.4,537.5 974.6,536.5 978.8,537.5 980.5,540.8 977.1,541.7 975.0,544.9 971.5,545.6 968.7,547.6 965.7,548.2 962.8,549.4 959.6,549.2 956.9,551.0"/>
<polygon points="1004.9,530.7 1008.5,529.9 1012.1,529.0 1015.9,529.0 1018.8,527.6 1022.2,528.5 1025.1,527.1 1028.2,526.7 1031.1,525.6 1032.7,529.0 1029.7,530.6 1027.0,532.6 1023.7,533.7 1021.0,535.8 1018.1,536.7 1015.1,537.4 1012.5,539.1 1009.2,538.0 1005.8,537.5 1006.1,534.0"/>
<polygon points="1128.9,490.2 1132.3,489.7 1135.6,488.6 1138.7,490.7 1140.5,493.9 1142.4,497.0 1144.1,500.2 1144.1,503.9 1145.7,507.1 1148.9,509.1 1152.1,511.3 1155.9,512.2 1154.2,515.5 1151.1,515.0 1148.7,513.0 1145.6,512.4 1143.1,510.7 1140.7,508.8 1137.9,506.5 1134.4,505.1 1132.2,502.0 1130.7,499.2 1130.9,496.0 1129.8,493.1"/>
<polygon points="1162.6,503.7 1165.7,500.4 1170.0,498.7 1169.6,501.7 1170.8,504.7 1170.1,507.8 1169.6,510.8 1170.0,513.8 1167.6,510.8 1164.3,508.8"/>
<polygon points="758.8,411.8 763.8,410.1 766.2,412.8 768.3,415.8 770.6,418.5 774.2,418.4 777.2,416.2 780.6,415.4 784.1,415.2 786.0,419.2 785.8,423.6 784.8,426.6 782.4,428.7 779.0,429.8 775.6,428.7 773.3,425.6 772.3,421.9 768.9,420.2 765.5,418.5 764.0,415.5 761.3,413.7"/>
<polygon points="747.0,438.8 750.3,437.7 753.7,437.6 757.1,437.1 758.8,440.2 758.8,443.8 754.7,445.0 750.4,445.5 747.9,442.6"/>
<polygon points="760.5,430.4 763.7,431.8 767.3,431.2 770.6,432.0 772.7,434.4 774.5,437.1 777.3,438.8 778.7,442.0 779.0,445.6 779.7,449.0 780.7,452.3 777.1,452.2 774.0,454.0 770.1,453.2 767.2,450.6 763.9,447.8 762.2,443.8 761.4,440.5 762.1,437.0 761.7,433.7"/>
<polygon points="748.7,470.8 752.2,471.6 755.5,472.9 758.8,474.2 761.1,476.4 763.5,478.4 765.5,480.9 763.8,486.0 759.6,485.1 755.4,484.3 752.7,481.1 750.4,477.6 748.6,474.4"/>
<polygon points="762.2,464.1 766.4,463.4 770.6,462.4 772.5,465.5 772.4,469.3 774.0,472.5 768.9,474.2 766.9,471.9 766.4,468.6 763.3,467.0"/>
<polygon points="775.6,462.4 778.7,460.4 782.3,460.0 785.8,459.0 787.8,456.2 791.2,455.2 793.4,452.7 795.9,450.6 798.5,453.5 799.3,457.3 797.7,460.7 794.2,462.4 792.8,465.9 789.5,467.8 787.5,470.8 784.8,472.3 782.4,474.2 779.0,472.5 775.6,470.8 776.4,466.6"/>
<polygon points="755.4,504.6 759.3,504.3 763.2,503.5 767.2,503.7 769.3,505.9 772.1,507.2 774.0,509.6 773.2,512.6 771.3,515.2 772.3,518.7 770.6,521.4 767.2,521.8 763.8,521.4 760.6,519.4 756.7,518.9 753.7,516.4 753.5,512.4 755.5,508.6"/>
<polygon points="775.6,484.3 778.7,484.2 781.5,485.2 784.6,484.8 787.5,486.0 787.9,489.1 790.3,491.4 790.8,494.4 794.2,494.5 797.5,495.3 800.9,494.2 804.3,494.4 807.4,493.6 809.6,491.5 811.9,489.5 814.4,487.7 816.7,485.4 818.8,482.8 820.5,479.9 822.9,477.6 821.5,480.5 822.4,483.7 820.8,486.5 820.8,489.6 821.2,492.7 819.3,495.5 816.5,497.1 813.6,498.7 810.6,500.1 809.0,503.2 806.0,504.6 807.0,508.0 808.8,511.2 809.2,514.9 811.1,518.0 807.3,518.9 804.0,520.9 800.9,523.1 797.1,521.1 794.2,518.0 791.5,516.2 788.2,515.6 785.6,513.6 782.4,513.0 779.8,510.5 777.3,507.9 778.7,504.7 779.5,501.3 779.0,497.8 778.8,494.3 778.0,490.9 777.1,487.5"/>
<polygon points="723.4,499.5 727.3,500.6 731.3,498.5 735.2,499.5 735.0,502.6 735.9,505.6 735.3,508.7 736.8,511.6 736.9,514.7 735.2,518.0 736.0,521.8 739.2,524.5 740.2,528.2 736.7,527.7 733.5,529.5 730.1,529.8 728.6,527.0 728.1,524.0 727.8,520.9 726.7,518.0 725.1,515.1 725.4,511.9 724.0,508.9 723.6,505.8 723.2,502.7"/>
<polygon points="1029.4,377.2 1032.5,377.1 1035.6,377.4 1038.5,376.1 1041.6,376.3 1044.6,375.5 1047.8,376.9 1051.3,376.4 1054.6,377.3 1058.0,377.2 1061.2,378.8 1064.6,380.2 1068.2,380.6 1066.6,383.6 1064.2,385.6 1061.4,387.3 1057.9,386.6 1054.6,387.4 1051.4,388.8 1047.9,388.1 1044.6,389.0 1040.9,388.0 1037.7,385.9 1034.4,384.0 1031.8,380.7"/>
<polygon points="1047.9,400.8 1050.6,398.6 1051.3,394.9 1054.1,392.8 1056.0,390.0 1058.0,387.3 1061.1,386.5 1063.0,383.7 1065.6,382.2 1068.2,380.6 1067.7,384.0 1067.8,387.4 1066.3,390.6 1066.0,394.0 1066.5,397.5 1063.6,399.6 1061.4,402.5 1061.9,406.0 1059.5,409.1 1060.0,412.6 1059.7,416.0 1055.5,415.8 1051.3,416.0 1050.7,412.9 1050.0,409.9 1050.2,406.7 1048.1,403.9"/>
<polygon points="1046.2,340.1 1048.7,342.3 1048.8,346.0 1052.0,347.8 1052.6,351.2 1054.7,353.6 1057.2,355.4 1060.1,356.4 1063.1,357.0 1064.0,360.3 1064.3,363.7 1063.9,367.2 1064.8,370.5 1061.6,368.7 1058.0,368.8 1056.2,366.0 1053.9,363.7 1051.5,361.4 1049.6,358.7 1048.8,355.6 1048.9,352.4 1047.7,349.4 1047.4,346.3 1047.1,343.1"/>
<polygon points="1068.2,343.5 1072.1,342.4 1075.0,339.7 1078.3,337.6 1078.9,341.2 1079.4,344.9 1080.0,348.5 1077.1,349.7 1074.9,351.9 1073.5,348.4 1070.3,346.4"/>
<polygon points="1152.5,340.1 1154.5,337.6 1157.7,336.9 1159.5,334.2 1162.6,333.4 1165.1,335.9 1167.7,338.4 1166.1,342.2 1167.0,346.3 1166.0,350.2 1163.8,352.7 1163.2,356.0 1161.4,358.7 1160.9,362.0 1157.2,361.9 1154.3,359.3 1150.8,358.7 1151.1,355.6 1151.6,352.5 1151.4,349.4 1153.0,346.4 1152.6,343.2"/>
<polygon points="1130.6,454.8 1133.3,456.1 1136.4,456.5 1139.0,458.2 1139.3,462.2 1139.2,466.2 1140.7,470.0 1137.3,471.0 1134.0,470.1 1130.6,470.0 1130.3,467.0 1130.1,463.9 1131.4,460.9 1131.6,457.8"/>
<polygon points="1150.8,458.2 1154.4,458.7 1157.2,461.3 1160.9,461.5 1162.4,464.9 1166.3,466.5 1167.7,470.0 1164.7,469.2 1161.6,469.5 1158.6,469.6 1155.5,471.1 1152.5,470.0 1152.6,466.0 1151.1,462.2"/>
<polygon points="1289.5,400.0 1292.7,399.6 1295.8,400.2 1299.0,399.5 1302.1,400.7 1305.2,399.9 1308.4,399.6 1311.5,400.9 1314.7,400.0 1312.3,402.2 1310.2,404.7 1308.9,407.8 1306.0,409.0 1303.8,411.5 1300.9,412.6 1298.3,414.5 1295.3,415.5 1293.7,418.2 1293.3,421.4 1296.2,424.8 1297.2,429.1 1294.0,428.5 1290.7,429.8 1287.5,429.1 1287.9,433.0 1287.5,436.9 1283.6,434.9 1283.5,431.8 1283.2,428.7 1282.5,425.6 1282.2,422.5 1281.7,419.4 1278.2,417.4 1274.7,415.6 1271.0,414.0 1274.4,411.9 1278.2,410.9 1282.0,410.0 1283.0,406.9 1285.9,405.1 1287.3,402.2"/>
<polygon points="1200.2,479.6 1203.6,477.6 1207.0,475.7 1209.2,478.4 1211.0,481.3 1213.8,483.5 1212.1,486.3 1210.2,488.9 1207.9,491.2 1205.3,488.0 1202.1,485.4 1201.1,482.5"/>
<polygon points="1209.9,491.2 1212.5,493.1 1215.9,492.5 1218.3,495.1 1221.5,495.1 1223.0,497.8 1223.5,500.9 1223.6,504.2 1225.4,506.8 1221.6,508.1 1217.6,508.7 1215.0,506.8 1212.0,505.4 1209.9,502.9 1210.9,499.0 1211.0,495.1"/>
<polygon points="1217.6,514.5 1221.5,514.4 1225.4,514.5 1227.3,518.2 1228.3,522.3 1224.7,522.4 1221.5,524.2 1220.2,521.0 1218.1,518.1"/>
<polygon points="1260.3,516.5 1264.2,514.5 1268.1,512.6 1268.8,516.5 1270.0,520.3 1268.2,523.0 1265.4,524.9 1264.2,528.1 1259.4,526.2 1258.6,522.9 1261.1,519.8"/>
<polygon points="1243.8,541.7 1246.7,540.9 1249.6,540.0 1252.6,539.8 1253.9,543.1 1256.5,545.6 1254.0,547.6 1251.3,549.4 1248.7,551.4 1247.2,548.1 1245.1,545.1"/>
<polygon points="1260.3,547.5 1264.0,545.6 1268.1,545.6 1272.0,547.5 1269.2,549.6 1266.2,551.4 1262.9,549.9"/>
<polygon points="1279.8,473.8 1283.6,475.7 1283.6,481.5 1279.8,481.5 1278.9,477.6"/>
<polygon points="1235.1,466.0 1239.0,466.2 1243.0,466.3 1246.8,465.0 1246.7,469.5 1247.7,473.8 1244.6,474.5 1242.8,477.5 1239.7,478.0 1237.1,479.6 1236.5,476.2 1235.6,472.9 1236.4,469.3"/>
<polygon points="1206.0,438.8 1210.0,438.7 1213.8,437.8 1215.6,440.7 1216.4,443.9 1216.4,447.4 1217.6,450.5 1213.8,451.8 1209.9,452.4 1209.8,448.7 1208.6,445.4 1207.7,442.0"/>
<polygon points="1151.6,458.2 1155.3,460.1 1159.4,460.2 1163.5,461.7 1167.2,464.1 1167.3,467.3 1168.0,470.6 1167.2,473.8 1163.3,472.7 1159.4,473.8 1156.3,472.4 1154.4,469.6 1151.6,467.9 1151.8,464.7 1152.1,461.4"/>
<polygon points="1161.4,504.8 1163.6,502.5 1166.4,501.1 1168.0,498.1 1171.1,497.0 1171.7,500.2 1173.6,502.8 1174.8,505.7 1177.7,507.6 1178.8,510.6 1174.9,512.6 1171.8,512.3 1168.8,511.6 1166.0,510.3 1163.3,508.7"/>
<polygon points="1140.0,493.2 1142.2,496.1 1142.4,499.7 1143.9,502.9 1145.7,505.7 1149.0,506.5 1151.1,508.8 1153.6,510.6 1155.5,514.5 1151.6,514.8 1147.8,514.0 1143.9,514.5 1142.3,511.4 1140.0,508.7 1140.2,505.6 1141.0,502.5 1140.4,499.4 1139.7,496.3"/>
<polygon points="1213.5,359.4 1216.5,358.9 1219.6,359.4 1222.6,359.4 1222.6,363.9 1219.2,364.3 1215.8,365.0 1214.6,362.2"/>
<polygon points="1204.4,370.8 1207.2,372.3 1210.5,372.3 1213.5,373.0 1216.5,376.0 1218.0,379.9 1215.2,381.5 1212.1,381.8 1209.0,382.2 1207.3,379.3 1204.4,377.6 1205.4,374.2"/>
<polygon points="1240.9,352.5 1243.7,351.2 1246.5,350.1 1249.1,348.1 1252.3,347.9 1254.1,351.3 1256.6,354.3 1259.2,357.1 1255.9,359.1 1253.1,361.7 1250.0,363.9 1246.7,362.4 1243.2,361.6 1243.2,358.4 1242.1,355.4"/>
<polygon points="1288.9,389.0 1292.2,389.0 1295.3,390.6 1298.7,389.3 1302.0,389.9 1305.2,390.5 1308.5,390.4 1311.7,391.3 1314.4,394.5 1316.3,398.2 1313.0,399.9 1310.6,402.8 1308.2,405.7 1304.8,407.3 1301.9,409.7 1300.7,413.4 1297.5,415.5 1295.7,418.7 1295.0,422.2 1292.3,424.7 1291.1,427.9 1290.2,425.0 1289.1,422.1 1288.7,418.9 1286.6,416.4 1287.4,413.4 1286.7,410.3 1287.3,407.3 1286.7,404.1 1288.2,401.2 1287.9,398.1 1287.5,395.0 1288.9,392.1"/>
<polygon points="831.3,356.1 834.5,357.6 838.0,357.8 839.7,360.3 841.2,362.9 841.4,366.2 844.2,368.2 844.8,371.3 842.6,373.6 840.2,375.7 838.0,378.0 837.0,381.3 836.4,384.8 833.4,383.7 831.3,381.4 831.6,377.5 831.3,373.5 831.3,369.6 832.1,366.2 830.3,362.9 832.3,359.5"/>
<polygon points="860.0,346.0 865.0,347.7 865.2,352.0 866.7,356.1 861.7,356.1 860.3,352.9 861.5,349.2"/>
<polygon points="861.7,374.7 865.7,373.1 870.1,373.0 871.4,375.9 872.8,378.8 873.6,381.9 873.7,385.3 875.1,388.2 876.4,392.0 876.6,396.0 876.8,400.0 873.7,400.7 870.6,399.0 867.5,400.0 864.5,400.4 861.4,400.2 858.3,400.0 859.4,396.9 858.9,393.6 860.3,390.6 859.7,387.3 859.9,384.1 861.7,381.1 860.3,377.7"/>
<polygon points="629.8,412.6 632.8,411.8 635.9,412.1 636.8,415.0 637.5,418.1 639.0,420.8 639.6,425.3 642.1,429.0 641.1,434.1 637.4,433.4 633.9,432.1 632.4,428.5 630.8,424.9 630.3,421.8 630.4,418.7 630.8,415.6"/>
<polygon points="642.1,411.6 645.2,409.3 648.3,406.9 650.1,409.8 651.6,412.8 653.4,415.7 655.3,418.3 656.2,421.6 658.5,423.9 656.5,427.0 653.4,429.0 650.7,430.5 647.7,431.2 645.2,433.1 645.1,430.0 645.4,426.9 644.1,423.9 643.1,420.4 643.1,416.7"/>
<polygon points="650.3,430.0 653.8,428.7 657.5,429.0 660.6,426.9 663.7,424.9 667.8,425.4 671.9,425.9 673.8,428.8 677.0,430.0 674.9,432.2 673.9,435.2 669.8,434.1 670.2,437.9 671.9,441.3 666.7,442.4 663.7,444.4 660.6,444.0 657.5,444.4 655.4,439.3 653.0,436.6 652.8,432.7"/>
<polygon points="644.1,445.4 646.7,443.3 649.3,441.3 652.0,443.5 655.4,444.4 658.9,445.1 661.6,447.5 661.9,450.6 661.6,453.7 659.0,456.6 655.4,457.8 651.3,460.8 648.5,458.0 645.2,455.7 642.6,453.0 641.1,449.5"/>
<polygon points="655.4,457.8 659.5,459.8 658.8,463.1 658.3,466.5 660.0,470.0 659.9,473.3 657.6,476.6 658.5,480.0 654.9,480.4 651.3,480.7 647.7,480.0 644.1,480.0 644.8,476.1 645.2,472.1 647.7,469.7 649.5,466.8 651.3,463.9 653.4,460.9"/>
<polygon points="634.9,461.9 637.0,459.3 640.0,457.8 640.8,462.0 642.1,466.0 640.1,468.7 637.0,470.1 636.8,465.8"/>
<polygon points="663.7,405.4 666.3,408.4 669.8,410.5 672.7,413.4 673.2,417.7 675.9,420.8 673.9,421.8 670.1,419.6 666.7,416.7 664.7,413.2 663.8,409.4"/>
<polygon points="669.8,396.2 674.0,395.9 678.0,397.2 682.1,398.2 685.4,398.6 688.3,400.3 689.0,403.4 691.0,405.8 692.4,408.5 695.3,410.7 697.5,413.6 700.4,415.9 702.7,418.7 698.6,421.8 695.5,420.2 692.4,418.7 687.3,420.8 686.6,425.0 685.2,429.0 688.3,433.1 685.5,430.7 682.1,429.0 679.7,426.7 678.4,423.7 677.0,420.8 675.5,417.9 675.5,414.5 674.6,411.3 672.9,408.5 671.9,405.4 672.0,402.1 669.6,399.5"/>
<polygon points="692.4,413.6 695.4,411.8 698.6,410.5 703.7,412.6 703.9,416.3 702.7,419.8 699.5,419.4 696.5,420.8 694.7,417.1"/>
<polygon points="702.7,430.0 705.9,429.6 708.8,431.1 712.9,435.2 708.8,437.2 704.7,435.2"/>
<polygon points="712.9,427.0 716.3,426.3 719.8,426.1 723.2,427.0 725.3,430.0 722.2,430.0 719.1,430.5 716.0,431.1"/>
<polygon points="711.9,443.4 715.0,442.5 718.1,443.4 722.2,447.5 722.9,450.6 722.2,453.7 719.1,453.3 716.0,453.7 712.9,449.5 711.7,446.6"/>
<polygon points="727.3,442.4 730.4,442.7 733.5,443.4 736.7,445.6 740.0,447.5 739.9,451.6 740.0,455.7 736.2,455.5 732.4,455.7 731.5,452.3 729.4,449.5 729.3,445.7"/>
<polygon points="715.0,456.7 720.1,456.7 719.7,459.9 721.1,462.9 716.0,463.9 715.5,460.3"/>
<polygon points="717.0,468.0 720.8,467.1 724.3,465.2 728.3,465.0 732.1,466.1 735.5,468.0 735.2,471.0 735.5,474.2 734.0,477.0 733.5,480.0 730.1,479.0 726.6,480.2 723.2,479.3 719.8,479.0 716.3,481.1 712.9,480.0 712.9,476.7 714.8,474.0 716.9,471.3"/>
<polygon points="699.6,470.1 702.7,470.7 705.7,470.1 706.0,473.4 705.3,476.8 706.8,480.0 702.7,479.9 698.6,480.0 699.9,476.8 698.5,473.3"/>
<polygon points="607.2,431.1 610.7,429.8 614.4,429.0 614.6,432.1 616.7,434.6 618.1,437.3 618.5,440.3 615.3,440.1 612.3,441.3 609.2,437.2 608.7,434.0"/>
<polygon points="611.3,441.3 614.9,440.6 618.5,441.3 618.3,445.0 619.5,448.5 621.8,452.0 623.6,455.7 620.2,456.6 617.5,458.8 614.3,455.7 610.3,453.7 610.7,450.6 610.9,447.5 610.0,444.3"/>
<polygon points="661.6,472.1 665.8,472.8 669.8,474.2 670.2,477.3 671.9,480.0 668.8,480.3 665.7,481.0 662.6,480.0 662.0,476.1"/>
<polygon points="631.8,472.1 635.5,474.0 639.0,476.2 643.1,480.0 640.0,480.7 637.0,480.7 633.9,480.0 632.3,476.2"/>
<polygon points="800.0,416.9 803.2,416.7 806.2,417.9 809.2,418.5 808.6,421.6 808.7,424.6 809.2,427.7 812.0,430.4 815.4,432.3 812.3,433.2 809.2,433.9 806.4,431.8 803.1,430.8 802.4,427.3 800.6,424.1 800.7,420.4"/>
<polygon points="826.2,426.2 830.1,424.8 833.9,423.1 836.1,426.4 836.0,430.7 838.5,433.9 836.8,437.6 837.0,441.6 840.1,442.5 843.0,443.9 846.2,444.6 847.6,448.3 847.7,452.3 844.0,452.4 840.5,451.8 837.0,450.8 834.9,448.2 832.3,446.2 828.8,443.5 826.2,440.0 827.2,436.6 825.3,433.1 825.5,429.6"/>
<polygon points="809.2,455.4 812.7,454.1 816.4,454.7 820.0,453.9 824.6,452.3 826.5,455.1 826.5,458.7 827.9,461.7 829.3,464.7 826.3,466.4 823.1,467.7 820.1,466.5 817.0,465.6 813.9,464.7 811.4,462.1 810.8,458.5"/>
<polygon points="824.6,452.3 828.0,453.7 831.6,453.0 835.0,454.0 838.5,453.9 842.3,455.2 846.2,455.4 846.6,452.1 847.4,449.0 849.3,446.2 852.4,446.0 855.3,444.6 858.5,444.7 861.6,444.6 864.0,448.3 867.7,450.8 869.4,454.4 872.4,457.0 868.7,458.6 864.7,458.5 861.4,458.6 858.5,457.0 857.5,460.1 854.8,462.2 854.8,465.8 852.9,468.3 850.8,470.8 847.7,471.7 844.6,470.8 841.8,469.3 840.2,466.7 837.5,465.1 835.6,462.7 833.8,460.1 831.6,458.1 828.9,456.5 827.2,453.9"/>
<polygon points="873.9,423.1 876.7,424.8 880.0,424.6 880.4,428.0 881.9,431.0 884.1,433.7 884.7,437.0 886.6,439.6 887.4,442.7 888.7,445.6 891.8,447.5 892.4,450.8 889.6,453.0 886.2,453.9 883.7,450.7 879.5,449.4 877.0,446.2 876.3,442.5 874.6,439.1 873.9,435.4 874.2,432.3 874.7,429.2 874.1,426.2"/>
<polygon points="895.5,437.0 898.7,437.4 901.6,435.9 904.8,436.4 907.8,435.4 909.8,432.6 909.4,429.1 911.4,426.3 911.5,423.0 912.2,419.8 913.9,416.9 916.9,415.8 920.1,415.4 922.8,418.4 926.7,419.9 929.3,423.1 926.1,424.3 923.3,426.5 920.4,428.4 917.0,429.3 917.2,432.9 917.2,436.4 917.0,440.0 920.6,440.9 924.0,442.9 927.8,443.1 930.6,445.0 934.1,444.6 937.0,446.2 939.3,450.0 943.2,452.3 940.7,456.0 938.6,460.0 935.8,458.0 932.6,457.3 929.3,457.0 926.3,454.9 922.9,453.3 920.1,450.8 917.0,449.9 913.9,450.8 911.4,453.0 910.6,456.1 910.1,459.3 907.8,461.6 905.3,463.9 903.5,466.7 901.3,469.2 900.1,472.4 896.8,472.1 893.9,473.9 895.7,470.3 895.5,466.2 898.2,464.3 899.9,461.4 902.5,459.4 904.7,457.0 907.3,454.9 910.2,453.3 912.4,450.8 908.5,450.5 904.7,450.8 903.5,447.6 901.0,445.3 899.3,442.4 898.2,439.2"/>
<polygon points="940.1,424.6 943.4,425.4 946.7,426.2 950.2,424.7 953.3,427.1 956.7,427.2 960.1,426.9 961.7,429.7 960.8,433.1 961.5,436.0 963.5,438.7 962.5,442.1 964.5,444.8 965.0,447.9 965.3,451.0 966.3,453.9 963.2,453.9 960.1,454.1 957.1,455.5 954.0,455.4 952.7,452.3 950.8,449.5 949.8,446.3 949.0,443.1 947.8,440.0 945.4,437.3 944.4,434.0 943.8,430.5 941.0,428.0"/>
<polygon points="829.3,470.8 832.3,471.9 834.7,474.0 837.1,476.3 840.2,477.3 843.1,478.5 846.2,479.1 849.3,479.3 852.5,479.6 855.2,482.1 858.5,481.6 861.8,481.0 864.5,478.8 867.8,478.3 870.8,477.0 874.0,477.0 877.1,477.0 880.0,475.2 883.1,474.8 886.1,474.1 889.3,474.5 892.4,473.9 895.5,475.5 898.9,475.7 902.5,475.1 905.7,476.3 909.1,476.3 912.3,477.1 915.5,478.5 916.0,482.1 917.3,485.6 917.0,489.3 914.4,491.3 911.6,492.9 908.6,494.0 905.4,494.7 903.2,497.5 900.1,498.5 897.5,496.8 894.6,495.6 891.8,494.3 889.3,492.4 888.2,496.4 886.2,500.1 883.0,500.4 879.9,501.1 876.8,502.2 873.7,502.8 870.7,504.0 867.9,505.8 864.7,506.2 863.1,509.1 860.5,511.2 858.5,513.9 855.4,513.7 852.4,513.3 849.3,513.0 846.2,513.9 845.7,510.6 844.9,507.4 843.1,504.5 841.6,501.6 838.1,500.7 834.5,499.9 830.8,500.1 832.0,497.3 833.9,494.8 835.3,492.1 835.8,489.0 837.0,486.2 835.2,483.3 833.7,480.2 832.6,476.8 831.0,473.8"/>
<polygon points="926.2,477.0 928.9,474.7 932.7,474.5 935.8,473.1 938.4,470.6 941.4,468.8 944.7,467.7 944.0,464.6 944.7,461.6 947.4,459.2 950.6,458.0 954.0,457.0 957.4,457.9 959.8,460.8 963.2,461.6 965.1,464.4 966.3,467.5 966.0,471.2 967.3,474.3 969.4,477.0 968.6,480.9 966.6,484.4 964.7,487.8 964.9,491.6 967.3,494.6 968.0,498.2 969.4,501.6 966.3,501.2 963.2,501.3 960.1,501.6 956.8,500.6 954.9,497.5 952.2,495.5 949.0,494.3 946.3,492.4 943.1,491.5 940.3,489.5 937.5,487.7 934.3,486.5 930.9,486.2 928.7,483.4 928.3,479.8"/>
<polygon points="821.6,507.8 824.6,507.1 827.7,507.3 830.8,507.3 833.8,506.1 837.0,506.8 840.1,507.6 843.1,506.5 846.2,506.2 846.2,510.0 846.2,513.9 843.0,513.9 840.1,515.2 837.1,516.2 833.7,515.6 830.8,517.0 827.1,517.2 823.7,515.2 820.0,515.5 821.6,511.8"/>
<polygon points="843.1,510.9 846.0,512.4 849.3,511.9 852.2,513.4 855.5,512.8 858.5,513.9 859.0,517.0 860.0,520.0 860.0,523.2 857.3,524.8 855.2,527.4 852.1,528.5 849.3,530.0 846.5,528.0 843.5,526.2 841.6,523.2 842.7,520.2 843.3,517.2 842.0,513.9"/>
<polygon points="818.5,518.6 821.5,519.7 824.7,518.7 827.6,520.7 830.8,520.1 832.9,523.4 835.1,526.6 837.0,530.0 833.9,529.7 830.8,530.7 827.8,530.7 824.7,530.2 821.6,530.6 818.5,530.0 818.9,526.2 818.3,522.4"/>
<polygon points="800.0,506.2 803.1,506.7 806.1,507.6 809.2,507.8 810.5,511.0 811.9,514.1 813.9,517.0 810.8,518.4 808.4,520.7 806.2,523.2 802.8,522.3 800.0,520.1 799.4,516.6 799.9,513.1 799.8,509.7"/>
<polygon points="800.0,480.1 803.4,480.1 805.9,482.9 809.2,483.1 812.9,482.6 816.1,480.1 820.0,480.1 820.4,483.2 821.6,486.1 821.6,489.3 818.5,490.7 816.0,492.8 813.9,495.5 809.9,494.4 806.2,492.4 804.8,489.2 803.1,486.3 801.1,483.4"/>
<polygon points="907.8,504.7 911.1,505.7 913.9,507.8 915.5,511.1 915.1,514.8 916.8,518.0 917.0,521.6 913.7,523.7 910.8,526.2 909.1,522.8 909.8,518.8 907.8,515.5 908.2,511.9 907.3,508.3"/>
<polygon points="929.3,523.2 932.6,523.2 935.5,521.6 937.7,525.6 938.6,530.0 935.5,530.9 932.4,530.9 929.3,530.0 929.9,526.6"/>
<polygon points="858.5,400.0 861.9,400.7 865.3,400.2 868.6,400.5 872.0,398.9 875.4,400.0 874.3,403.0 873.9,406.2 870.7,406.2 867.8,407.2 864.7,407.7 862.6,405.2 860.1,402.9"/>
<polygon points="1003.8,437.6 1007.5,436.6 1011.2,436.0 1015.1,436.3 1017.8,439.3 1020.1,442.6 1023.4,442.9 1026.2,444.4 1029.4,444.8 1032.2,446.7 1035.2,447.6 1032.4,449.0 1029.8,450.9 1026.6,451.6 1024.7,454.6 1021.4,455.2 1018.7,452.7 1015.0,452.2 1011.6,451.1 1008.8,448.9 1006.1,447.2 1003.8,445.1 1003.6,441.4"/>
<polygon points="1031.4,435.1 1034.5,434.3 1037.0,431.9 1040.2,431.3 1044.1,430.9 1047.8,431.9 1051.5,432.6 1052.8,437.6 1049.2,438.3 1046.2,440.5 1042.7,441.3 1040.0,439.7 1036.9,439.4 1033.9,438.8"/>
<polygon points="1052.8,433.8 1056.5,432.0 1059.1,428.8 1063.2,430.1 1066.6,432.6 1064.1,435.1 1060.5,435.7 1057.3,437.5 1054.0,438.8"/>
<polygon points="1002.6,472.7 1003.9,469.4 1004.4,465.8 1006.3,462.7 1007.6,465.8 1010.3,467.9 1012.6,470.2 1010.0,471.7 1007.1,472.7 1005.1,475.2"/>
<polygon points="1022.6,467.7 1026.4,464.6 1030.0,465.3 1032.7,467.7 1031.3,470.6 1030.4,473.7 1028.9,476.5 1025.2,477.8 1025.2,474.2 1023.7,471.0"/>
<polygon points="1032.7,479.0 1033.3,475.6 1034.2,472.1 1034.1,468.6 1035.2,465.2 1037.3,462.8 1038.2,459.8 1039.5,457.0 1040.2,453.9 1043.4,455.7 1046.5,457.7 1047.0,461.7 1049.0,465.2 1046.7,467.4 1045.2,470.2 1043.8,473.1 1043.5,476.4 1041.5,479.0 1037.1,479.1"/>
<polygon points="1037.7,477.8 1038.4,474.2 1040.0,471.1 1042.2,468.3 1044.0,465.2 1049.0,466.5 1051.5,469.0 1051.1,473.0 1049.0,476.5 1045.2,480.3 1041.7,478.2"/>
<polygon points="1047.8,477.8 1050.0,474.8 1050.4,471.1 1051.5,467.7 1056.5,467.7 1059.1,471.5 1057.6,474.8 1054.1,476.8 1052.8,480.3"/>
<polygon points="1012.0,484.0 1015.2,482.9 1017.1,479.8 1020.1,478.4 1023.2,479.4 1026.4,479.0 1028.1,482.6 1028.9,486.5 1030.1,489.7 1032.5,492.2 1033.9,495.3 1033.7,498.4 1033.6,501.6 1035.0,504.8 1033.9,507.9 1030.9,508.7 1028.6,511.1 1025.4,511.6 1022.6,512.9 1020.5,510.6 1017.8,509.3 1015.1,507.9 1016.5,504.3 1016.3,500.3 1017.6,496.6 1020.1,491.6 1017.4,489.1 1014.2,487.0"/>
<polygon points="1013.9,505.4 1016.5,503.6 1018.9,501.6 1019.6,504.6 1020.7,507.4 1021.4,510.4 1018.9,514.2 1017.5,511.1 1015.5,508.4"/>
<polygon points="1037.7,497.9 1041.6,497.5 1045.2,499.1 1045.8,502.1 1046.8,505.0 1047.8,507.9 1045.9,511.0 1042.7,512.9 1039.0,511.2 1036.5,507.9 1037.9,504.7 1037.1,501.2"/>
<polygon points="1079.2,422.5 1082.5,423.5 1085.9,421.9 1089.2,422.5 1090.4,426.3 1091.7,430.0 1090.5,434.2 1087.9,437.6 1083.8,437.3 1080.4,435.1 1079.3,432.0 1080.1,428.8 1079.0,425.7"/>
<polygon points="1090.5,432.6 1093.5,431.9 1096.5,431.5 1099.2,430.0 1101.5,432.9 1103.0,436.3 1099.9,438.2 1098.0,441.3 1095.3,438.7 1091.7,437.6"/>
<polygon points="1095.5,442.6 1098.6,442.6 1101.8,442.1 1104.9,443.1 1108.0,442.6 1109.4,445.5 1111.8,447.6 1110.2,450.6 1110.3,454.3 1108.6,457.3 1106.8,460.2 1103.8,461.8 1100.5,462.7 1095.5,460.2 1096.5,456.7 1095.8,453.2 1095.6,449.6 1095.9,446.1"/>
<polygon points="1075.4,482.8 1076.7,480.0 1079.2,478.1 1080.4,475.2 1082.9,472.7 1086.0,471.5 1089.2,470.2 1091.5,472.6 1092.7,475.8 1095.5,477.8 1097.6,480.7 1099.2,484.0 1103.1,482.9 1106.8,481.5 1110.6,484.0 1113.1,487.8 1109.9,489.3 1106.3,489.0 1103.0,490.3 1100.6,488.3 1098.0,486.5 1094.5,484.2 1090.5,482.8 1086.7,481.7 1082.9,480.3 1079.2,481.6"/>
<polygon points="1087.9,497.9 1089.6,495.3 1091.5,492.7 1094.3,490.9 1095.5,487.8 1100.5,490.3 1099.6,493.4 1100.9,496.6 1099.7,499.8 1100.5,502.9 1097.7,506.2 1096.7,510.4 1095.4,507.5 1093.0,505.4 1090.4,503.5 1090.5,499.8"/>
<polygon points="1118.1,512.9 1121.8,511.7 1123.9,514.6 1126.0,517.5 1128.1,520.5 1125.6,525.5 1123.6,522.0 1120.6,519.2 1120.0,515.8"/>
<polygon points="990.0,466.5 993.8,467.7 995.0,470.2 991.3,471.5"/>
<polygon points="1018.9,525.5 1022.6,526.3 1026.4,526.6 1030.2,526.7 1031.4,530.0 1028.3,529.8 1025.2,530.0 1022.0,529.3 1018.9,530.0"/>
<polygon points="883.4,285.9 889.3,285.2 890.7,287.9 892.3,290.4 887.8,291.1 885.6,288.5"/>
<polygon points="896.7,302.3 901.2,301.5 903.9,303.7 905.3,306.9 907.1,309.7 911.2,310.3 915.0,308.1 919.0,308.2 922.0,305.2 925.0,305.6 927.9,306.7 927.7,310.3 928.0,313.8 929.3,317.1 928.6,320.8 927.9,324.5 925.9,327.1 925.2,330.2 924.9,333.4 922.7,331.2 920.4,329.0 916.9,326.6 914.5,323.0 910.7,321.7 907.1,320.1 904.2,317.1 901.2,314.1 899.1,311.5 898.0,308.6 898.8,304.9"/>
<polygon points="889.3,309.7 892.7,312.2 895.2,315.6 897.3,318.0 898.9,320.8 901.2,323.0 904.5,323.9 906.8,326.7 910.1,327.5 912.9,326.0 915.8,324.8 919.0,324.5 919.1,327.9 919.3,331.2 918.5,334.5 919.0,337.9 915.3,337.9 911.8,338.9 908.6,340.8 906.7,337.9 904.1,335.6 902.6,332.4 899.7,330.4 897.3,328.4 894.3,327.1 892.3,324.5 890.3,321.8 889.3,318.6 890.1,314.1"/>
<polygon points="935.3,337.9 937.8,335.4 941.2,334.9 944.2,339.3 948.6,342.3 944.7,343.4 941.2,345.3 939.3,342.8 937.9,339.8"/>
<polygon points="870.0,336.4 873.1,336.2 875.9,334.9 877.7,337.6 878.4,340.7 878.9,343.8 879.3,346.8 880.9,349.6 880.4,352.7 882.2,355.9 884.8,358.6 880.3,359.7 875.9,358.6 872.5,356.9 870.0,354.2 870.5,350.6 870.7,347.1 869.8,343.5 871.1,340.0"/>
<polygon points="929.3,377.9 930.8,375.0 931.4,371.5 933.8,369.0 936.4,367.2 938.2,364.6 939.7,366.1 938.9,369.4 936.4,371.8 935.3,375.0 932.8,377.4"/>
<polygon points="932.3,392.8 935.4,390.7 938.2,388.3 941.4,387.2 944.2,385.3 947.2,383.9 950.1,382.4 952.9,380.6 956.4,380.1 959.0,377.9 962.1,375.9 965.3,374.1 968.8,372.8 972.4,372.0 973.9,375.0 970.9,376.7 967.5,378.0 964.9,380.5 962.0,382.4 959.8,384.8 956.9,385.8 954.4,387.6 951.5,388.7 948.6,389.8 946.9,392.5 944.0,394.2 942.7,397.2 938.2,397.2 933.8,397.2"/>
<polygon points="959.0,360.1 962.5,358.6 965.0,355.7 967.7,357.4 971.2,356.7 973.9,358.6 977.3,360.6 980.2,363.2 982.8,366.1 985.5,368.0 988.7,369.0 991.7,370.5 994.7,369.5 997.8,368.8 1000.6,367.4 1003.5,366.1 1005.2,362.8 1004.7,358.9 1006.5,355.7 1010.1,354.4 1013.8,353.6 1016.9,351.2 1021.3,348.2 1021.5,351.2 1023.1,354.1 1022.8,357.2 1023.6,360.5 1024.9,363.6 1027.3,366.1 1027.3,369.1 1026.4,372.0 1025.8,375.0 1022.9,376.1 1020.1,377.8 1016.9,377.9 1014.5,380.8 1012.4,383.9 1009.5,384.8 1006.6,385.5 1003.5,385.3 999.7,385.8 996.1,386.8 992.7,384.6 988.7,383.9 987.5,386.8 986.1,389.6 985.7,392.8 983.9,396.1 982.7,399.7 981.3,403.1 976.8,403.1 978.1,399.9 978.0,396.6 977.9,393.3 977.7,390.0 978.3,386.8 975.7,385.0 973.9,382.4 971.1,381.0 968.0,380.9 965.0,380.9 963.2,378.1 962.0,375.0 960.6,372.2 960.8,369.0 959.3,366.2 958.7,363.3"/>
<polygon points="1025.8,360.1 1029.4,360.7 1032.9,361.5 1036.2,363.3 1040.0,363.1 1039.5,366.6 1039.3,370.0 1040.9,373.5 1040.2,377.0 1039.8,380.4 1040.0,383.9 1036.6,385.4 1033.2,386.8 1031.0,383.7 1030.0,379.9 1028.7,376.4 1028.1,373.2 1028.5,369.7 1027.8,366.5 1025.9,363.5"/>
<polygon points="899.7,389.8 904.1,392.8 903.0,396.2 902.8,399.6 902.3,403.0 904.0,406.7 902.6,410.0 898.2,410.0 897.4,406.6 898.3,403.2 899.6,399.9 899.6,396.6 900.4,393.2"/>
<polygon points="908.6,380.9 911.5,377.9 913.0,380.7 912.7,383.9 913.2,387.0 914.5,389.8 916.3,392.5 916.2,395.8 916.4,398.9 918.4,401.5 919.0,404.6 916.0,406.1 913.9,403.1 914.7,399.1 912.4,396.2 911.5,392.8 911.4,389.7 910.5,386.7 909.2,383.9"/>
<polygon points="870.0,391.3 873.7,392.3 877.4,392.8 877.9,396.3 875.8,399.6 876.6,403.1 876.3,406.6 875.9,410.0 870.0,410.0 870.3,406.9 870.5,403.8 870.7,400.6 870.8,397.5 869.6,394.4"/>
<polygon points="551.4,494.2 554.1,492.0 557.3,490.4 560.0,488.2 560.8,491.5 564.3,493.2 564.8,496.7 566.8,499.3 562.9,500.1 560.1,503.2 556.5,504.5 551.4,502.7 550.5,498.4"/>
<polygon points="556.5,504.5 559.1,502.3 562.3,501.4 565.2,499.9 568.5,499.3 571.7,499.5 573.9,502.2 577.0,502.7 579.8,505.1 582.9,507.1 585.6,509.6 585.4,513.3 582.7,516.3 582.2,519.9 579.1,520.2 576.1,519.8 573.2,518.9 570.2,518.2 567.0,515.2 565.1,511.3 562.1,509.2 559.3,506.8"/>
<polygon points="565.1,511.3 567.1,515.2 570.2,518.2 569.8,521.3 571.7,524.1 571.9,527.1 571.9,530.1 569.0,529.0 566.0,528.5 563.4,526.7 560.1,523.8 558.2,519.9 560.9,517.4 562.5,513.9"/>
<polygon points="571.9,519.9 575.3,520.4 578.8,520.7 582.2,519.9 582.4,523.6 584.2,526.8 585.6,530.1 583.4,532.4 579.9,532.7 577.4,534.5 575.3,537.0 573.7,533.5 571.9,530.1 571.8,526.7 572.1,523.3"/>
<polygon points="542.8,516.4 546.2,515.6 548.4,512.8 551.4,511.3 554.3,513.7 555.1,517.7 558.2,519.9 555.9,523.0 554.8,526.7 550.5,526.4 546.2,526.7 545.9,523.0 544.2,519.7"/>
<polygon points="520.5,518.2 523.9,516.4 525.7,513.0 529.1,514.6 531.7,517.2 534.2,519.9 536.4,522.2 539.4,523.3 536.0,524.9 533.6,527.7 530.8,530.1 528.0,528.8 525.4,527.1 522.3,526.7 522.4,522.2"/>
<polygon points="549.7,523.3 554.1,523.5 558.2,525.0 558.2,528.3 560.2,530.9 560.0,534.2 561.6,537.0 558.8,538.2 556.3,540.3 553.1,540.4 550.4,537.1 547.9,533.6 549.1,530.3 548.9,526.7"/>
<polygon points="518.8,533.6 522.3,532.0 525.7,530.1 527.9,532.5 529.6,535.3 532.5,537.0 530.4,539.4 529.7,542.4 529.1,545.5 524.8,544.8 520.5,543.8 520.0,540.4 520.0,536.9"/>
<polygon points="535.0,531.0 536.7,534.0 537.6,537.4 540.0,540.0 538.1,543.0 535.6,545.5 533.0,548.0 530.0,544.9 528.0,541.0 529.1,538.1 532.3,536.5 532.6,533.0"/>
<polygon points="545.0,531.0 548.0,531.0 551.0,530.0 553.9,529.3 557.0,529.9 560.0,530.0 562.2,533.1 562.7,537.0 565.0,540.0 562.6,543.0 559.4,545.1 556.0,547.0 552.3,546.1 548.9,544.4 546.0,542.0 546.1,538.3 546.1,534.6"/>
<polygon points="568.0,531.0 571.4,532.4 574.7,534.0 578.2,534.9 582.0,535.0 582.4,538.1 581.2,541.0 579.9,543.9 580.0,547.0 576.9,546.9 574.0,545.7 571.1,545.2 568.0,545.0 567.0,541.5 567.2,538.0 568.1,534.5"/>
<polygon points="506.8,502.7 511.1,501.6 515.4,501.0 515.5,504.5 516.3,507.9 512.5,508.9 508.6,508.7 508.4,505.5"/>
<polygon points="527.4,472.0 530.5,471.6 533.4,472.5 536.5,472.5 539.4,473.6 539.6,477.0 539.7,480.5 540.5,483.9 541.0,487.3 539.7,490.7 537.8,493.9 536.8,497.4 536.0,501.0 530.8,499.3 531.3,495.9 531.4,492.4 531.5,488.9 531.9,485.5 533.4,482.2 530.5,479.3 529.2,475.5"/>
<polygon points="731.4,339.0 734.5,339.6 737.7,340.2 740.3,338.4 742.7,336.5 744.5,340.1 745.2,344.0 742.1,345.9 740.2,349.0 736.5,347.8 734.8,345.1 732.7,342.7"/>
<polygon points="736.5,349.0 739.2,351.7 740.2,355.3 737.1,357.2 735.2,360.3 732.3,362.2 728.9,362.8 731.4,367.8 735.7,366.6 740.2,366.6 742.7,361.6 741.9,358.2 741.3,354.8 740.2,351.5"/>
<polygon points="728.9,376.6 732.3,374.6 735.6,372.4 739.0,370.4 740.7,373.6 742.7,376.6 743.4,381.0 744.0,385.4 741.9,388.2 741.5,391.7 738.6,388.8 736.5,385.4 733.7,383.1 731.4,380.4"/>
<polygon points="750.3,347.8 755.3,345.2 757.8,349.0 762.8,350.3 760.3,354.0 755.3,354.0 751.5,352.8"/>
<polygon points="752.8,360.3 756.4,358.6 760.3,359.0 761.6,362.2 763.8,364.6 766.6,366.6 764.8,369.8 761.6,371.6 760.2,375.1 757.8,377.9 752.8,376.6 750.9,373.8 750.3,370.4 752.0,367.2 752.3,363.8"/>
<polygon points="712.6,372.9 715.5,371.0 718.9,370.4 719.3,373.5 720.1,376.6 715.1,376.6"/>
<polygon points="710.1,380.4 713.1,383.2 715.1,386.7 717.8,384.1 721.4,383.0 724.2,384.1 726.5,386.4 729.4,387.3 732.2,388.4 735.2,389.2 732.9,392.5 731.8,396.4 730.2,400.0 727.2,399.1 724.2,399.8 721.1,400.0 718.1,399.1 715.1,400.0 713.3,397.0 713.9,393.4 711.7,390.4 711.3,387.0 711.5,383.5"/>
<polygon points="690.0,381.7 692.2,384.2 695.0,385.9 697.5,387.9 700.2,390.3 702.6,393.0 700.5,395.8 698.0,398.2 695.0,400.0 690.0,400.0 690.8,396.9 690.0,393.9 690.6,390.9 690.2,387.8 690.9,384.8"/>
<polygon points="761.6,337.7 764.4,336.3 767.5,336.3 770.4,335.2 771.1,338.2 772.9,340.8 772.9,344.0 774.2,348.0 776.6,351.5 772.9,352.8 770.1,349.9 767.8,346.5 762.8,344.0 762.7,340.7"/>
<polygon points="765.3,316.4 769.2,316.2 773.0,315.6 776.6,313.9 776.7,317.4 777.7,320.8 778.1,324.2 777.9,327.7 775.8,331.1 772.9,333.9 770.9,331.1 770.4,327.7 769.7,324.6 766.9,322.5 767.4,318.9"/>
<polygon points="776.6,311.3 777.9,307.0 777.9,302.6 780.5,299.5 782.9,296.3 785.4,293.8 784.3,296.8 786.2,299.8 785.2,302.8 784.5,305.8 785.4,308.8 783.3,311.4 783.5,315.0 781.6,317.6 780.0,313.8"/>
<polygon points="772.9,371.6 776.6,371.3 780.4,371.6 782.8,373.7 784.2,376.6 780.8,377.1 777.9,379.1 774.1,380.4 774.0,375.9"/>
<polygon points="785.4,379.1 790.5,380.4 793.0,385.4 790.5,389.2 786.7,385.4 785.7,382.3"/>
<polygon points="799.2,322.6 802.5,322.7 805.5,321.4 806.3,324.5 806.8,327.7 810.3,328.5 812.8,330.8 815.6,332.7 812.6,333.9 809.3,333.9 804.8,333.9 800.5,332.7 800.9,329.2 799.3,326.0"/>
<polygon points="786.7,340.2 790.4,338.2 794.2,336.5 797.7,335.8 801.1,337.3 804.5,338.1 808.0,337.7 810.5,342.7 808.6,346.5 806.8,350.3 808.0,355.3 804.9,356.3 803.0,359.0 799.9,358.8 796.7,359.0 793.1,358.0 790.5,355.3 789.9,352.1 789.2,349.0 788.3,346.1 788.1,343.0"/>
<polygon points="800.5,290.0 803.8,289.6 806.7,291.8 810.0,291.3 813.2,291.7 816.0,294.0 819.3,293.8 819.0,298.2 819.3,302.6 815.8,304.4 812.6,306.6 809.3,308.8 806.6,311.5 803.0,312.6 803.2,309.0 800.9,306.0 800.5,302.6 801.5,299.5 800.1,296.3 800.1,293.1"/>
<polygon points="805.5,365.3 808.7,365.5 811.4,363.6 814.3,362.8 817.1,364.6 819.9,366.5 823.1,367.8 822.9,371.3 825.0,374.4 824.4,377.9 821.1,378.9 818.2,380.6 815.6,382.9 812.7,381.9 809.9,380.6 806.8,380.4 805.5,376.3 803.0,372.9 804.7,369.3"/>
<polygon points="823.1,342.7 826.1,341.4 828.4,339.3 830.0,336.5 829.1,339.8 829.7,343.0 829.4,346.3 830.4,349.5 830.0,352.8 825.6,349.0 824.8,345.7"/>
<polygon points="1107.5,376.0 1111.9,376.0 1115.5,380.4 1113.3,384.1 1108.9,382.6 1109.1,379.1"/>
<polygon points="1128.7,380.4 1132.4,379.7 1133.1,382.6 1130.2,384.1"/>
<polygon points="1125.8,389.9 1130.9,387.7 1132.2,391.0 1134.6,393.7 1135.3,397.3 1133.1,399.5 1130.3,397.9 1128.0,395.8 1126.6,393.0"/>
<polygon points="1133.1,399.5 1137.5,397.3 1140.5,400.9 1138.3,403.1 1134.6,402.4"/>
<polygon points="1136.8,402.4 1141.9,401.7 1145.6,404.6 1142.7,407.5 1138.3,406.1"/>
<polygon points="1144.9,403.1 1149.3,401.7 1150.7,406.1 1147.8,407.5"/>
<polygon points="1152.2,395.8 1155.9,395.1 1158.0,399.5 1155.1,401.7 1152.9,400.2"/>
<polygon points="1153.7,409.0 1156.4,407.2 1159.5,406.1 1162.7,404.8 1166.1,403.9 1166.8,407.5 1163.9,411.2 1158.8,412.7 1155.1,412.7"/>
<polygon points="1186.6,390.7 1191.8,388.5 1195.0,390.0 1195.0,395.8 1190.3,397.3 1186.6,395.1"/>
<polygon points="1137.3,410.9 1137.2,414.4 1137.7,417.8 1139.0,421.1 1141.9,422.3 1143.5,425.2 1146.9,425.7 1149.1,427.8 1151.9,425.6 1154.0,422.6 1157.3,420.9 1159.2,417.7 1161.4,414.0 1164.3,410.9 1161.4,408.3 1157.5,407.6 1154.3,409.0 1150.7,408.3 1147.3,408.8 1144.0,409.9 1140.8,411.2"/>
<polygon points="1178.8,415.5 1182.7,413.5 1186.6,411.6 1190.5,413.6 1187.2,415.6 1184.6,418.4 1178.8,418.4"/>
<polyline points="643.1,411.6 654.4,429.0" fill="none"/>
<polyline points="648.3,433.1 661.6,443.4" fill="none"/>
<polyline points="657.5,429.0 653.4,444.4" fill="none"/>
<polyline points="677.0,420.8 688.3,400.3" fill="none"/>
<polyline points="655.4,457.8 661.6,447.5" fill="none"/>
<polyline points="858.5,481.6 866.2,506.2" fill="none"/>
<polyline points="886.2,477.0 892.4,492.4" fill="none"/>
<polyline points="944.7,467.7 954.0,486.2 964.7,487.8" fill="none"/>
<polyline points="957.0,426.9 961.6,453.9" fill="none"/>
<polyline points="846.2,480.0 852.3,498.5" fill="none"/>
<polyline points="901.2,323.0 907.1,320.1 914.5,323.0" fill="none"/>
<polyline points="904.0,327.0 910.0,340.0" fill="none"/>
<polyline points="978.3,386.8 985.7,392.8" fill="none"/>
<polyline points="806.0,370.0 823.0,377.0" fill="none"/>
</g></g>
<g transform="translate(613.7,424.9)"><path d="M0 0H14V14H9.6L7 17.2L4.4 14H0Z" fill="#0e86ee"/><path d="M2.2 11.6V6.6L4.3 5.5V6.5L6.4 5.5V6.5L8.6 5.3V2.4H10.4V11.6Z" fill="#fff"/><path d="M3.2 7.9h1.6M5.8 7.9h1M8 7.9h1M3.2 9.9h1.6M5.8 9.9h1M8 9.9h1" stroke="#0e86ee" stroke-width="1.1"/></g>
<g transform="translate(642.0,501.2)"><path d="M0 0H14V14H9.6L7 17.2L4.4 14H0Z" fill="#0e86ee"/><path d="M2.2 11.6V6.6L4.3 5.5V6.5L6.4 5.5V6.5L8.6 5.3V2.4H10.4V11.6Z" fill="#fff"/><path d="M3.2 7.9h1.6M5.8 7.9h1M8 7.9h1M3.2 9.9h1.6M5.8 9.9h1M8 9.9h1" stroke="#0e86ee" stroke-width="1.1"/></g>
<g transform="translate(633.4,496.9)"><path d="M0 0H14V14H9.6L7 17.2L4.4 14H0Z" fill="#0e86ee"/><path d="M2.2 11.6V6.6L4.3 5.5V6.5L6.4 5.5V6.5L8.6 5.3V2.4H10.4V11.6Z" fill="#fff"/><path d="M3.2 7.9h1.6M5.8 7.9h1M8 7.9h1M3.2 9.9h1.6M5.8 9.9h1M8 9.9h1" stroke="#0e86ee" stroke-width="1.1"/></g>
<g transform="translate(610.3,504.6)"><path d="M0 0H14V14H9.6L7 17.2L4.4 14H0Z" fill="#0e86ee"/><path d="M2.2 11.6V6.6L4.3 5.5V6.5L6.4 5.5V6.5L8.6 5.3V2.4H10.4V11.6Z" fill="#fff"/><path d="M3.2 7.9h1.6M5.8 7.9h1M8 7.9h1M3.2 9.9h1.6M5.8 9.9h1M8 9.9h1" stroke="#0e86ee" stroke-width="1.1"/></g>
<g transform="translate(623.5,526.9)"><path d="M0 0H14V14H9.6L7 17.2L4.4 14H0Z" fill="#0e86ee"/><path d="M2.2 11.6V6.6L4.3 5.5V6.5L6.4 5.5V6.5L8.6 5.3V2.4H10.4V11.6Z" fill="#fff"/><path d="M3.2 7.9h1.6M5.8 7.9h1M8 7.9h1M3.2 9.9h1.6M5.8 9.9h1M8 9.9h1" stroke="#0e86ee" stroke-width="1.1"/></g>
<g transform="translate(628.3,531.2)"><path d="M0 0H14V14H9.6L7 17.2L4.4 14H0Z" fill="#0e86ee"/><path d="M2.2 11.6V6.6L4.3 5.5V6.5L6.4 5.5V6.5L8.6 5.3V2.4H10.4V11.6Z" fill="#fff"/><path d="M3.2 7.9h1.6M5.8 7.9h1M8 7.9h1M3.2 9.9h1.6M5.8 9.9h1M8 9.9h1" stroke="#0e86ee" stroke-width="1.1"/></g>
<g transform="translate(677.0,527.9)"><path d="M0 0H14V14H9.6L7 17.2L4.4 14H0Z" fill="#0e86ee"/><path d="M2.2 11.6V6.6L4.3 5.5V6.5L6.4 5.5V6.5L8.6 5.3V2.4H10.4V11.6Z" fill="#fff"/><path d="M3.2 7.9h1.6M5.8 7.9h1M8 7.9h1M3.2 9.9h1.6M5.8 9.9h1M8 9.9h1" stroke="#0e86ee" stroke-width="1.1"/></g>
<g transform="translate(680.5,531.2)"><path d="M0 0H14V14H9.6L7 17.2L4.4 14H0Z" fill="#0e86ee"/><path d="M2.2 11.6V6.6L4.3 5.5V6.5L6.4 5.5V6.5L8.6 5.3V2.4H10.4V11.6Z" fill="#fff"/><path d="M3.2 7.9h1.6M5.8 7.9h1M8 7.9h1M3.2 9.9h1.6M5.8 9.9h1M8 9.9h1" stroke="#0e86ee" stroke-width="1.1"/></g>
<g transform="translate(624.5,547.6)"><path d="M0 0H14V14H9.6L7 17.2L4.4 14H0Z" fill="#0e86ee"/><path d="M2.2 11.6V6.6L4.3 5.5V6.5L6.4 5.5V6.5L8.6 5.3V2.4H10.4V11.6Z" fill="#fff"/><path d="M3.2 7.9h1.6M5.8 7.9h1M8 7.9h1M3.2 9.9h1.6M5.8 9.9h1M8 9.9h1" stroke="#0e86ee" stroke-width="1.1"/></g>
<g transform="translate(569.7,537.5)"><path d="M0 0H14V14H9.6L7 17.2L4.4 14H0Z" fill="#0e86ee"/><path d="M2.2 11.6V6.6L4.3 5.5V6.5L6.4 5.5V6.5L8.6 5.3V2.4H10.4V11.6Z" fill="#fff"/><path d="M3.2 7.9h1.6M5.8 7.9h1M8 7.9h1M3.2 9.9h1.6M5.8 9.9h1M8 9.9h1" stroke="#0e86ee" stroke-width="1.1"/></g>
<g transform="translate(579.0,539.2)"><path d="M0 0H14V14H9.6L7 17.2L4.4 14H0Z" fill="#0e86ee"/><path d="M2.2 11.6V6.6L4.3 5.5V6.5L6.4 5.5V6.5L8.6 5.3V2.4H10.4V11.6Z" fill="#fff"/><path d="M3.2 7.9h1.6M5.8 7.9h1M8 7.9h1M3.2 9.9h1.6M5.8 9.9h1M8 9.9h1" stroke="#0e86ee" stroke-width="1.1"/></g>
<g transform="translate(542.7,534.9)"><path d="M0 0H14V14H9.6L7 17.2L4.4 14H0Z" fill="#0e86ee"/><path d="M2.2 11.6V6.6L4.3 5.5V6.5L6.4 5.5V6.5L8.6 5.3V2.4H10.4V11.6Z" fill="#fff"/><path d="M3.2 7.9h1.6M5.8 7.9h1M8 7.9h1M3.2 9.9h1.6M5.8 9.9h1M8 9.9h1" stroke="#0e86ee" stroke-width="1.1"/></g>
<g transform="translate(527.6,540.9)"><path d="M0 0H14V14H9.6L7 17.2L4.4 14H0Z" fill="#0e86ee"/><path d="M2.2 11.6V6.6L4.3 5.5V6.5L6.4 5.5V6.5L8.6 5.3V2.4H10.4V11.6Z" fill="#fff"/><path d="M3.2 7.9h1.6M5.8 7.9h1M8 7.9h1M3.2 9.9h1.6M5.8 9.9h1M8 9.9h1" stroke="#0e86ee" stroke-width="1.1"/></g>
<g transform="translate(533.5,548.5)"><path d="M0 0H14V14H9.6L7 17.2L4.4 14H0Z" fill="#0e86ee"/><path d="M2.2 11.6V6.6L4.3 5.5V6.5L6.4 5.5V6.5L8.6 5.3V2.4H10.4V11.6Z" fill="#fff"/><path d="M3.2 7.9h1.6M5.8 7.9h1M8 7.9h1M3.2 9.9h1.6M5.8 9.9h1M8 9.9h1" stroke="#0e86ee" stroke-width="1.1"/></g>
<g transform="translate(531.8,558.6)"><path d="M0 0H14V14H9.6L7 17.2L4.4 14H0Z" fill="#0e86ee"/><path d="M2.2 11.6V6.6L4.3 5.5V6.5L6.4 5.5V6.5L8.6 5.3V2.4H10.4V11.6Z" fill="#fff"/><path d="M3.2 7.9h1.6M5.8 7.9h1M8 7.9h1M3.2 9.9h1.6M5.8 9.9h1M8 9.9h1" stroke="#0e86ee" stroke-width="1.1"/></g>
<g transform="translate(566.4,552.7)"><path d="M0 0H14V14H9.6L7 17.2L4.4 14H0Z" fill="#0e86ee"/><path d="M2.2 11.6V6.6L4.3 5.5V6.5L6.4 5.5V6.5L8.6 5.3V2.4H10.4V11.6Z" fill="#fff"/><path d="M3.2 7.9h1.6M5.8 7.9h1M8 7.9h1M3.2 9.9h1.6M5.8 9.9h1M8 9.9h1" stroke="#0e86ee" stroke-width="1.1"/></g>
<g transform="translate(624.5,588.9)"><path d="M0 0H14V14H9.6L7 17.2L4.4 14H0Z" fill="#0e86ee"/><path d="M2.2 11.6V6.6L4.3 5.5V6.5L6.4 5.5V6.5L8.6 5.3V2.4H10.4V11.6Z" fill="#fff"/><path d="M3.2 7.9h1.6M5.8 7.9h1M8 7.9h1M3.2 9.9h1.6M5.8 9.9h1M8 9.9h1" stroke="#0e86ee" stroke-width="1.1"/></g>
<g transform="translate(671.8,574.6)"><path d="M0 0H14V14H9.6L7 17.2L4.4 14H0Z" fill="#0e86ee"/><path d="M2.2 11.6V6.6L4.3 5.5V6.5L6.4 5.5V6.5L8.6 5.3V2.4H10.4V11.6Z" fill="#fff"/><path d="M3.2 7.9h1.6M5.8 7.9h1M8 7.9h1M3.2 9.9h1.6M5.8 9.9h1M8 9.9h1" stroke="#0e86ee" stroke-width="1.1"/></g>
<g transform="translate(684.4,598.2)"><path d="M0 0H14V14H9.6L7 17.2L4.4 14H0Z" fill="#0e86ee"/><path d="M2.2 11.6V6.6L4.3 5.5V6.5L6.4 5.5V6.5L8.6 5.3V2.4H10.4V11.6Z" fill="#fff"/><path d="M3.2 7.9h1.6M5.8 7.9h1M8 7.9h1M3.2 9.9h1.6M5.8 9.9h1M8 9.9h1" stroke="#0e86ee" stroke-width="1.1"/></g>
<g transform="translate(669.2,644.6)"><path d="M0 0H14V14H9.6L7 17.2L4.4 14H0Z" fill="#0e86ee"/><path d="M2.2 11.6V6.6L4.3 5.5V6.5L6.4 5.5V6.5L8.6 5.3V2.4H10.4V11.6Z" fill="#fff"/><path d="M3.2 7.9h1.6M5.8 7.9h1M8 7.9h1M3.2 9.9h1.6M5.8 9.9h1M8 9.9h1" stroke="#0e86ee" stroke-width="1.1"/></g>
<g transform="translate(757.7,592.4)"><path d="M0 0H14V14H9.6L7 17.2L4.4 14H0Z" fill="#0e86ee"/><path d="M2.2 11.6V6.6L4.3 5.5V6.5L6.4 5.5V6.5L8.6 5.3V2.4H10.4V11.6Z" fill="#fff"/><path d="M3.2 7.9h1.6M5.8 7.9h1M8 7.9h1M3.2 9.9h1.6M5.8 9.9h1M8 9.9h1" stroke="#0e86ee" stroke-width="1.1"/></g>
<g transform="translate(858.9,582.3)"><path d="M0 0H14V14H9.6L7 17.2L4.4 14H0Z" fill="#0e86ee"/><path d="M2.2 11.6V6.6L4.3 5.5V6.5L6.4 5.5V6.5L8.6 5.3V2.4H10.4V11.6Z" fill="#fff"/><path d="M3.2 7.9h1.6M5.8 7.9h1M8 7.9h1M3.2 9.9h1.6M5.8 9.9h1M8 9.9h1" stroke="#0e86ee" stroke-width="1.1"/></g>
<g transform="translate(885.8,533.4)"><path d="M0 0H14V14H9.6L7 17.2L4.4 14H0Z" fill="#0e86ee"/><path d="M2.2 11.6V6.6L4.3 5.5V6.5L6.4 5.5V6.5L8.6 5.3V2.4H10.4V11.6Z" fill="#fff"/><path d="M3.2 7.9h1.6M5.8 7.9h1M8 7.9h1M3.2 9.9h1.6M5.8 9.9h1M8 9.9h1" stroke="#0e86ee" stroke-width="1.1"/></g>
<g transform="translate(761.0,648.7)"><path d="M0 0H14V14H9.6L7 17.2L4.4 14H0Z" fill="#0e86ee"/><path d="M2.2 11.6V6.6L4.3 5.5V6.5L6.4 5.5V6.5L8.6 5.3V2.4H10.4V11.6Z" fill="#fff"/><path d="M3.2 7.9h1.6M5.8 7.9h1M8 7.9h1M3.2 9.9h1.6M5.8 9.9h1M8 9.9h1" stroke="#0e86ee" stroke-width="1.1"/></g>
<g transform="translate(976.0,466.5)"><path d="M0 0H14V14H9.6L7 17.2L4.4 14H0Z" fill="#0e86ee"/><path d="M2.2 11.6V6.6L4.3 5.5V6.5L6.4 5.5V6.5L8.6 5.3V2.4H10.4V11.6Z" fill="#fff"/><path d="M3.2 7.9h1.6M5.8 7.9h1M8 7.9h1M3.2 9.9h1.6M5.8 9.9h1M8 9.9h1" stroke="#0e86ee" stroke-width="1.1"/></g>
<g transform="translate(952.9,491.9)"><path d="M0 0H14V14H9.6L7 17.2L4.4 14H0Z" fill="#0e86ee"/><path d="M2.2 11.6V6.6L4.3 5.5V6.5L6.4 5.5V6.5L8.6 5.3V2.4H10.4V11.6Z" fill="#fff"/><path d="M3.2 7.9h1.6M5.8 7.9h1M8 7.9h1M3.2 9.9h1.6M5.8 9.9h1M8 9.9h1" stroke="#0e86ee" stroke-width="1.1"/></g>
<g transform="translate(1035.9,479.2)"><path d="M0 0H14V14H9.6L7 17.2L4.4 14H0Z" fill="#0e86ee"/><path d="M2.2 11.6V6.6L4.3 5.5V6.5L6.4 5.5V6.5L8.6 5.3V2.4H10.4V11.6Z" fill="#fff"/><path d="M3.2 7.9h1.6M5.8 7.9h1M8 7.9h1M3.2 9.9h1.6M5.8 9.9h1M8 9.9h1" stroke="#0e86ee" stroke-width="1.1"/></g>
<g transform="translate(1103.0,489.3)"><path d="M0 0H14V14H9.6L7 17.2L4.4 14H0Z" fill="#0e86ee"/><path d="M2.2 11.6V6.6L4.3 5.5V6.5L6.4 5.5V6.5L8.6 5.3V2.4H10.4V11.6Z" fill="#fff"/><path d="M3.2 7.9h1.6M5.8 7.9h1M8 7.9h1M3.2 9.9h1.6M5.8 9.9h1M8 9.9h1" stroke="#0e86ee" stroke-width="1.1"/></g>
<g transform="translate(1135.0,461.9)"><path d="M0 0H14V14H9.6L7 17.2L4.4 14H0Z" fill="#0e86ee"/><path d="M2.2 11.6V6.6L4.3 5.5V6.5L6.4 5.5V6.5L8.6 5.3V2.4H10.4V11.6Z" fill="#fff"/><path d="M3.2 7.9h1.6M5.8 7.9h1M8 7.9h1M3.2 9.9h1.6M5.8 9.9h1M8 9.9h1" stroke="#0e86ee" stroke-width="1.1"/></g>
<g transform="translate(1139.6,465.7)"><path d="M0 0H14V14H9.6L7 17.2L4.4 14H0Z" fill="#0e86ee"/><path d="M2.2 11.6V6.6L4.3 5.5V6.5L6.4 5.5V6.5L8.6 5.3V2.4H10.4V11.6Z" fill="#fff"/><path d="M3.2 7.9h1.6M5.8 7.9h1M8 7.9h1M3.2 9.9h1.6M5.8 9.9h1M8 9.9h1" stroke="#0e86ee" stroke-width="1.1"/></g>
<g transform="translate(781.8,444.6)"><path d="M0 0H14V14H9.6L7 17.2L4.4 14H0Z" fill="#0e86ee"/><path d="M2.2 11.6V6.6L4.3 5.5V6.5L6.4 5.5V6.5L8.6 5.3V2.4H10.4V11.6Z" fill="#fff"/><path d="M3.2 7.9h1.6M5.8 7.9h1M8 7.9h1M3.2 9.9h1.6M5.8 9.9h1M8 9.9h1" stroke="#0e86ee" stroke-width="1.1"/></g>
<g transform="translate(734.6,467.4)"><path d="M0 0H14V14H9.6L7 17.2L4.4 14H0Z" fill="#0e86ee"/><path d="M2.2 11.6V6.6L4.3 5.5V6.5L6.4 5.5V6.5L8.6 5.3V2.4H10.4V11.6Z" fill="#fff"/><path d="M3.2 7.9h1.6M5.8 7.9h1M8 7.9h1M3.2 9.9h1.6M5.8 9.9h1M8 9.9h1" stroke="#0e86ee" stroke-width="1.1"/></g>
<g transform="translate(792.3,482.6)"><path d="M0 0H14V14H9.6L7 17.2L4.4 14H0Z" fill="#0e86ee"/><path d="M2.2 11.6V6.6L4.3 5.5V6.5L6.4 5.5V6.5L8.6 5.3V2.4H10.4V11.6Z" fill="#fff"/><path d="M3.2 7.9h1.6M5.8 7.9h1M8 7.9h1M3.2 9.9h1.6M5.8 9.9h1M8 9.9h1" stroke="#0e86ee" stroke-width="1.1"/></g>
<g transform="translate(839.1,444.6)"><path d="M0 0H14V14H9.6L7 17.2L4.4 14H0Z" fill="#0e86ee"/><path d="M2.2 11.6V6.6L4.3 5.5V6.5L6.4 5.5V6.5L8.6 5.3V2.4H10.4V11.6Z" fill="#fff"/><path d="M3.2 7.9h1.6M5.8 7.9h1M8 7.9h1M3.2 9.9h1.6M5.8 9.9h1M8 9.9h1" stroke="#0e86ee" stroke-width="1.1"/></g>
<g transform="translate(835.8,455.6)"><path d="M0 0H14V14H9.6L7 17.2L4.4 14H0Z" fill="#0e86ee"/><path d="M2.2 11.6V6.6L4.3 5.5V6.5L6.4 5.5V6.5L8.6 5.3V2.4H10.4V11.6Z" fill="#fff"/><path d="M3.2 7.9h1.6M5.8 7.9h1M8 7.9h1M3.2 9.9h1.6M5.8 9.9h1M8 9.9h1" stroke="#0e86ee" stroke-width="1.1"/></g>
<g transform="translate(833.6,483.4)"><path d="M0 0H14V14H9.6L7 17.2L4.4 14H0Z" fill="#0e86ee"/><path d="M2.2 11.6V6.6L4.3 5.5V6.5L6.4 5.5V6.5L8.6 5.3V2.4H10.4V11.6Z" fill="#fff"/><path d="M3.2 7.9h1.6M5.8 7.9h1M8 7.9h1M3.2 9.9h1.6M5.8 9.9h1M8 9.9h1" stroke="#0e86ee" stroke-width="1.1"/></g>
<g transform="translate(838.6,485.1)"><path d="M0 0H14V14H9.6L7 17.2L4.4 14H0Z" fill="#0e86ee"/><path d="M2.2 11.6V6.6L4.3 5.5V6.5L6.4 5.5V6.5L8.6 5.3V2.4H10.4V11.6Z" fill="#fff"/><path d="M3.2 7.9h1.6M5.8 7.9h1M8 7.9h1M3.2 9.9h1.6M5.8 9.9h1M8 9.9h1" stroke="#0e86ee" stroke-width="1.1"/></g>
<g transform="translate(875.7,488.5)"><path d="M0 0H14V14H9.6L7 17.2L4.4 14H0Z" fill="#0e86ee"/><path d="M2.2 11.6V6.6L4.3 5.5V6.5L6.4 5.5V6.5L8.6 5.3V2.4H10.4V11.6Z" fill="#fff"/><path d="M3.2 7.9h1.6M5.8 7.9h1M8 7.9h1M3.2 9.9h1.6M5.8 9.9h1M8 9.9h1" stroke="#0e86ee" stroke-width="1.1"/></g>
<g transform="translate(894.8,435.3)"><path d="M0 0H14V14H9.6L7 17.2L4.4 14H0Z" fill="#0e86ee"/><path d="M2.2 11.6V6.6L4.3 5.5V6.5L6.4 5.5V6.5L8.6 5.3V2.4H10.4V11.6Z" fill="#fff"/><path d="M3.2 7.9h1.6M5.8 7.9h1M8 7.9h1M3.2 9.9h1.6M5.8 9.9h1M8 9.9h1" stroke="#0e86ee" stroke-width="1.1"/></g>
<g transform="translate(993.7,388.1)"><path d="M0 0H14V14H9.6L7 17.2L4.4 14H0Z" fill="#0e86ee"/><path d="M2.2 11.6V6.6L4.3 5.5V6.5L6.4 5.5V6.5L8.6 5.3V2.4H10.4V11.6Z" fill="#fff"/><path d="M3.2 7.9h1.6M5.8 7.9h1M8 7.9h1M3.2 9.9h1.6M5.8 9.9h1M8 9.9h1" stroke="#0e86ee" stroke-width="1.1"/></g>
<g transform="translate(1008.9,388.9)"><path d="M0 0H14V14H9.6L7 17.2L4.4 14H0Z" fill="#0e86ee"/><path d="M2.2 11.6V6.6L4.3 5.5V6.5L6.4 5.5V6.5L8.6 5.3V2.4H10.4V11.6Z" fill="#fff"/><path d="M3.2 7.9h1.6M5.8 7.9h1M8 7.9h1M3.2 9.9h1.6M5.8 9.9h1M8 9.9h1" stroke="#0e86ee" stroke-width="1.1"/></g>
<g transform="translate(1077.7,349.3)"><path d="M0 0H14V14H9.6L7 17.2L4.4 14H0Z" fill="#0e86ee"/><path d="M2.2 11.6V6.6L4.3 5.5V6.5L6.4 5.5V6.5L8.6 5.3V2.4H10.4V11.6Z" fill="#fff"/><path d="M3.2 7.9h1.6M5.8 7.9h1M8 7.9h1M3.2 9.9h1.6M5.8 9.9h1M8 9.9h1" stroke="#0e86ee" stroke-width="1.1"/></g>
<g transform="translate(1121.9,343.4)"><path d="M0 0H14V14H9.6L7 17.2L4.4 14H0Z" fill="#0e86ee"/><path d="M2.2 11.6V6.6L4.3 5.5V6.5L6.4 5.5V6.5L8.6 5.3V2.4H10.4V11.6Z" fill="#fff"/><path d="M3.2 7.9h1.6M5.8 7.9h1M8 7.9h1M3.2 9.9h1.6M5.8 9.9h1M8 9.9h1" stroke="#0e86ee" stroke-width="1.1"/></g>
<g transform="translate(1149.7,344.3)"><path d="M0 0H14V14H9.6L7 17.2L4.4 14H0Z" fill="#0e86ee"/><path d="M2.2 11.6V6.6L4.3 5.5V6.5L6.4 5.5V6.5L8.6 5.3V2.4H10.4V11.6Z" fill="#fff"/><path d="M3.2 7.9h1.6M5.8 7.9h1M8 7.9h1M3.2 9.9h1.6M5.8 9.9h1M8 9.9h1" stroke="#0e86ee" stroke-width="1.1"/></g>
<g transform="translate(1044.8,415.9)"><path d="M0 0H14V14H9.6L7 17.2L4.4 14H0Z" fill="#0e86ee"/><path d="M2.2 11.6V6.6L4.3 5.5V6.5L6.4 5.5V6.5L8.6 5.3V2.4H10.4V11.6Z" fill="#fff"/><path d="M3.2 7.9h1.6M5.8 7.9h1M8 7.9h1M3.2 9.9h1.6M5.8 9.9h1M8 9.9h1" stroke="#0e86ee" stroke-width="1.1"/></g>
<g transform="translate(1139.9,405.8)"><path d="M0 0H14V14H9.6L7 17.2L4.4 14H0Z" fill="#0e86ee"/><path d="M2.2 11.6V6.6L4.3 5.5V6.5L6.4 5.5V6.5L8.6 5.3V2.4H10.4V11.6Z" fill="#fff"/><path d="M3.2 7.9h1.6M5.8 7.9h1M8 7.9h1M3.2 9.9h1.6M5.8 9.9h1M8 9.9h1" stroke="#0e86ee" stroke-width="1.1"/></g>
<g transform="translate(1155.6,421.0)"><path d="M0 0H14V14H9.6L7 17.2L4.4 14H0Z" fill="#0e86ee"/><path d="M2.2 11.6V6.6L4.3 5.5V6.5L6.4 5.5V6.5L8.6 5.3V2.4H10.4V11.6Z" fill="#fff"/><path d="M3.2 7.9h1.6M5.8 7.9h1M8 7.9h1M3.2 9.9h1.6M5.8 9.9h1M8 9.9h1" stroke="#0e86ee" stroke-width="1.1"/></g>
<g transform="translate(1090.7,442.9)"><path d="M0 0H14V14H9.6L7 17.2L4.4 14H0Z" fill="#0e86ee"/><path d="M2.2 11.6V6.6L4.3 5.5V6.5L6.4 5.5V6.5L8.6 5.3V2.4H10.4V11.6Z" fill="#fff"/><path d="M3.2 7.9h1.6M5.8 7.9h1M8 7.9h1M3.2 9.9h1.6M5.8 9.9h1M8 9.9h1" stroke="#0e86ee" stroke-width="1.1"/></g>
<g transform="translate(1236.8,429.5)"><path d="M0 0H14V14H9.6L7 17.2L4.4 14H0Z" fill="#0e86ee"/><path d="M2.2 11.6V6.6L4.3 5.5V6.5L6.4 5.5V6.5L8.6 5.3V2.4H10.4V11.6Z" fill="#fff"/><path d="M3.2 7.9h1.6M5.8 7.9h1M8 7.9h1M3.2 9.9h1.6M5.8 9.9h1M8 9.9h1" stroke="#0e86ee" stroke-width="1.1"/></g>
<g transform="translate(1224.2,440.2)"><path d="M0 0H14V14H9.6L7 17.2L4.4 14H0Z" fill="#0e86ee"/><path d="M2.2 11.6V6.6L4.3 5.5V6.5L6.4 5.5V6.5L8.6 5.3V2.4H10.4V11.6Z" fill="#fff"/><path d="M3.2 7.9h1.6M5.8 7.9h1M8 7.9h1M3.2 9.9h1.6M5.8 9.9h1M8 9.9h1" stroke="#0e86ee" stroke-width="1.1"/></g>
<g transform="translate(1210.6,442.1)"><path d="M0 0H14V14H9.6L7 17.2L4.4 14H0Z" fill="#0e86ee"/><path d="M2.2 11.6V6.6L4.3 5.5V6.5L6.4 5.5V6.5L8.6 5.3V2.4H10.4V11.6Z" fill="#fff"/><path d="M3.2 7.9h1.6M5.8 7.9h1M8 7.9h1M3.2 9.9h1.6M5.8 9.9h1M8 9.9h1" stroke="#0e86ee" stroke-width="1.1"/></g>
<g transform="translate(1273.7,416.9)"><path d="M0 0H14V14H9.6L7 17.2L4.4 14H0Z" fill="#0e86ee"/><path d="M2.2 11.6V6.6L4.3 5.5V6.5L6.4 5.5V6.5L8.6 5.3V2.4H10.4V11.6Z" fill="#fff"/><path d="M3.2 7.9h1.6M5.8 7.9h1M8 7.9h1M3.2 9.9h1.6M5.8 9.9h1M8 9.9h1" stroke="#0e86ee" stroke-width="1.1"/></g>
<g transform="translate(1237.8,469.3)"><path d="M0 0H14V14H9.6L7 17.2L4.4 14H0Z" fill="#0e86ee"/><path d="M2.2 11.6V6.6L4.3 5.5V6.5L6.4 5.5V6.5L8.6 5.3V2.4H10.4V11.6Z" fill="#fff"/><path d="M3.2 7.9h1.6M5.8 7.9h1M8 7.9h1M3.2 9.9h1.6M5.8 9.9h1M8 9.9h1" stroke="#0e86ee" stroke-width="1.1"/></g>
<g transform="translate(1205.8,492.6)"><path d="M0 0H14V14H9.6L7 17.2L4.4 14H0Z" fill="#0e86ee"/><path d="M2.2 11.6V6.6L4.3 5.5V6.5L6.4 5.5V6.5L8.6 5.3V2.4H10.4V11.6Z" fill="#fff"/><path d="M3.2 7.9h1.6M5.8 7.9h1M8 7.9h1M3.2 9.9h1.6M5.8 9.9h1M8 9.9h1" stroke="#0e86ee" stroke-width="1.1"/></g>
<g transform="translate(1192.1,342.1)"><path d="M0 0H14V14H9.6L7 17.2L4.4 14H0Z" fill="#0e86ee"/><path d="M2.2 11.6V6.6L4.3 5.5V6.5L6.4 5.5V6.5L8.6 5.3V2.4H10.4V11.6Z" fill="#fff"/><path d="M3.2 7.9h1.6M5.8 7.9h1M8 7.9h1M3.2 9.9h1.6M5.8 9.9h1M8 9.9h1" stroke="#0e86ee" stroke-width="1.1"/></g>
<g transform="translate(805.7,302.1)"><path d="M0 0H14V14H9.6L7 17.2L4.4 14H0Z" fill="#0e86ee"/><path d="M2.2 11.6V6.6L4.3 5.5V6.5L6.4 5.5V6.5L8.6 5.3V2.4H10.4V11.6Z" fill="#fff"/><path d="M3.2 7.9h1.6M5.8 7.9h1M8 7.9h1M3.2 9.9h1.6M5.8 9.9h1M8 9.9h1" stroke="#0e86ee" stroke-width="1.1"/></g>
<g transform="translate(791.9,339.2)"><path d="M0 0H14V14H9.6L7 17.2L4.4 14H0Z" fill="#0e86ee"/><path d="M2.2 11.6V6.6L4.3 5.5V6.5L6.4 5.5V6.5L8.6 5.3V2.4H10.4V11.6Z" fill="#fff"/><path d="M3.2 7.9h1.6M5.8 7.9h1M8 7.9h1M3.2 9.9h1.6M5.8 9.9h1M8 9.9h1" stroke="#0e86ee" stroke-width="1.1"/></g>
<g transform="translate(746.7,358.6)"><path d="M0 0H14V14H9.6L7 17.2L4.4 14H0Z" fill="#0e86ee"/><path d="M2.2 11.6V6.6L4.3 5.5V6.5L6.4 5.5V6.5L8.6 5.3V2.4H10.4V11.6Z" fill="#fff"/><path d="M3.2 7.9h1.6M5.8 7.9h1M8 7.9h1M3.2 9.9h1.6M5.8 9.9h1M8 9.9h1" stroke="#0e86ee" stroke-width="1.1"/></g>
<g transform="translate(742.5,356.9)"><path d="M0 0H14V14H9.6L7 17.2L4.4 14H0Z" fill="#0e86ee"/><path d="M2.2 11.6V6.6L4.3 5.5V6.5L6.4 5.5V6.5L8.6 5.3V2.4H10.4V11.6Z" fill="#fff"/><path d="M3.2 7.9h1.6M5.8 7.9h1M8 7.9h1M3.2 9.9h1.6M5.8 9.9h1M8 9.9h1" stroke="#0e86ee" stroke-width="1.1"/></g>
<g transform="translate(810.8,374.6)"><path d="M0 0H14V14H9.6L7 17.2L4.4 14H0Z" fill="#0e86ee"/><path d="M2.2 11.6V6.6L4.3 5.5V6.5L6.4 5.5V6.5L8.6 5.3V2.4H10.4V11.6Z" fill="#fff"/><path d="M3.2 7.9h1.6M5.8 7.9h1M8 7.9h1M3.2 9.9h1.6M5.8 9.9h1M8 9.9h1" stroke="#0e86ee" stroke-width="1.1"/></g>
<g transform="translate(869.0,375.4)"><path d="M0 0H14V14H9.6L7 17.2L4.4 14H0Z" fill="#0e86ee"/><path d="M2.2 11.6V6.6L4.3 5.5V6.5L6.4 5.5V6.5L8.6 5.3V2.4H10.4V11.6Z" fill="#fff"/><path d="M3.2 7.9h1.6M5.8 7.9h1M8 7.9h1M3.2 9.9h1.6M5.8 9.9h1M8 9.9h1" stroke="#0e86ee" stroke-width="1.1"/></g>
<g transform="translate(885.8,372.1)"><path d="M0 0H14V14H9.6L7 17.2L4.4 14H0Z" fill="#0e86ee"/><path d="M2.2 11.6V6.6L4.3 5.5V6.5L6.4 5.5V6.5L8.6 5.3V2.4H10.4V11.6Z" fill="#fff"/><path d="M3.2 7.9h1.6M5.8 7.9h1M8 7.9h1M3.2 9.9h1.6M5.8 9.9h1M8 9.9h1" stroke="#0e86ee" stroke-width="1.1"/></g>
<g transform="translate(911.1,377.1)"><path d="M0 0H14V14H9.6L7 17.2L4.4 14H0Z" fill="#0e86ee"/><path d="M2.2 11.6V6.6L4.3 5.5V6.5L6.4 5.5V6.5L8.6 5.3V2.4H10.4V11.6Z" fill="#fff"/><path d="M3.2 7.9h1.6M5.8 7.9h1M8 7.9h1M3.2 9.9h1.6M5.8 9.9h1M8 9.9h1" stroke="#0e86ee" stroke-width="1.1"/></g>
<g transform="translate(915.0,340.0)"><path d="M0 0H14V14H9.6L7 17.2L4.4 14H0Z" fill="#0e86ee"/><path d="M2.2 11.6V6.6L4.3 5.5V6.5L6.4 5.5V6.5L8.6 5.3V2.4H10.4V11.6Z" fill="#fff"/><path d="M3.2 7.9h1.6M5.8 7.9h1M8 7.9h1M3.2 9.9h1.6M5.8 9.9h1M8 9.9h1" stroke="#0e86ee" stroke-width="1.1"/></g>
<g transform="translate(704.9,389.9)"><path d="M0 0H14V14H9.6L7 17.2L4.4 14H0Z" fill="#0e86ee"/><path d="M2.2 11.6V6.6L4.3 5.5V6.5L6.4 5.5V6.5L8.6 5.3V2.4H10.4V11.6Z" fill="#fff"/><path d="M3.2 7.9h1.6M5.8 7.9h1M8 7.9h1M3.2 9.9h1.6M5.8 9.9h1M8 9.9h1" stroke="#0e86ee" stroke-width="1.1"/></g>
<g transform="translate(696.0,392.9)"><path d="M0 0H14V14H9.6L7 17.2L4.4 14H0Z" fill="#0e86ee"/><path d="M2.2 11.6V6.6L4.3 5.5V6.5L6.4 5.5V6.5L8.6 5.3V2.4H10.4V11.6Z" fill="#fff"/><path d="M3.2 7.9h1.6M5.8 7.9h1M8 7.9h1M3.2 9.9h1.6M5.8 9.9h1M8 9.9h1" stroke="#0e86ee" stroke-width="1.1"/></g>
<g transform="translate(624.3,480.6)"><path d="M0 0H16.8V16.3H11.6L8.4 19.6L5.2 16.3H0Z" fill="#e8141a" stroke="#8a1010" stroke-width="0.8"/><path d="M4 14L5.5 6.5H9L8 14Z M9.5 14L10.5 9L13 8.5L13.5 14Z M7 5L10 2.5L11 4L8.5 6Z" fill="#fff"/></g>
<g transform="translate(730.1,541.7)"><path d="M0 0H16.8V16.3H11.6L8.4 19.6L5.2 16.3H0Z" fill="#e8141a" stroke="#8a1010" stroke-width="0.8"/><path d="M4 14L5.5 6.5H9L8 14Z M9.5 14L10.5 9L13 8.5L13.5 14Z M7 5L10 2.5L11 4L8.5 6Z" fill="#fff"/></g>
<g transform="translate(538.0,555.9)"><path d="M0 0H16.8V16.3H11.6L8.4 19.6L5.2 16.3H0Z" fill="#e8141a" stroke="#8a1010" stroke-width="0.8"/><path d="M8.4 2.5C10 5 12.5 6.5 12 10C11.6 12 10 13 8.4 13C6.8 13 5 12 4.8 10C4.6 7.5 7 6.5 8.4 2.5Z" fill="#fff"/><path d="M3.5 14.3H13.3" stroke="#fff" stroke-width="1.2"/><path d="M8.4 8C9.3 9.2 9.8 10 9.4 11C9 11.8 7.8 11.8 7.4 11C7 10 7.8 9.2 8.4 8Z" fill="#e8141a"/></g>
<g transform="translate(545.6,556.8)"><path d="M0 0H16.8V16.3H11.6L8.4 19.6L5.2 16.3H0Z" fill="#e8141a" stroke="#8a1010" stroke-width="0.8"/><path d="M8.4 2.5C10 5 12.5 6.5 12 10C11.6 12 10 13 8.4 13C6.8 13 5 12 4.8 10C4.6 7.5 7 6.5 8.4 2.5Z" fill="#fff"/><path d="M3.5 14.3H13.3" stroke="#fff" stroke-width="1.2"/><path d="M8.4 8C9.3 9.2 9.8 10 9.4 11C9 11.8 7.8 11.8 7.4 11C7 10 7.8 9.2 8.4 8Z" fill="#e8141a"/></g>
<g transform="translate(1149.1,478.2)"><path d="M0 0H16.8V16.3H11.6L8.4 19.6L5.2 16.3H0Z" fill="#e8141a" stroke="#8a1010" stroke-width="0.8"/><path d="M8.4 2.5C10 5 12.5 6.5 12 10C11.6 12 10 13 8.4 13C6.8 13 5 12 4.8 10C4.6 7.5 7 6.5 8.4 2.5Z" fill="#fff"/><path d="M3.5 14.3H13.3" stroke="#fff" stroke-width="1.2"/><path d="M8.4 8C9.3 9.2 9.8 10 9.4 11C9 11.8 7.8 11.8 7.4 11C7 10 7.8 9.2 8.4 8Z" fill="#e8141a"/></g>
<g transform="translate(749.5,447.0)"><path d="M0 0H16.8V16.3H11.6L8.4 19.6L5.2 16.3H0Z" fill="#f39a16" stroke="#7a5020" stroke-width="0.9"/><circle cx="8.4" cy="7" r="3.6" fill="none" stroke="#fde6b0" stroke-width="1.2"/><path d="M6.6 11.5H10.2M6.9 13.2H9.9" stroke="#fde6b0" stroke-width="1.1"/></g>
<g transform="translate(1241.3,509.5)"><path d="M0 0H16.8V16.3H11.6L8.4 19.6L5.2 16.3H0Z" fill="#f39a16" stroke="#7a5020" stroke-width="0.9"/><circle cx="8.4" cy="7" r="3.6" fill="none" stroke="#fde6b0" stroke-width="1.2"/><path d="M6.6 11.5H10.2M6.9 13.2H9.9" stroke="#fde6b0" stroke-width="1.1"/></g>
</svg>
<!--/MAP-->
<div id="panel">
  <div class="ttl"><span>Mapové vrstvy</span>
    <svg class="abs" style="left:360px;top:6px" width="34" height="34" viewBox="0 0 34 34"><path d="M2.3 2.6 L30.6 30.6 M30.6 2.6 L2.3 30.6" stroke="#fff" stroke-width="2.4" stroke-linecap="round"/></svg>
  </div>
  <div class="hdr" style="top:47px"><span>Tepelná mapa</span></div>
  <div class="hdr" style="top:231px"><span>Kombinovaná výroba elektriny a tepla</span></div>
  <div class="hdr" style="top:392px"><span>Spotreba tepla v budovách</span></div>
  <div class="hdr" style="top:526px"><span>Rozvody</span></div>
  <div class="cb" style="top:99px"><svg width="11" height="11"><path d="M2.2 5.6 L4.6 8.2 L9.2 2.6" fill="none" stroke="#1aa01a" stroke-width="2.2"/></svg></div><div class="row" style="top:94px">Obce so spotrebou tepla nad<br>20GWh</div>
  <div class="cb" style="top:150px"><svg width="11" height="11"><path d="M2.2 5.6 L4.6 8.2 L9.2 2.6" fill="none" stroke="#1aa01a" stroke-width="2.2"/></svg></div><div class="row" style="top:145px">Elektrárne</div>
  <div class="cb" style="top:177px"><svg width="11" height="11"><path d="M2.2 5.6 L4.6 8.2 L9.2 2.6" fill="none" stroke="#1aa01a" stroke-width="2.2"/></svg></div><div class="row" style="top:173px">Spaľovne</div>
  <div class="cb" style="top:205px"><svg width="11" height="11"><path d="M2.2 5.6 L4.6 8.2 L9.2 2.6" fill="none" stroke="#1aa01a" stroke-width="2.2"/></svg></div><div class="row" style="top:201px">Zar. na výrobu tepla a chladu</div>
  <div class="cb" style="top:283px"></div><div class="row" style="top:278px">Výroba elektriny podľa okresov</div>
  <div class="cb" style="top:311px"></div><div class="row" style="top:306px">Výroba elektriny podľa krajov</div>
  <div class="cb" style="top:339px"></div><div class="row" style="top:334px">Výroba tepla podľa okresov</div>
  <div class="cb" style="top:367px"></div><div class="row" style="top:362px">Výroba tepla podľa krajov</div>
  <div class="cb" style="top:444px"></div><div class="row" style="top:439px">Spotreba tepla podľa obcí</div>
  <div class="cb" style="top:472px"></div><div class="row" style="top:467px">Spotreba tepla podľa okresov</div>
  <div class="cb" style="top:500px"></div><div class="row" style="top:495px">Spotreba tepla podľa krajov</div>
  <div class="cb" style="top:578px"><svg width="11" height="11"><path d="M2.2 5.6 L4.6 8.2 L9.2 2.6" fill="none" stroke="#1aa01a" stroke-width="2.2"/></svg></div><div class="row" style="top:573px">Rozvody - prevádzkovatelia</div>
</div>


<div class="abs" style="left:1150px;top:71px;width:230px;height:33px;border:1px solid #cfcfcf;background:#fff"></div>
<div class="abs" style="left:1162px;top:79px;font-size:15.5px;line-height:20px;color:#9a9a9a;white-space:nowrap">Zadajte názov obce</div>

<div class="abs" style="left:534px;top:833px;font-size:11px;line-height:13px;color:#555;white-space:nowrap">20 km</div>
<div class="abs" style="left:529px;top:847px;width:39px;height:2px;background:#2f4b7c"></div>

<div class="abs" style="left:789px;top:833px;width:108px;height:23px;border:1px solid #c8c8c8;border-radius:3px;background:#fff"></div>
<div class="abs" style="left:805px;top:837px;font-size:14px;line-height:16px;color:#666;white-space:nowrap">WGS84</div>
<div class="abs" style="left:882px;top:835px;width:15px;height:21px;border-radius:2px;background:linear-gradient(135deg,#cbd8f6,#a9c3f2)"></div>
<svg class="abs" style="left:882px;top:835px" width="15" height="21"><path d="M3.5 8.2 L7.5 12.2 L11.5 8.2" fill="none" stroke="#44557d" stroke-width="2.2"/></svg>

<div class="abs" style="left:983px;top:833px;font-size:14px;line-height:16px;color:#666;white-space:nowrap;letter-spacing:0.15px">47.20590, 16.55028</div>

</body></html>
